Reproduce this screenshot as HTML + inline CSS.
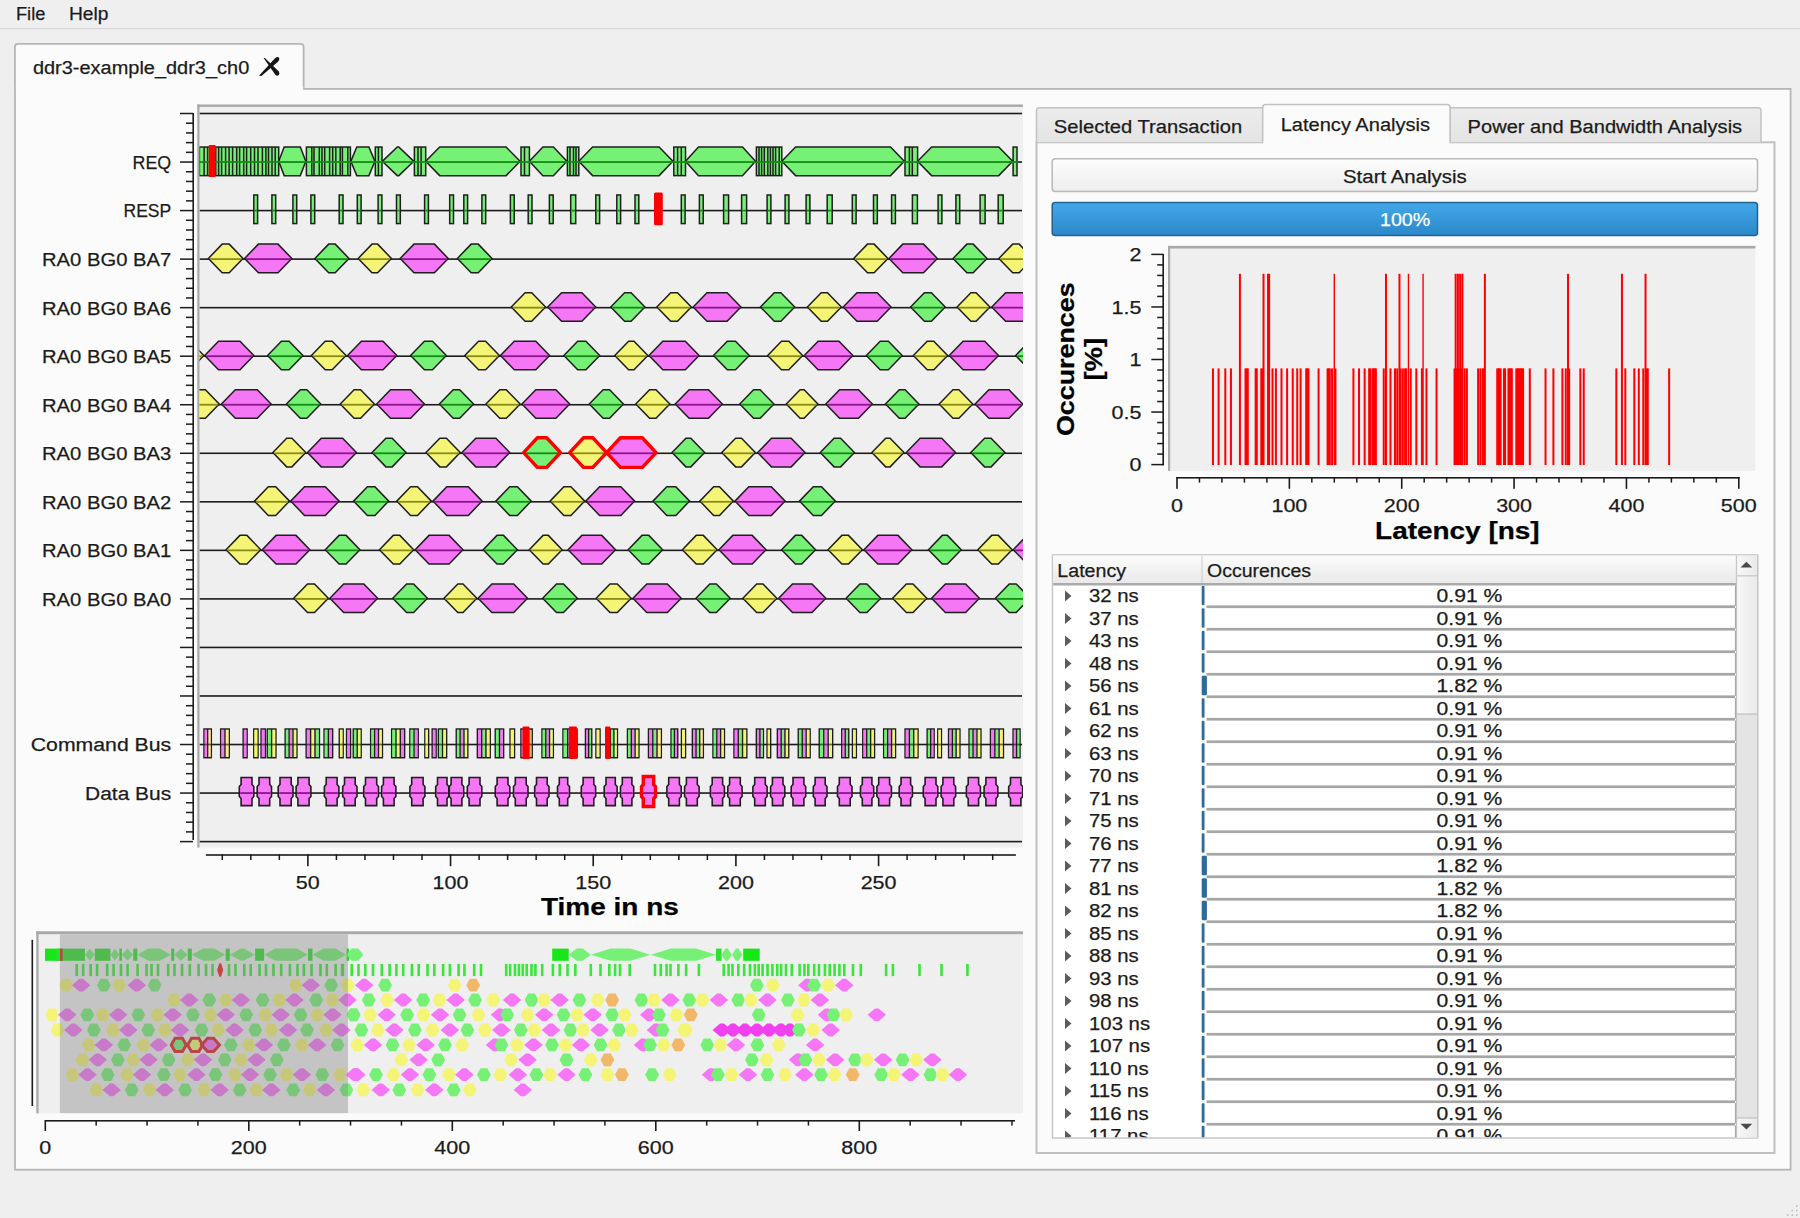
<!DOCTYPE html><html><head><meta charset="utf-8"><title>ddr3</title><style>html,body{margin:0;padding:0;width:1800px;height:1218px;overflow:hidden;background:#efefef;}svg{position:absolute;left:0;top:0;display:block;font-family:"Liberation Sans",sans-serif;}</style></head><body>
<svg width="1800" height="1218" viewBox="0 0 1800 1218">
<defs><linearGradient id="gBtn" x1="0" y1="0" x2="0" y2="1"><stop offset="0" stop-color="#fdfdfd"/><stop offset="1" stop-color="#ededed"/></linearGradient><linearGradient id="gProg" x1="0" y1="0" x2="0" y2="1"><stop offset="0" stop-color="#42a8ea"/><stop offset="1" stop-color="#2b88c8"/></linearGradient><linearGradient id="gHdr" x1="0" y1="0" x2="0" y2="1"><stop offset="0" stop-color="#fcfcfc"/><stop offset="1" stop-color="#e9e9e9"/></linearGradient><linearGradient id="gTabIn" x1="0" y1="0" x2="0" y2="1"><stop offset="0" stop-color="#ececec"/><stop offset="1" stop-color="#e4e4e4"/></linearGradient><linearGradient id="gThumb" x1="0" y1="0" x2="1" y2="0"><stop offset="0" stop-color="#f7f7f7"/><stop offset="1" stop-color="#eaeaea"/></linearGradient><clipPath id="cMain"><rect x="199.5" y="107" width="823.5" height="740.5"/></clipPath><clipPath id="cOv"><rect x="38.6" y="934.2" width="984.4" height="179.1"/></clipPath><clipPath id="cTbl"><rect x="1053.3" y="585.5" width="683" height="551.8"/></clipPath></defs>
<rect x="0" y="0" width="1800" height="1218" fill="#efefef"/>
<text x="16" y="20" font-size="19.2"  fill="#1b1b1b" stroke="#1b1b1b" stroke-width="0.25" textLength="29.34" lengthAdjust="spacingAndGlyphs">File</text>
<text x="68.9" y="20" font-size="19.2"  fill="#1b1b1b" stroke="#1b1b1b" stroke-width="0.25" textLength="39.49" lengthAdjust="spacingAndGlyphs">Help</text>
<rect x="0" y="28" width="1800" height="1.2" fill="#d6d6d6"/>
<rect x="15" y="88.9" width="1775.6" height="1080.8" fill="#fbfbfb" stroke="#b6b6b6" stroke-width="1.8"/>
<path d="M14.9 88.9 V47 Q14.9 43.8 18 43.8 H300.5 Q303.6 43.8 303.6 47 V88.9" fill="#fbfbfb" stroke="#b6b6b6" stroke-width="1.8"/>
<rect x="15.9" y="86" width="287.2" height="4" fill="#fbfbfb"/>
<text x="32.9" y="73.8" font-size="19.2"  fill="#1b1b1b" stroke="#1b1b1b" stroke-width="0.25" textLength="216.34" lengthAdjust="spacingAndGlyphs">ddr3-example_ddr3_ch0</text>
<path d="M259 75.8 L275.2 58 Q277.8 56.2 279.2 57.9 Q279.8 59.7 278 61.8 L261.4 76 Z" fill="#151515"/>
<path d="M263.6 57.9 L264.9 58.1 L278.6 71.2 Q280.2 73.8 278.5 75.3 Q276.6 76.3 275.2 74.4 Z" fill="#151515"/>
<rect x="197.3" y="104.5" width="825.7" height="743" fill="#efefef"/>
<rect x="197.3" y="104.5" width="825.7" height="2.4" fill="#a9a9a9"/>
<rect x="197.3" y="104.5" width="2.2" height="743" fill="#a9a9a9"/>
<rect x="192.4" y="113" width="1.6" height="727" fill="#1b1b1b"/>
<rect x="180" y="112.75" width="13" height="1.5" fill="#1b1b1b"/>
<rect x="186" y="122.46" width="7" height="1.5" fill="#1b1b1b"/>
<rect x="186" y="132.17" width="7" height="1.5" fill="#1b1b1b"/>
<rect x="186" y="141.87" width="7" height="1.5" fill="#1b1b1b"/>
<rect x="186" y="151.58" width="7" height="1.5" fill="#1b1b1b"/>
<rect x="180" y="161.29" width="13" height="1.5" fill="#1b1b1b"/>
<rect x="186" y="171" width="7" height="1.5" fill="#1b1b1b"/>
<rect x="186" y="180.71" width="7" height="1.5" fill="#1b1b1b"/>
<rect x="186" y="190.41" width="7" height="1.5" fill="#1b1b1b"/>
<rect x="186" y="200.12" width="7" height="1.5" fill="#1b1b1b"/>
<rect x="180" y="209.83" width="13" height="1.5" fill="#1b1b1b"/>
<rect x="186" y="219.54" width="7" height="1.5" fill="#1b1b1b"/>
<rect x="186" y="229.25" width="7" height="1.5" fill="#1b1b1b"/>
<rect x="186" y="238.95" width="7" height="1.5" fill="#1b1b1b"/>
<rect x="186" y="248.66" width="7" height="1.5" fill="#1b1b1b"/>
<rect x="180" y="258.37" width="13" height="1.5" fill="#1b1b1b"/>
<rect x="186" y="268.08" width="7" height="1.5" fill="#1b1b1b"/>
<rect x="186" y="277.79" width="7" height="1.5" fill="#1b1b1b"/>
<rect x="186" y="287.49" width="7" height="1.5" fill="#1b1b1b"/>
<rect x="186" y="297.2" width="7" height="1.5" fill="#1b1b1b"/>
<rect x="180" y="306.91" width="13" height="1.5" fill="#1b1b1b"/>
<rect x="186" y="316.62" width="7" height="1.5" fill="#1b1b1b"/>
<rect x="186" y="326.33" width="7" height="1.5" fill="#1b1b1b"/>
<rect x="186" y="336.03" width="7" height="1.5" fill="#1b1b1b"/>
<rect x="186" y="345.74" width="7" height="1.5" fill="#1b1b1b"/>
<rect x="180" y="355.45" width="13" height="1.5" fill="#1b1b1b"/>
<rect x="186" y="365.16" width="7" height="1.5" fill="#1b1b1b"/>
<rect x="186" y="374.87" width="7" height="1.5" fill="#1b1b1b"/>
<rect x="186" y="384.57" width="7" height="1.5" fill="#1b1b1b"/>
<rect x="186" y="394.28" width="7" height="1.5" fill="#1b1b1b"/>
<rect x="180" y="403.99" width="13" height="1.5" fill="#1b1b1b"/>
<rect x="186" y="413.7" width="7" height="1.5" fill="#1b1b1b"/>
<rect x="186" y="423.41" width="7" height="1.5" fill="#1b1b1b"/>
<rect x="186" y="433.11" width="7" height="1.5" fill="#1b1b1b"/>
<rect x="186" y="442.82" width="7" height="1.5" fill="#1b1b1b"/>
<rect x="180" y="452.53" width="13" height="1.5" fill="#1b1b1b"/>
<rect x="186" y="462.24" width="7" height="1.5" fill="#1b1b1b"/>
<rect x="186" y="471.95" width="7" height="1.5" fill="#1b1b1b"/>
<rect x="186" y="481.65" width="7" height="1.5" fill="#1b1b1b"/>
<rect x="186" y="491.36" width="7" height="1.5" fill="#1b1b1b"/>
<rect x="180" y="501.07" width="13" height="1.5" fill="#1b1b1b"/>
<rect x="186" y="510.78" width="7" height="1.5" fill="#1b1b1b"/>
<rect x="186" y="520.49" width="7" height="1.5" fill="#1b1b1b"/>
<rect x="186" y="530.19" width="7" height="1.5" fill="#1b1b1b"/>
<rect x="186" y="539.9" width="7" height="1.5" fill="#1b1b1b"/>
<rect x="180" y="549.61" width="13" height="1.5" fill="#1b1b1b"/>
<rect x="186" y="559.32" width="7" height="1.5" fill="#1b1b1b"/>
<rect x="186" y="569.03" width="7" height="1.5" fill="#1b1b1b"/>
<rect x="186" y="578.73" width="7" height="1.5" fill="#1b1b1b"/>
<rect x="186" y="588.44" width="7" height="1.5" fill="#1b1b1b"/>
<rect x="180" y="598.15" width="13" height="1.5" fill="#1b1b1b"/>
<rect x="186" y="607.86" width="7" height="1.5" fill="#1b1b1b"/>
<rect x="186" y="617.57" width="7" height="1.5" fill="#1b1b1b"/>
<rect x="186" y="627.27" width="7" height="1.5" fill="#1b1b1b"/>
<rect x="186" y="636.98" width="7" height="1.5" fill="#1b1b1b"/>
<rect x="180" y="646.69" width="13" height="1.5" fill="#1b1b1b"/>
<rect x="186" y="656.4" width="7" height="1.5" fill="#1b1b1b"/>
<rect x="186" y="666.11" width="7" height="1.5" fill="#1b1b1b"/>
<rect x="186" y="675.81" width="7" height="1.5" fill="#1b1b1b"/>
<rect x="186" y="685.52" width="7" height="1.5" fill="#1b1b1b"/>
<rect x="180" y="695.23" width="13" height="1.5" fill="#1b1b1b"/>
<rect x="186" y="704.94" width="7" height="1.5" fill="#1b1b1b"/>
<rect x="186" y="714.65" width="7" height="1.5" fill="#1b1b1b"/>
<rect x="186" y="724.35" width="7" height="1.5" fill="#1b1b1b"/>
<rect x="186" y="734.06" width="7" height="1.5" fill="#1b1b1b"/>
<rect x="180" y="743.77" width="13" height="1.5" fill="#1b1b1b"/>
<rect x="186" y="753.48" width="7" height="1.5" fill="#1b1b1b"/>
<rect x="186" y="763.19" width="7" height="1.5" fill="#1b1b1b"/>
<rect x="186" y="772.89" width="7" height="1.5" fill="#1b1b1b"/>
<rect x="186" y="782.6" width="7" height="1.5" fill="#1b1b1b"/>
<rect x="180" y="792.31" width="13" height="1.5" fill="#1b1b1b"/>
<rect x="186" y="802.02" width="7" height="1.5" fill="#1b1b1b"/>
<rect x="186" y="811.73" width="7" height="1.5" fill="#1b1b1b"/>
<rect x="186" y="821.43" width="7" height="1.5" fill="#1b1b1b"/>
<rect x="186" y="831.14" width="7" height="1.5" fill="#1b1b1b"/>
<rect x="180" y="840.85" width="13" height="1.5" fill="#1b1b1b"/>
<text x="132.6" y="168.94" font-size="19.2"  fill="#1b1b1b" stroke="#1b1b1b" stroke-width="0.25" textLength="38.61" lengthAdjust="spacingAndGlyphs">REQ</text>
<text x="123.5" y="217.48" font-size="19.2"  fill="#1b1b1b" stroke="#1b1b1b" stroke-width="0.25" textLength="47.69" lengthAdjust="spacingAndGlyphs">RESP</text>
<text x="42" y="266.02" font-size="19.2"  fill="#1b1b1b" stroke="#1b1b1b" stroke-width="0.25" textLength="129.23" lengthAdjust="spacingAndGlyphs">RA0 BG0 BA7</text>
<text x="42" y="314.56" font-size="19.2"  fill="#1b1b1b" stroke="#1b1b1b" stroke-width="0.25" textLength="129.23" lengthAdjust="spacingAndGlyphs">RA0 BG0 BA6</text>
<text x="42" y="363.1" font-size="19.2"  fill="#1b1b1b" stroke="#1b1b1b" stroke-width="0.25" textLength="129.23" lengthAdjust="spacingAndGlyphs">RA0 BG0 BA5</text>
<text x="42" y="411.64" font-size="19.2"  fill="#1b1b1b" stroke="#1b1b1b" stroke-width="0.25" textLength="129.23" lengthAdjust="spacingAndGlyphs">RA0 BG0 BA4</text>
<text x="42" y="460.18" font-size="19.2"  fill="#1b1b1b" stroke="#1b1b1b" stroke-width="0.25" textLength="129.23" lengthAdjust="spacingAndGlyphs">RA0 BG0 BA3</text>
<text x="42" y="508.72" font-size="19.2"  fill="#1b1b1b" stroke="#1b1b1b" stroke-width="0.25" textLength="129.23" lengthAdjust="spacingAndGlyphs">RA0 BG0 BA2</text>
<text x="42" y="557.26" font-size="19.2"  fill="#1b1b1b" stroke="#1b1b1b" stroke-width="0.25" textLength="129.23" lengthAdjust="spacingAndGlyphs">RA0 BG0 BA1</text>
<text x="42" y="605.8" font-size="19.2"  fill="#1b1b1b" stroke="#1b1b1b" stroke-width="0.25" textLength="129.23" lengthAdjust="spacingAndGlyphs">RA0 BG0 BA0</text>
<text x="30.8" y="751.42" font-size="19.2"  fill="#1b1b1b" stroke="#1b1b1b" stroke-width="0.25" textLength="140.38" lengthAdjust="spacingAndGlyphs">Command Bus</text>
<text x="85.1" y="799.96" font-size="19.2"  fill="#1b1b1b" stroke="#1b1b1b" stroke-width="0.25" textLength="86.07" lengthAdjust="spacingAndGlyphs">Data Bus</text>
<g clip-path="url(#cMain)">
<rect x="199.5" y="112.7" width="822.5" height="1.6" fill="#1b1b1b"/>
<rect x="199.5" y="161.24" width="822.5" height="1.6" fill="#1b1b1b"/>
<rect x="199.5" y="209.78" width="822.5" height="1.6" fill="#1b1b1b"/>
<rect x="199.5" y="258.32" width="822.5" height="1.6" fill="#1b1b1b"/>
<rect x="199.5" y="306.86" width="822.5" height="1.6" fill="#1b1b1b"/>
<rect x="199.5" y="355.4" width="822.5" height="1.6" fill="#1b1b1b"/>
<rect x="199.5" y="403.94" width="822.5" height="1.6" fill="#1b1b1b"/>
<rect x="199.5" y="452.48" width="822.5" height="1.6" fill="#1b1b1b"/>
<rect x="199.5" y="501.02" width="822.5" height="1.6" fill="#1b1b1b"/>
<rect x="199.5" y="549.56" width="822.5" height="1.6" fill="#1b1b1b"/>
<rect x="199.5" y="598.1" width="822.5" height="1.6" fill="#1b1b1b"/>
<rect x="199.5" y="646.64" width="822.5" height="1.6" fill="#1b1b1b"/>
<rect x="199.5" y="695.18" width="822.5" height="1.6" fill="#1b1b1b"/>
<rect x="199.5" y="743.72" width="822.5" height="1.6" fill="#1b1b1b"/>
<rect x="199.5" y="792.26" width="822.5" height="1.6" fill="#1b1b1b"/>
<rect x="199.5" y="840.8" width="822.5" height="1.6" fill="#1b1b1b"/>
<polygon points="278.7,161.34 284.2,147.04 300.3,147.04 305.8,161.34 300.3,175.64 284.2,175.64" fill="#76f176" stroke="#1e1e1e" stroke-width="1.5" stroke-linejoin="miter"/>
<polygon points="350.8,161.34 356.8,147.04 368.9,147.04 374.9,161.34 368.9,175.64 356.8,175.64" fill="#76f176" stroke="#1e1e1e" stroke-width="1.5" stroke-linejoin="miter"/>
<polygon points="382.3,161.34 397.3,147.04 398.8,147.04 413.8,161.34 398.8,175.64 397.3,175.64" fill="#76f176" stroke="#1e1e1e" stroke-width="1.5" stroke-linejoin="miter"/>
<polygon points="425.7,161.34 439.7,147.04 506.1,147.04 520.1,161.34 506.1,175.64 439.7,175.64" fill="#76f176" stroke="#1e1e1e" stroke-width="1.5" stroke-linejoin="miter"/>
<polygon points="529.4,161.34 542.9,147.04 553.4,147.04 566.9,161.34 553.4,175.64 542.9,175.64" fill="#76f176" stroke="#1e1e1e" stroke-width="1.5" stroke-linejoin="miter"/>
<polygon points="578.8,161.34 592.6,147.04 659.1,147.04 672.9,161.34 659.1,175.64 592.6,175.64" fill="#76f176" stroke="#1e1e1e" stroke-width="1.5" stroke-linejoin="miter"/>
<polygon points="685.5,161.34 698.5,147.04 742.5,147.04 755.5,161.34 742.5,175.64 698.5,175.64" fill="#76f176" stroke="#1e1e1e" stroke-width="1.5" stroke-linejoin="miter"/>
<polygon points="781.8,161.34 795.6,147.04 890.5,147.04 904.3,161.34 890.5,175.64 795.6,175.64" fill="#76f176" stroke="#1e1e1e" stroke-width="1.5" stroke-linejoin="miter"/>
<polygon points="917.6,161.34 931.6,147.04 998.7,147.04 1012.7,161.34 998.7,175.64 931.6,175.64" fill="#76f176" stroke="#1e1e1e" stroke-width="1.5" stroke-linejoin="miter"/>
<rect x="199.4" y="147.04" width="79.3" height="28.6" fill="#76f176" stroke="#1e1e1e" stroke-width="1.5"/>
<rect x="203.35" y="147.04" width="1.5" height="28.6" fill="#1e1e1e"/>
<rect x="206.85" y="147.04" width="1.5" height="28.6" fill="#1e1e1e"/>
<rect x="214.95" y="147.04" width="1.5" height="28.6" fill="#1e1e1e"/>
<rect x="217.85" y="147.04" width="1.5" height="28.6" fill="#1e1e1e"/>
<rect x="220.85" y="147.04" width="1.5" height="28.6" fill="#1e1e1e"/>
<rect x="224.85" y="147.04" width="1.5" height="28.6" fill="#1e1e1e"/>
<rect x="228.35" y="147.04" width="1.5" height="28.6" fill="#1e1e1e"/>
<rect x="231.85" y="147.04" width="1.5" height="28.6" fill="#1e1e1e"/>
<rect x="235.95" y="147.04" width="1.5" height="28.6" fill="#1e1e1e"/>
<rect x="238.85" y="147.04" width="1.5" height="28.6" fill="#1e1e1e"/>
<rect x="242.95" y="147.04" width="1.5" height="28.6" fill="#1e1e1e"/>
<rect x="245.85" y="147.04" width="1.5" height="28.6" fill="#1e1e1e"/>
<rect x="249.95" y="147.04" width="1.5" height="28.6" fill="#1e1e1e"/>
<rect x="253.75" y="147.04" width="1.5" height="28.6" fill="#1e1e1e"/>
<rect x="257.25" y="147.04" width="1.5" height="28.6" fill="#1e1e1e"/>
<rect x="261.65" y="147.04" width="1.5" height="28.6" fill="#1e1e1e"/>
<rect x="265.15" y="147.04" width="1.5" height="28.6" fill="#1e1e1e"/>
<rect x="267.75" y="147.04" width="1.5" height="28.6" fill="#1e1e1e"/>
<rect x="271.25" y="147.04" width="1.5" height="28.6" fill="#1e1e1e"/>
<rect x="274.45" y="147.04" width="1.5" height="28.6" fill="#1e1e1e"/>
<rect x="306.4" y="147.04" width="44" height="28.6" fill="#76f176" stroke="#1e1e1e" stroke-width="1.5"/>
<rect x="311.05" y="147.04" width="1.5" height="28.6" fill="#1e1e1e"/>
<rect x="313.25" y="147.04" width="1.5" height="28.6" fill="#1e1e1e"/>
<rect x="318.55" y="147.04" width="1.5" height="28.6" fill="#1e1e1e"/>
<rect x="321.25" y="147.04" width="1.5" height="28.6" fill="#1e1e1e"/>
<rect x="323.95" y="147.04" width="1.5" height="28.6" fill="#1e1e1e"/>
<rect x="328.85" y="147.04" width="1.5" height="28.6" fill="#1e1e1e"/>
<rect x="331.95" y="147.04" width="1.5" height="28.6" fill="#1e1e1e"/>
<rect x="335.05" y="147.04" width="1.5" height="28.6" fill="#1e1e1e"/>
<rect x="339.45" y="147.04" width="1.5" height="28.6" fill="#1e1e1e"/>
<rect x="341.65" y="147.04" width="1.5" height="28.6" fill="#1e1e1e"/>
<rect x="347.05" y="147.04" width="1.5" height="28.6" fill="#1e1e1e"/>
<rect x="375.3" y="147.04" width="6.7" height="28.6" fill="#76f176" stroke="#1e1e1e" stroke-width="1.5"/>
<rect x="377.65" y="147.04" width="1.5" height="28.6" fill="#1e1e1e"/>
<rect x="414.4" y="147.04" width="11.3" height="28.6" fill="#76f176" stroke="#1e1e1e" stroke-width="1.5"/>
<rect x="417.25" y="147.04" width="1.5" height="28.6" fill="#1e1e1e"/>
<rect x="420.35" y="147.04" width="1.5" height="28.6" fill="#1e1e1e"/>
<rect x="521" y="147.04" width="8.4" height="28.6" fill="#76f176" stroke="#1e1e1e" stroke-width="1.5"/>
<rect x="523.75" y="147.04" width="1.5" height="28.6" fill="#1e1e1e"/>
<rect x="567.4" y="147.04" width="11.4" height="28.6" fill="#76f176" stroke="#1e1e1e" stroke-width="1.5"/>
<rect x="569.25" y="147.04" width="1.5" height="28.6" fill="#1e1e1e"/>
<rect x="572.75" y="147.04" width="1.5" height="28.6" fill="#1e1e1e"/>
<rect x="575.25" y="147.04" width="1.5" height="28.6" fill="#1e1e1e"/>
<rect x="673.8" y="147.04" width="11.7" height="28.6" fill="#76f176" stroke="#1e1e1e" stroke-width="1.5"/>
<rect x="676.85" y="147.04" width="1.5" height="28.6" fill="#1e1e1e"/>
<rect x="680.55" y="147.04" width="1.5" height="28.6" fill="#1e1e1e"/>
<rect x="756.4" y="147.04" width="25.4" height="28.6" fill="#76f176" stroke="#1e1e1e" stroke-width="1.5"/>
<rect x="758.25" y="147.04" width="1.5" height="28.6" fill="#1e1e1e"/>
<rect x="760.85" y="147.04" width="1.5" height="28.6" fill="#1e1e1e"/>
<rect x="763.55" y="147.04" width="1.5" height="28.6" fill="#1e1e1e"/>
<rect x="767.05" y="147.04" width="1.5" height="28.6" fill="#1e1e1e"/>
<rect x="769.65" y="147.04" width="1.5" height="28.6" fill="#1e1e1e"/>
<rect x="772.25" y="147.04" width="1.5" height="28.6" fill="#1e1e1e"/>
<rect x="774.85" y="147.04" width="1.5" height="28.6" fill="#1e1e1e"/>
<rect x="778.45" y="147.04" width="1.5" height="28.6" fill="#1e1e1e"/>
<rect x="905" y="147.04" width="12.6" height="28.6" fill="#76f176" stroke="#1e1e1e" stroke-width="1.5"/>
<rect x="908.65" y="147.04" width="1.5" height="28.6" fill="#1e1e1e"/>
<rect x="911.55" y="147.04" width="1.5" height="28.6" fill="#1e1e1e"/>
<rect x="1013.1" y="147.04" width="3.9" height="28.6" fill="#76f176" stroke="#1e1e1e" stroke-width="1.5"/>
<rect x="199.5" y="161.14" width="818.5" height="1.8" fill="#148c14"/>
<rect x="208.7" y="144.9" width="7" height="32.2" rx="1" fill="#ff0000"/>
<rect x="253.8" y="194.98" width="3.8" height="28.6" fill="#76f176" stroke="#1e1e1e" stroke-width="1.5"/>
<rect x="254.5" y="209.68" width="2.4" height="1.8" fill="#148c14"/>
<rect x="271.9" y="194.98" width="3.8" height="28.6" fill="#76f176" stroke="#1e1e1e" stroke-width="1.5"/>
<rect x="272.6" y="209.68" width="2.4" height="1.8" fill="#148c14"/>
<rect x="292.9" y="194.98" width="3.8" height="28.6" fill="#76f176" stroke="#1e1e1e" stroke-width="1.5"/>
<rect x="293.6" y="209.68" width="2.4" height="1.8" fill="#148c14"/>
<rect x="310.9" y="194.98" width="3.8" height="28.6" fill="#76f176" stroke="#1e1e1e" stroke-width="1.5"/>
<rect x="311.6" y="209.68" width="2.4" height="1.8" fill="#148c14"/>
<rect x="339.2" y="194.98" width="3.8" height="28.6" fill="#76f176" stroke="#1e1e1e" stroke-width="1.5"/>
<rect x="339.9" y="209.68" width="2.4" height="1.8" fill="#148c14"/>
<rect x="357.3" y="194.98" width="3.8" height="28.6" fill="#76f176" stroke="#1e1e1e" stroke-width="1.5"/>
<rect x="358" y="209.68" width="2.4" height="1.8" fill="#148c14"/>
<rect x="378.1" y="194.98" width="3.8" height="28.6" fill="#76f176" stroke="#1e1e1e" stroke-width="1.5"/>
<rect x="378.8" y="209.68" width="2.4" height="1.8" fill="#148c14"/>
<rect x="396.5" y="194.98" width="3.8" height="28.6" fill="#76f176" stroke="#1e1e1e" stroke-width="1.5"/>
<rect x="397.2" y="209.68" width="2.4" height="1.8" fill="#148c14"/>
<rect x="424.6" y="194.98" width="3.8" height="28.6" fill="#76f176" stroke="#1e1e1e" stroke-width="1.5"/>
<rect x="425.3" y="209.68" width="2.4" height="1.8" fill="#148c14"/>
<rect x="449.7" y="194.98" width="3.8" height="28.6" fill="#76f176" stroke="#1e1e1e" stroke-width="1.5"/>
<rect x="450.4" y="209.68" width="2.4" height="1.8" fill="#148c14"/>
<rect x="463.8" y="194.98" width="3.8" height="28.6" fill="#76f176" stroke="#1e1e1e" stroke-width="1.5"/>
<rect x="464.5" y="209.68" width="2.4" height="1.8" fill="#148c14"/>
<rect x="481.9" y="194.98" width="3.8" height="28.6" fill="#76f176" stroke="#1e1e1e" stroke-width="1.5"/>
<rect x="482.6" y="209.68" width="2.4" height="1.8" fill="#148c14"/>
<rect x="510.4" y="194.98" width="3.8" height="28.6" fill="#76f176" stroke="#1e1e1e" stroke-width="1.5"/>
<rect x="511.1" y="209.68" width="2.4" height="1.8" fill="#148c14"/>
<rect x="528.2" y="194.98" width="3.8" height="28.6" fill="#76f176" stroke="#1e1e1e" stroke-width="1.5"/>
<rect x="528.9" y="209.68" width="2.4" height="1.8" fill="#148c14"/>
<rect x="549.4" y="194.98" width="3.8" height="28.6" fill="#76f176" stroke="#1e1e1e" stroke-width="1.5"/>
<rect x="550.1" y="209.68" width="2.4" height="1.8" fill="#148c14"/>
<rect x="570.7" y="194.98" width="5" height="28.6" fill="#76f176" stroke="#1e1e1e" stroke-width="1.5"/>
<rect x="571.4" y="209.68" width="3.6" height="1.8" fill="#148c14"/>
<rect x="595.8" y="194.98" width="3.8" height="28.6" fill="#76f176" stroke="#1e1e1e" stroke-width="1.5"/>
<rect x="596.5" y="209.68" width="2.4" height="1.8" fill="#148c14"/>
<rect x="616.8" y="194.98" width="3.8" height="28.6" fill="#76f176" stroke="#1e1e1e" stroke-width="1.5"/>
<rect x="617.5" y="209.68" width="2.4" height="1.8" fill="#148c14"/>
<rect x="635" y="194.98" width="3.8" height="28.6" fill="#76f176" stroke="#1e1e1e" stroke-width="1.5"/>
<rect x="635.7" y="209.68" width="2.4" height="1.8" fill="#148c14"/>
<rect x="681.3" y="194.98" width="3.8" height="28.6" fill="#76f176" stroke="#1e1e1e" stroke-width="1.5"/>
<rect x="682" y="209.68" width="2.4" height="1.8" fill="#148c14"/>
<rect x="699.4" y="194.98" width="3.8" height="28.6" fill="#76f176" stroke="#1e1e1e" stroke-width="1.5"/>
<rect x="700.1" y="209.68" width="2.4" height="1.8" fill="#148c14"/>
<rect x="723.6" y="194.98" width="5" height="28.6" fill="#76f176" stroke="#1e1e1e" stroke-width="1.5"/>
<rect x="724.3" y="209.68" width="3.6" height="1.8" fill="#148c14"/>
<rect x="741.6" y="194.98" width="5" height="28.6" fill="#76f176" stroke="#1e1e1e" stroke-width="1.5"/>
<rect x="742.3" y="209.68" width="3.6" height="1.8" fill="#148c14"/>
<rect x="767.1" y="194.98" width="3.8" height="28.6" fill="#76f176" stroke="#1e1e1e" stroke-width="1.5"/>
<rect x="767.8" y="209.68" width="2.4" height="1.8" fill="#148c14"/>
<rect x="785.1" y="194.98" width="3.8" height="28.6" fill="#76f176" stroke="#1e1e1e" stroke-width="1.5"/>
<rect x="785.8" y="209.68" width="2.4" height="1.8" fill="#148c14"/>
<rect x="806.1" y="194.98" width="3.8" height="28.6" fill="#76f176" stroke="#1e1e1e" stroke-width="1.5"/>
<rect x="806.8" y="209.68" width="2.4" height="1.8" fill="#148c14"/>
<rect x="827.2" y="194.98" width="5" height="28.6" fill="#76f176" stroke="#1e1e1e" stroke-width="1.5"/>
<rect x="827.9" y="209.68" width="3.6" height="1.8" fill="#148c14"/>
<rect x="852.3" y="194.98" width="3.8" height="28.6" fill="#76f176" stroke="#1e1e1e" stroke-width="1.5"/>
<rect x="853" y="209.68" width="2.4" height="1.8" fill="#148c14"/>
<rect x="873.5" y="194.98" width="3.8" height="28.6" fill="#76f176" stroke="#1e1e1e" stroke-width="1.5"/>
<rect x="874.2" y="209.68" width="2.4" height="1.8" fill="#148c14"/>
<rect x="891.6" y="194.98" width="3.8" height="28.6" fill="#76f176" stroke="#1e1e1e" stroke-width="1.5"/>
<rect x="892.3" y="209.68" width="2.4" height="1.8" fill="#148c14"/>
<rect x="912.4" y="194.98" width="5" height="28.6" fill="#76f176" stroke="#1e1e1e" stroke-width="1.5"/>
<rect x="913.1" y="209.68" width="3.6" height="1.8" fill="#148c14"/>
<rect x="938.1" y="194.98" width="3.8" height="28.6" fill="#76f176" stroke="#1e1e1e" stroke-width="1.5"/>
<rect x="938.8" y="209.68" width="2.4" height="1.8" fill="#148c14"/>
<rect x="955.9" y="194.98" width="3.8" height="28.6" fill="#76f176" stroke="#1e1e1e" stroke-width="1.5"/>
<rect x="956.6" y="209.68" width="2.4" height="1.8" fill="#148c14"/>
<rect x="980.1" y="194.98" width="5" height="28.6" fill="#76f176" stroke="#1e1e1e" stroke-width="1.5"/>
<rect x="980.8" y="209.68" width="3.6" height="1.8" fill="#148c14"/>
<rect x="998.2" y="194.98" width="5" height="28.6" fill="#76f176" stroke="#1e1e1e" stroke-width="1.5"/>
<rect x="998.9" y="209.68" width="3.6" height="1.8" fill="#148c14"/>
<rect x="654" y="192.5" width="8.8" height="32.7" rx="1.5" fill="#ff0000"/>
<polygon points="208.4,258.42 222.2,244.12 229.2,244.12 243,258.42 229.2,272.72 222.2,272.72" fill="#f4f476" stroke="#1e1e1e" stroke-width="1.5" stroke-linejoin="miter"/>
<rect x="209.9" y="258.22" width="31.6" height="1.8" fill="#8c8c14"/>
<polygon points="244.6,258.42 258.4,244.12 278,244.12 291.8,258.42 278,272.72 258.4,272.72" fill="#f677f6" stroke="#1e1e1e" stroke-width="1.5" stroke-linejoin="miter"/>
<rect x="246.1" y="258.22" width="44.2" height="1.8" fill="#8c148c"/>
<polygon points="314.9,258.42 328.7,244.12 335.2,244.12 349,258.42 335.2,272.72 328.7,272.72" fill="#76f176" stroke="#1e1e1e" stroke-width="1.5" stroke-linejoin="miter"/>
<rect x="316.4" y="258.22" width="31.1" height="1.8" fill="#148c14"/>
<polygon points="358.2,258.42 372,244.12 377.6,244.12 391.4,258.42 377.6,272.72 372,272.72" fill="#f4f476" stroke="#1e1e1e" stroke-width="1.5" stroke-linejoin="miter"/>
<rect x="359.7" y="258.22" width="30.2" height="1.8" fill="#8c8c14"/>
<polygon points="400.2,258.42 414,244.12 434.4,244.12 448.2,258.42 434.4,272.72 414,272.72" fill="#f677f6" stroke="#1e1e1e" stroke-width="1.5" stroke-linejoin="miter"/>
<rect x="401.7" y="258.22" width="45" height="1.8" fill="#8c148c"/>
<polygon points="457.4,258.42 471.2,244.12 478.2,244.12 492,258.42 478.2,272.72 471.2,272.72" fill="#76f176" stroke="#1e1e1e" stroke-width="1.5" stroke-linejoin="miter"/>
<rect x="458.9" y="258.22" width="31.6" height="1.8" fill="#148c14"/>
<polygon points="853.7,258.42 867.5,244.12 874.1,244.12 887.9,258.42 874.1,272.72 867.5,272.72" fill="#f4f476" stroke="#1e1e1e" stroke-width="1.5" stroke-linejoin="miter"/>
<rect x="855.2" y="258.22" width="31.2" height="1.8" fill="#8c8c14"/>
<polygon points="889,258.42 902.8,244.12 923.5,244.12 937.3,258.42 923.5,272.72 902.8,272.72" fill="#f677f6" stroke="#1e1e1e" stroke-width="1.5" stroke-linejoin="miter"/>
<rect x="890.5" y="258.22" width="45.3" height="1.8" fill="#8c148c"/>
<polygon points="953.1,258.42 966.9,244.12 973.2,244.12 987,258.42 973.2,272.72 966.9,272.72" fill="#76f176" stroke="#1e1e1e" stroke-width="1.5" stroke-linejoin="miter"/>
<rect x="954.6" y="258.22" width="30.9" height="1.8" fill="#148c14"/>
<polygon points="998.9,258.42 1012.7,244.12 1019.2,244.12 1033,258.42 1019.2,272.72 1012.7,272.72" fill="#f4f476" stroke="#1e1e1e" stroke-width="1.5" stroke-linejoin="miter"/>
<rect x="1000.4" y="258.22" width="31.1" height="1.8" fill="#8c8c14"/>
<polygon points="511.3,306.96 525.1,292.66 531.7,292.66 545.5,306.96 531.7,321.26 525.1,321.26" fill="#f4f476" stroke="#1e1e1e" stroke-width="1.5" stroke-linejoin="miter"/>
<rect x="512.8" y="306.76" width="31.2" height="1.8" fill="#8c8c14"/>
<polygon points="547.8,306.96 561.6,292.66 581.9,292.66 595.7,306.96 581.9,321.26 561.6,321.26" fill="#f677f6" stroke="#1e1e1e" stroke-width="1.5" stroke-linejoin="miter"/>
<rect x="549.3" y="306.76" width="44.9" height="1.8" fill="#8c148c"/>
<polygon points="610.8,306.96 624.6,292.66 631.1,292.66 644.9,306.96 631.1,321.26 624.6,321.26" fill="#76f176" stroke="#1e1e1e" stroke-width="1.5" stroke-linejoin="miter"/>
<rect x="612.3" y="306.76" width="31.1" height="1.8" fill="#148c14"/>
<polygon points="656.9,306.96 670.7,292.66 677.5,292.66 691.3,306.96 677.5,321.26 670.7,321.26" fill="#f4f476" stroke="#1e1e1e" stroke-width="1.5" stroke-linejoin="miter"/>
<rect x="658.4" y="306.76" width="31.4" height="1.8" fill="#8c8c14"/>
<polygon points="693.2,306.96 707,292.66 727.1,292.66 740.9,306.96 727.1,321.26 707,321.26" fill="#f677f6" stroke="#1e1e1e" stroke-width="1.5" stroke-linejoin="miter"/>
<rect x="694.7" y="306.76" width="44.7" height="1.8" fill="#8c148c"/>
<polygon points="760.5,306.96 774.3,292.66 780.9,292.66 794.7,306.96 780.9,321.26 774.3,321.26" fill="#76f176" stroke="#1e1e1e" stroke-width="1.5" stroke-linejoin="miter"/>
<rect x="762" y="306.76" width="31.2" height="1.8" fill="#148c14"/>
<polygon points="807.4,306.96 821.2,292.66 827.5,292.66 841.3,306.96 827.5,321.26 821.2,321.26" fill="#f4f476" stroke="#1e1e1e" stroke-width="1.5" stroke-linejoin="miter"/>
<rect x="808.9" y="306.76" width="30.9" height="1.8" fill="#8c8c14"/>
<polygon points="843.2,306.96 857,292.66 877.2,292.66 891,306.96 877.2,321.26 857,321.26" fill="#f677f6" stroke="#1e1e1e" stroke-width="1.5" stroke-linejoin="miter"/>
<rect x="844.7" y="306.76" width="44.8" height="1.8" fill="#8c148c"/>
<polygon points="910.6,306.96 924.4,292.66 931.4,292.66 945.2,306.96 931.4,321.26 924.4,321.26" fill="#76f176" stroke="#1e1e1e" stroke-width="1.5" stroke-linejoin="miter"/>
<rect x="912.1" y="306.76" width="31.6" height="1.8" fill="#148c14"/>
<polygon points="957.1,306.96 970.9,292.66 976.1,292.66 989.9,306.96 976.1,321.26 970.9,321.26" fill="#f4f476" stroke="#1e1e1e" stroke-width="1.5" stroke-linejoin="miter"/>
<rect x="958.6" y="306.76" width="29.8" height="1.8" fill="#8c8c14"/>
<polygon points="991.8,306.96 1005.6,292.66 1026.2,292.66 1040,306.96 1026.2,321.26 1005.6,321.26" fill="#f677f6" stroke="#1e1e1e" stroke-width="1.5" stroke-linejoin="miter"/>
<rect x="993.3" y="306.76" width="45.2" height="1.8" fill="#8c148c"/>
<polygon points="170,355.5 183.8,341.2 190,341.2 203.8,355.5 190,369.8 183.8,369.8" fill="#f4f476" stroke="#1e1e1e" stroke-width="1.5" stroke-linejoin="miter"/>
<rect x="171.5" y="355.3" width="30.8" height="1.8" fill="#8c8c14"/>
<polygon points="204.7,355.5 218.5,341.2 240,341.2 253.8,355.5 240,369.8 218.5,369.8" fill="#f677f6" stroke="#1e1e1e" stroke-width="1.5" stroke-linejoin="miter"/>
<rect x="206.2" y="355.3" width="46.1" height="1.8" fill="#8c148c"/>
<polygon points="267.6,355.5 281.4,341.2 289.1,341.2 302.9,355.5 289.1,369.8 281.4,369.8" fill="#76f176" stroke="#1e1e1e" stroke-width="1.5" stroke-linejoin="miter"/>
<rect x="269.1" y="355.3" width="32.3" height="1.8" fill="#148c14"/>
<polygon points="311.4,355.5 325.2,341.2 332.2,341.2 346,355.5 332.2,369.8 325.2,369.8" fill="#f4f476" stroke="#1e1e1e" stroke-width="1.5" stroke-linejoin="miter"/>
<rect x="312.9" y="355.3" width="31.6" height="1.8" fill="#8c8c14"/>
<polygon points="347.6,355.5 361.4,341.2 383,341.2 396.8,355.5 383,369.8 361.4,369.8" fill="#f677f6" stroke="#1e1e1e" stroke-width="1.5" stroke-linejoin="miter"/>
<rect x="349.1" y="355.3" width="46.2" height="1.8" fill="#8c148c"/>
<polygon points="410.6,355.5 424.4,341.2 432.5,341.2 446.3,355.5 432.5,369.8 424.4,369.8" fill="#76f176" stroke="#1e1e1e" stroke-width="1.5" stroke-linejoin="miter"/>
<rect x="412.1" y="355.3" width="32.7" height="1.8" fill="#148c14"/>
<polygon points="464.8,355.5 478.6,341.2 485.6,341.2 499.4,355.5 485.6,369.8 478.6,369.8" fill="#f4f476" stroke="#1e1e1e" stroke-width="1.5" stroke-linejoin="miter"/>
<rect x="466.3" y="355.3" width="31.6" height="1.8" fill="#8c8c14"/>
<polygon points="500.5,355.5 514.3,341.2 535.8,341.2 549.6,355.5 535.8,369.8 514.3,369.8" fill="#f677f6" stroke="#1e1e1e" stroke-width="1.5" stroke-linejoin="miter"/>
<rect x="502" y="355.3" width="46.1" height="1.8" fill="#8c148c"/>
<polygon points="563.9,355.5 577.7,341.2 585.9,341.2 599.7,355.5 585.9,369.8 577.7,369.8" fill="#76f176" stroke="#1e1e1e" stroke-width="1.5" stroke-linejoin="miter"/>
<rect x="565.4" y="355.3" width="32.8" height="1.8" fill="#148c14"/>
<polygon points="614.8,355.5 628.6,341.2 634,341.2 647.8,355.5 634,369.8 628.6,369.8" fill="#f4f476" stroke="#1e1e1e" stroke-width="1.5" stroke-linejoin="miter"/>
<rect x="616.3" y="355.3" width="30" height="1.8" fill="#8c8c14"/>
<polygon points="649,355.5 662.8,341.2 685.3,341.2 699.1,355.5 685.3,369.8 662.8,369.8" fill="#f677f6" stroke="#1e1e1e" stroke-width="1.5" stroke-linejoin="miter"/>
<rect x="650.5" y="355.3" width="47.1" height="1.8" fill="#8c148c"/>
<polygon points="713.5,355.5 727.3,341.2 735.5,341.2 749.3,355.5 735.5,369.8 727.3,369.8" fill="#76f176" stroke="#1e1e1e" stroke-width="1.5" stroke-linejoin="miter"/>
<rect x="715" y="355.3" width="32.8" height="1.8" fill="#148c14"/>
<polygon points="767.7,355.5 781.5,341.2 788.8,341.2 802.6,355.5 788.8,369.8 781.5,369.8" fill="#f4f476" stroke="#1e1e1e" stroke-width="1.5" stroke-linejoin="miter"/>
<rect x="769.2" y="355.3" width="31.9" height="1.8" fill="#8c8c14"/>
<polygon points="804.3,355.5 818.1,341.2 839,341.2 852.8,355.5 839,369.8 818.1,369.8" fill="#f677f6" stroke="#1e1e1e" stroke-width="1.5" stroke-linejoin="miter"/>
<rect x="805.8" y="355.3" width="45.5" height="1.8" fill="#8c148c"/>
<polygon points="866.4,355.5 880.2,341.2 888.4,341.2 902.2,355.5 888.4,369.8 880.2,369.8" fill="#76f176" stroke="#1e1e1e" stroke-width="1.5" stroke-linejoin="miter"/>
<rect x="867.9" y="355.3" width="32.8" height="1.8" fill="#148c14"/>
<polygon points="913.4,355.5 927.2,341.2 933.8,341.2 947.6,355.5 933.8,369.8 927.2,369.8" fill="#f4f476" stroke="#1e1e1e" stroke-width="1.5" stroke-linejoin="miter"/>
<rect x="914.9" y="355.3" width="31.2" height="1.8" fill="#8c8c14"/>
<polygon points="949.3,355.5 963.1,341.2 984.7,341.2 998.5,355.5 984.7,369.8 963.1,369.8" fill="#f677f6" stroke="#1e1e1e" stroke-width="1.5" stroke-linejoin="miter"/>
<rect x="950.8" y="355.3" width="46.2" height="1.8" fill="#8c148c"/>
<polygon points="1015.7,355.5 1029.5,341.2 1036.2,341.2 1050,355.5 1036.2,369.8 1029.5,369.8" fill="#76f176" stroke="#1e1e1e" stroke-width="1.5" stroke-linejoin="miter"/>
<rect x="1017.2" y="355.3" width="31.3" height="1.8" fill="#148c14"/>
<polygon points="185,404.04 198.8,389.74 205.4,389.74 219.2,404.04 205.4,418.34 198.8,418.34" fill="#f4f476" stroke="#1e1e1e" stroke-width="1.5" stroke-linejoin="miter"/>
<rect x="186.5" y="403.84" width="31.2" height="1.8" fill="#8c8c14"/>
<polygon points="221.5,404.04 235.3,389.74 257.3,389.74 271.1,404.04 257.3,418.34 235.3,418.34" fill="#f677f6" stroke="#1e1e1e" stroke-width="1.5" stroke-linejoin="miter"/>
<rect x="223" y="403.84" width="46.6" height="1.8" fill="#8c148c"/>
<polygon points="286.5,404.04 300.3,389.74 306.9,389.74 320.7,404.04 306.9,418.34 300.3,418.34" fill="#76f176" stroke="#1e1e1e" stroke-width="1.5" stroke-linejoin="miter"/>
<rect x="288" y="403.84" width="31.2" height="1.8" fill="#148c14"/>
<polygon points="340.3,404.04 354.1,389.74 360.6,389.74 374.4,404.04 360.6,418.34 354.1,418.34" fill="#f4f476" stroke="#1e1e1e" stroke-width="1.5" stroke-linejoin="miter"/>
<rect x="341.8" y="403.84" width="31.1" height="1.8" fill="#8c8c14"/>
<polygon points="376.7,404.04 390.5,389.74 410.6,389.74 424.4,404.04 410.6,418.34 390.5,418.34" fill="#f677f6" stroke="#1e1e1e" stroke-width="1.5" stroke-linejoin="miter"/>
<rect x="378.2" y="403.84" width="44.7" height="1.8" fill="#8c148c"/>
<polygon points="439.4,404.04 453.2,389.74 459.7,389.74 473.5,404.04 459.7,418.34 453.2,418.34" fill="#76f176" stroke="#1e1e1e" stroke-width="1.5" stroke-linejoin="miter"/>
<rect x="440.9" y="403.84" width="31.1" height="1.8" fill="#148c14"/>
<polygon points="486,404.04 499.8,389.74 506.3,389.74 520.1,404.04 506.3,418.34 499.8,418.34" fill="#f4f476" stroke="#1e1e1e" stroke-width="1.5" stroke-linejoin="miter"/>
<rect x="487.5" y="403.84" width="31.1" height="1.8" fill="#8c8c14"/>
<polygon points="522,404.04 535.8,389.74 555.9,389.74 569.7,404.04 555.9,418.34 535.8,418.34" fill="#f677f6" stroke="#1e1e1e" stroke-width="1.5" stroke-linejoin="miter"/>
<rect x="523.5" y="403.84" width="44.7" height="1.8" fill="#8c148c"/>
<polygon points="589.3,404.04 603.1,389.74 609.6,389.74 623.4,404.04 609.6,418.34 603.1,418.34" fill="#76f176" stroke="#1e1e1e" stroke-width="1.5" stroke-linejoin="miter"/>
<rect x="590.8" y="403.84" width="31.1" height="1.8" fill="#148c14"/>
<polygon points="635.8,404.04 649.6,389.74 656,389.74 669.8,404.04 656,418.34 649.6,418.34" fill="#f4f476" stroke="#1e1e1e" stroke-width="1.5" stroke-linejoin="miter"/>
<rect x="637.3" y="403.84" width="31" height="1.8" fill="#8c8c14"/>
<polygon points="675.3,404.04 689.1,389.74 708.5,389.74 722.3,404.04 708.5,418.34 689.1,418.34" fill="#f677f6" stroke="#1e1e1e" stroke-width="1.5" stroke-linejoin="miter"/>
<rect x="676.8" y="403.84" width="44" height="1.8" fill="#8c148c"/>
<polygon points="739.8,404.04 753.6,389.74 760.1,389.74 773.9,404.04 760.1,418.34 753.6,418.34" fill="#76f176" stroke="#1e1e1e" stroke-width="1.5" stroke-linejoin="miter"/>
<rect x="741.3" y="403.84" width="31.1" height="1.8" fill="#148c14"/>
<polygon points="786.3,404.04 800.1,389.74 804.1,389.74 817.9,404.04 804.1,418.34 800.1,418.34" fill="#f4f476" stroke="#1e1e1e" stroke-width="1.5" stroke-linejoin="miter"/>
<rect x="787.8" y="403.84" width="28.6" height="1.8" fill="#8c8c14"/>
<polygon points="825.8,404.04 839.6,389.74 858.5,389.74 872.3,404.04 858.5,418.34 839.6,418.34" fill="#f677f6" stroke="#1e1e1e" stroke-width="1.5" stroke-linejoin="miter"/>
<rect x="827.3" y="403.84" width="43.5" height="1.8" fill="#8c148c"/>
<polygon points="885.5,404.04 899.3,389.74 905.1,389.74 918.9,404.04 905.1,418.34 899.3,418.34" fill="#76f176" stroke="#1e1e1e" stroke-width="1.5" stroke-linejoin="miter"/>
<rect x="887" y="403.84" width="30.4" height="1.8" fill="#148c14"/>
<polygon points="939.2,404.04 953,389.74 958.9,389.74 972.7,404.04 958.9,418.34 953,418.34" fill="#f4f476" stroke="#1e1e1e" stroke-width="1.5" stroke-linejoin="miter"/>
<rect x="940.7" y="403.84" width="30.5" height="1.8" fill="#8c8c14"/>
<polygon points="975.1,404.04 988.9,389.74 1009,389.74 1022.8,404.04 1009,418.34 988.9,418.34" fill="#f677f6" stroke="#1e1e1e" stroke-width="1.5" stroke-linejoin="miter"/>
<rect x="976.6" y="403.84" width="44.7" height="1.8" fill="#8c148c"/>
<polygon points="272.9,452.58 286.7,438.28 291.9,438.28 305.7,452.58 291.9,466.88 286.7,466.88" fill="#f4f476" stroke="#1e1e1e" stroke-width="1.5" stroke-linejoin="miter"/>
<rect x="274.4" y="452.38" width="29.8" height="1.8" fill="#8c8c14"/>
<polygon points="307.5,452.58 321.3,438.28 342.6,438.28 356.4,452.58 342.6,466.88 321.3,466.88" fill="#f677f6" stroke="#1e1e1e" stroke-width="1.5" stroke-linejoin="miter"/>
<rect x="309" y="452.38" width="45.9" height="1.8" fill="#8c148c"/>
<polygon points="372.1,452.58 385.9,438.28 392.2,438.28 406,452.58 392.2,466.88 385.9,466.88" fill="#76f176" stroke="#1e1e1e" stroke-width="1.5" stroke-linejoin="miter"/>
<rect x="373.6" y="452.38" width="30.9" height="1.8" fill="#148c14"/>
<polygon points="426,452.58 439.8,438.28 446.4,438.28 460.2,452.58 446.4,466.88 439.8,466.88" fill="#f4f476" stroke="#1e1e1e" stroke-width="1.5" stroke-linejoin="miter"/>
<rect x="427.5" y="452.38" width="31.2" height="1.8" fill="#8c8c14"/>
<polygon points="462,452.58 475.8,438.28 495.9,438.28 509.7,452.58 495.9,466.88 475.8,466.88" fill="#f677f6" stroke="#1e1e1e" stroke-width="1.5" stroke-linejoin="miter"/>
<rect x="463.5" y="452.38" width="44.7" height="1.8" fill="#8c148c"/>
<polygon points="523.6,452.58 537.4,438.28 546.7,438.28 560.5,452.58 546.7,466.88 537.4,466.88" fill="#76f176" stroke="#1e1e1e" stroke-width="1.5" stroke-linejoin="miter"/>
<rect x="525.1" y="452.38" width="33.9" height="1.8" fill="#148c14"/>
<polygon points="569.7,452.58 583.5,438.28 592.8,438.28 606.6,452.58 592.8,466.88 583.5,466.88" fill="#f4f476" stroke="#1e1e1e" stroke-width="1.5" stroke-linejoin="miter"/>
<rect x="571.2" y="452.38" width="33.9" height="1.8" fill="#8c8c14"/>
<polygon points="606.6,452.58 620.4,438.28 642.3,438.28 656.1,452.58 642.3,466.88 620.4,466.88" fill="#f677f6" stroke="#1e1e1e" stroke-width="1.5" stroke-linejoin="miter"/>
<rect x="608.1" y="452.38" width="46.5" height="1.8" fill="#8c148c"/>
<polygon points="672.1,452.58 685.9,438.28 690.8,438.28 704.6,452.58 690.8,466.88 685.9,466.88" fill="#76f176" stroke="#1e1e1e" stroke-width="1.5" stroke-linejoin="miter"/>
<rect x="673.6" y="452.38" width="29.5" height="1.8" fill="#148c14"/>
<polygon points="721.8,452.58 735.6,438.28 741.5,438.28 755.3,452.58 741.5,466.88 735.6,466.88" fill="#f4f476" stroke="#1e1e1e" stroke-width="1.5" stroke-linejoin="miter"/>
<rect x="723.3" y="452.38" width="30.5" height="1.8" fill="#8c8c14"/>
<polygon points="757.7,452.58 771.5,438.28 791.2,438.28 805,452.58 791.2,466.88 771.5,466.88" fill="#f677f6" stroke="#1e1e1e" stroke-width="1.5" stroke-linejoin="miter"/>
<rect x="759.2" y="452.38" width="44.3" height="1.8" fill="#8c148c"/>
<polygon points="820.3,452.58 834.1,438.28 840.6,438.28 854.4,452.58 840.6,466.88 834.1,466.88" fill="#76f176" stroke="#1e1e1e" stroke-width="1.5" stroke-linejoin="miter"/>
<rect x="821.8" y="452.38" width="31.1" height="1.8" fill="#148c14"/>
<polygon points="871.9,452.58 885.7,438.28 890.1,438.28 903.9,452.58 890.1,466.88 885.7,466.88" fill="#f4f476" stroke="#1e1e1e" stroke-width="1.5" stroke-linejoin="miter"/>
<rect x="873.4" y="452.38" width="29" height="1.8" fill="#8c8c14"/>
<polygon points="906.3,452.58 920.1,438.28 941.7,438.28 955.5,452.58 941.7,466.88 920.1,466.88" fill="#f677f6" stroke="#1e1e1e" stroke-width="1.5" stroke-linejoin="miter"/>
<rect x="907.8" y="452.38" width="46.2" height="1.8" fill="#8c148c"/>
<polygon points="970.8,452.58 984.6,438.28 991.1,438.28 1004.9,452.58 991.1,466.88 984.6,466.88" fill="#76f176" stroke="#1e1e1e" stroke-width="1.5" stroke-linejoin="miter"/>
<rect x="972.3" y="452.38" width="31.1" height="1.8" fill="#148c14"/>
<polygon points="523.6,452.58 537.4,437.78 546.7,437.78 560.5,452.58 546.7,467.38 537.4,467.38" fill="none" stroke="#ff0000" stroke-width="3.4" stroke-linejoin="round"/>
<polygon points="569.7,452.58 583.5,437.78 592.8,437.78 606.6,452.58 592.8,467.38 583.5,467.38" fill="none" stroke="#ff0000" stroke-width="3.4" stroke-linejoin="round"/>
<polygon points="606.6,452.58 620.4,437.78 642.3,437.78 656.1,452.58 642.3,467.38 620.4,467.38" fill="none" stroke="#ff0000" stroke-width="3.4" stroke-linejoin="round"/>
<polygon points="254.5,501.12 268.3,486.82 275.7,486.82 289.5,501.12 275.7,515.42 268.3,515.42" fill="#f4f476" stroke="#1e1e1e" stroke-width="1.5" stroke-linejoin="miter"/>
<rect x="256" y="500.92" width="32" height="1.8" fill="#8c8c14"/>
<polygon points="290.7,501.12 304.5,486.82 325.3,486.82 339.1,501.12 325.3,515.42 304.5,515.42" fill="#f677f6" stroke="#1e1e1e" stroke-width="1.5" stroke-linejoin="miter"/>
<rect x="292.2" y="500.92" width="45.4" height="1.8" fill="#8c148c"/>
<polygon points="353.6,501.12 367.4,486.82 374.9,486.82 388.7,501.12 374.9,515.42 367.4,515.42" fill="#76f176" stroke="#1e1e1e" stroke-width="1.5" stroke-linejoin="miter"/>
<rect x="355.1" y="500.92" width="32.1" height="1.8" fill="#148c14"/>
<polygon points="396.8,501.12 410.6,486.82 417.5,486.82 431.3,501.12 417.5,515.42 410.6,515.42" fill="#f4f476" stroke="#1e1e1e" stroke-width="1.5" stroke-linejoin="miter"/>
<rect x="398.3" y="500.92" width="31.5" height="1.8" fill="#8c8c14"/>
<polygon points="433,501.12 446.8,486.82 468.3,486.82 482.1,501.12 468.3,515.42 446.8,515.42" fill="#f677f6" stroke="#1e1e1e" stroke-width="1.5" stroke-linejoin="miter"/>
<rect x="434.5" y="500.92" width="46.1" height="1.8" fill="#8c148c"/>
<polygon points="495.9,501.12 509.7,486.82 517.4,486.82 531.2,501.12 517.4,515.42 509.7,515.42" fill="#76f176" stroke="#1e1e1e" stroke-width="1.5" stroke-linejoin="miter"/>
<rect x="497.4" y="500.92" width="32.3" height="1.8" fill="#148c14"/>
<polygon points="550.1,501.12 563.9,486.82 570.9,486.82 584.7,501.12 570.9,515.42 563.9,515.42" fill="#f4f476" stroke="#1e1e1e" stroke-width="1.5" stroke-linejoin="miter"/>
<rect x="551.6" y="500.92" width="31.6" height="1.8" fill="#8c8c14"/>
<polygon points="585.8,501.12 599.6,486.82 620.8,486.82 634.6,501.12 620.8,515.42 599.6,515.42" fill="#f677f6" stroke="#1e1e1e" stroke-width="1.5" stroke-linejoin="miter"/>
<rect x="587.3" y="500.92" width="45.8" height="1.8" fill="#8c148c"/>
<polygon points="653,501.12 666.8,486.82 675.8,486.82 689.6,501.12 675.8,515.42 666.8,515.42" fill="#76f176" stroke="#1e1e1e" stroke-width="1.5" stroke-linejoin="miter"/>
<rect x="654.5" y="500.92" width="33.6" height="1.8" fill="#148c14"/>
<polygon points="699.9,501.12 713.7,486.82 719.5,486.82 733.3,501.12 719.5,515.42 713.7,515.42" fill="#f4f476" stroke="#1e1e1e" stroke-width="1.5" stroke-linejoin="miter"/>
<rect x="701.4" y="500.92" width="30.4" height="1.8" fill="#8c8c14"/>
<polygon points="735,501.12 748.8,486.82 771.3,486.82 785.1,501.12 771.3,515.42 748.8,515.42" fill="#f677f6" stroke="#1e1e1e" stroke-width="1.5" stroke-linejoin="miter"/>
<rect x="736.5" y="500.92" width="47.1" height="1.8" fill="#8c148c"/>
<polygon points="799.5,501.12 813.3,486.82 821.5,486.82 835.3,501.12 821.5,515.42 813.3,515.42" fill="#76f176" stroke="#1e1e1e" stroke-width="1.5" stroke-linejoin="miter"/>
<rect x="801" y="500.92" width="32.8" height="1.8" fill="#148c14"/>
<polygon points="226.1,549.66 239.9,535.36 246.9,535.36 260.7,549.66 246.9,563.96 239.9,563.96" fill="#f4f476" stroke="#1e1e1e" stroke-width="1.5" stroke-linejoin="miter"/>
<rect x="227.6" y="549.46" width="31.6" height="1.8" fill="#8c8c14"/>
<polygon points="262.3,549.66 276.1,535.36 296,535.36 309.8,549.66 296,563.96 276.1,563.96" fill="#f677f6" stroke="#1e1e1e" stroke-width="1.5" stroke-linejoin="miter"/>
<rect x="263.8" y="549.46" width="44.5" height="1.8" fill="#8c148c"/>
<polygon points="325.3,549.66 339.1,535.36 346.1,535.36 359.9,549.66 346.1,563.96 339.1,563.96" fill="#76f176" stroke="#1e1e1e" stroke-width="1.5" stroke-linejoin="miter"/>
<rect x="326.8" y="549.46" width="31.6" height="1.8" fill="#148c14"/>
<polygon points="379.5,549.66 393.3,535.36 399.8,535.36 413.6,549.66 399.8,563.96 393.3,563.96" fill="#f4f476" stroke="#1e1e1e" stroke-width="1.5" stroke-linejoin="miter"/>
<rect x="381" y="549.46" width="31.1" height="1.8" fill="#8c8c14"/>
<polygon points="415.2,549.66 429,535.36 449.1,535.36 462.9,549.66 449.1,563.96 429,563.96" fill="#f677f6" stroke="#1e1e1e" stroke-width="1.5" stroke-linejoin="miter"/>
<rect x="416.7" y="549.46" width="44.7" height="1.8" fill="#8c148c"/>
<polygon points="483.2,549.66 497,535.36 503.5,535.36 517.3,549.66 503.5,563.96 497,563.96" fill="#76f176" stroke="#1e1e1e" stroke-width="1.5" stroke-linejoin="miter"/>
<rect x="484.7" y="549.46" width="31.1" height="1.8" fill="#148c14"/>
<polygon points="529.3,549.66 543.1,535.36 548.3,535.36 562.1,549.66 548.3,563.96 543.1,563.96" fill="#f4f476" stroke="#1e1e1e" stroke-width="1.5" stroke-linejoin="miter"/>
<rect x="530.8" y="549.46" width="29.8" height="1.8" fill="#8c8c14"/>
<polygon points="568.1,549.66 581.9,535.36 601.7,535.36 615.5,549.66 601.7,563.96 581.9,563.96" fill="#f677f6" stroke="#1e1e1e" stroke-width="1.5" stroke-linejoin="miter"/>
<rect x="569.6" y="549.46" width="44.4" height="1.8" fill="#8c148c"/>
<polygon points="628.2,549.66 642,535.36 648.8,535.36 662.6,549.66 648.8,563.96 642,563.96" fill="#76f176" stroke="#1e1e1e" stroke-width="1.5" stroke-linejoin="miter"/>
<rect x="629.7" y="549.46" width="31.4" height="1.8" fill="#148c14"/>
<polygon points="682.4,549.66 696.2,535.36 703.3,535.36 717.1,549.66 703.3,563.96 696.2,563.96" fill="#f4f476" stroke="#1e1e1e" stroke-width="1.5" stroke-linejoin="miter"/>
<rect x="683.9" y="549.46" width="31.7" height="1.8" fill="#8c8c14"/>
<polygon points="719,549.66 732.8,535.36 752.2,535.36 766,549.66 752.2,563.96 732.8,563.96" fill="#f677f6" stroke="#1e1e1e" stroke-width="1.5" stroke-linejoin="miter"/>
<rect x="720.5" y="549.46" width="44" height="1.8" fill="#8c148c"/>
<polygon points="781.6,549.66 795.4,535.36 801.7,535.36 815.5,549.66 801.7,563.96 795.4,563.96" fill="#76f176" stroke="#1e1e1e" stroke-width="1.5" stroke-linejoin="miter"/>
<rect x="783.1" y="549.46" width="30.9" height="1.8" fill="#148c14"/>
<polygon points="828.1,549.66 841.9,535.36 848.5,535.36 862.3,549.66 848.5,563.96 841.9,563.96" fill="#f4f476" stroke="#1e1e1e" stroke-width="1.5" stroke-linejoin="miter"/>
<rect x="829.6" y="549.46" width="31.2" height="1.8" fill="#8c8c14"/>
<polygon points="864,549.66 877.8,535.36 898,535.36 911.8,549.66 898,563.96 877.8,563.96" fill="#f677f6" stroke="#1e1e1e" stroke-width="1.5" stroke-linejoin="miter"/>
<rect x="865.5" y="549.46" width="44.8" height="1.8" fill="#8c148c"/>
<polygon points="928.5,549.66 942.3,535.36 947.4,535.36 961.2,549.66 947.4,563.96 942.3,563.96" fill="#76f176" stroke="#1e1e1e" stroke-width="1.5" stroke-linejoin="miter"/>
<rect x="930" y="549.46" width="29.7" height="1.8" fill="#148c14"/>
<polygon points="977.9,549.66 991.7,535.36 998.3,535.36 1012.1,549.66 998.3,563.96 991.7,563.96" fill="#f4f476" stroke="#1e1e1e" stroke-width="1.5" stroke-linejoin="miter"/>
<rect x="979.4" y="549.46" width="31.2" height="1.8" fill="#8c8c14"/>
<polygon points="1013.3,549.66 1027.1,535.36 1046.2,535.36 1060,549.66 1046.2,563.96 1027.1,563.96" fill="#f677f6" stroke="#1e1e1e" stroke-width="1.5" stroke-linejoin="miter"/>
<rect x="1014.8" y="549.46" width="43.7" height="1.8" fill="#8c148c"/>
<polygon points="293.7,598.2 307.5,583.9 314.5,583.9 328.3,598.2 314.5,612.5 307.5,612.5" fill="#f4f476" stroke="#1e1e1e" stroke-width="1.5" stroke-linejoin="miter"/>
<rect x="295.2" y="598" width="31.6" height="1.8" fill="#8c8c14"/>
<polygon points="329.9,598.2 343.7,583.9 363.8,583.9 377.6,598.2 363.8,612.5 343.7,612.5" fill="#f677f6" stroke="#1e1e1e" stroke-width="1.5" stroke-linejoin="miter"/>
<rect x="331.4" y="598" width="44.7" height="1.8" fill="#8c148c"/>
<polygon points="392.8,598.2 406.6,583.9 413.6,583.9 427.4,598.2 413.6,612.5 406.6,612.5" fill="#76f176" stroke="#1e1e1e" stroke-width="1.5" stroke-linejoin="miter"/>
<rect x="394.3" y="598" width="31.6" height="1.8" fill="#148c14"/>
<polygon points="444,598.2 457.8,583.9 463,583.9 476.8,598.2 463,612.5 457.8,612.5" fill="#f4f476" stroke="#1e1e1e" stroke-width="1.5" stroke-linejoin="miter"/>
<rect x="445.5" y="598" width="29.8" height="1.8" fill="#8c8c14"/>
<polygon points="478.1,598.2 491.9,583.9 513.7,583.9 527.5,598.2 513.7,612.5 491.9,612.5" fill="#f677f6" stroke="#1e1e1e" stroke-width="1.5" stroke-linejoin="miter"/>
<rect x="479.6" y="598" width="46.4" height="1.8" fill="#8c148c"/>
<polygon points="542.7,598.2 556.5,583.9 563.5,583.9 577.3,598.2 563.5,612.5 556.5,612.5" fill="#76f176" stroke="#1e1e1e" stroke-width="1.5" stroke-linejoin="miter"/>
<rect x="544.2" y="598" width="31.6" height="1.8" fill="#148c14"/>
<polygon points="596.2,598.2 610,583.9 617.3,583.9 631.1,598.2 617.3,612.5 610,612.5" fill="#f4f476" stroke="#1e1e1e" stroke-width="1.5" stroke-linejoin="miter"/>
<rect x="597.7" y="598" width="31.9" height="1.8" fill="#8c8c14"/>
<polygon points="633,598.2 646.8,583.9 667.4,583.9 681.2,598.2 667.4,612.5 646.8,612.5" fill="#f677f6" stroke="#1e1e1e" stroke-width="1.5" stroke-linejoin="miter"/>
<rect x="634.5" y="598" width="45.2" height="1.8" fill="#8c148c"/>
<polygon points="696,598.2 709.8,583.9 716.4,583.9 730.2,598.2 716.4,612.5 709.8,612.5" fill="#76f176" stroke="#1e1e1e" stroke-width="1.5" stroke-linejoin="miter"/>
<rect x="697.5" y="598" width="31.2" height="1.8" fill="#148c14"/>
<polygon points="742.9,598.2 756.7,583.9 763,583.9 776.8,598.2 763,612.5 756.7,612.5" fill="#f4f476" stroke="#1e1e1e" stroke-width="1.5" stroke-linejoin="miter"/>
<rect x="744.4" y="598" width="30.9" height="1.8" fill="#8c8c14"/>
<polygon points="778.7,598.2 792.5,583.9 812,583.9 825.8,598.2 812,612.5 792.5,612.5" fill="#f677f6" stroke="#1e1e1e" stroke-width="1.5" stroke-linejoin="miter"/>
<rect x="780.2" y="598" width="44.1" height="1.8" fill="#8c148c"/>
<polygon points="846.1,598.2 859.9,583.9 866.9,583.9 880.7,598.2 866.9,612.5 859.9,612.5" fill="#76f176" stroke="#1e1e1e" stroke-width="1.5" stroke-linejoin="miter"/>
<rect x="847.6" y="598" width="31.6" height="1.8" fill="#148c14"/>
<polygon points="892.6,598.2 906.4,583.9 913,583.9 926.8,598.2 913,612.5 906.4,612.5" fill="#f4f476" stroke="#1e1e1e" stroke-width="1.5" stroke-linejoin="miter"/>
<rect x="894.1" y="598" width="31.2" height="1.8" fill="#8c8c14"/>
<polygon points="931.6,598.2 945.4,583.9 965.6,583.9 979.4,598.2 965.6,612.5 945.4,612.5" fill="#f677f6" stroke="#1e1e1e" stroke-width="1.5" stroke-linejoin="miter"/>
<rect x="933.1" y="598" width="44.8" height="1.8" fill="#8c148c"/>
<polygon points="995.4,598.2 1009.2,583.9 1016.2,583.9 1030,598.2 1016.2,612.5 1009.2,612.5" fill="#76f176" stroke="#1e1e1e" stroke-width="1.5" stroke-linejoin="miter"/>
<rect x="996.9" y="598" width="31.6" height="1.8" fill="#148c14"/>
<rect x="204" y="729.02" width="7.3" height="28.7" fill="#f677f6" stroke="#1e1e1e" stroke-width="1.5"/>
<rect x="204.6" y="729.77" width="2.45" height="27.2" fill="#f677f6"/>
<rect x="208.25" y="729.77" width="2.45" height="27.2" fill="#f4f476"/>
<rect x="207" y="729.02" width="1.3" height="28.7" fill="#1e1e1e"/>
<rect x="204" y="743.62" width="7.3" height="1.8" fill="#000" fill-opacity="0.55"/>
<rect x="220.7" y="729.02" width="8.5" height="28.7" fill="#f677f6" stroke="#1e1e1e" stroke-width="1.5"/>
<rect x="221.3" y="729.77" width="3.05" height="27.2" fill="#f677f6"/>
<rect x="225.55" y="729.77" width="3.05" height="27.2" fill="#f4f476"/>
<rect x="224.3" y="729.02" width="1.3" height="28.7" fill="#1e1e1e"/>
<rect x="220.7" y="743.62" width="8.5" height="1.8" fill="#000" fill-opacity="0.55"/>
<rect x="243.2" y="729.02" width="3.9" height="28.7" fill="#f677f6" stroke="#1e1e1e" stroke-width="1.5"/>
<rect x="243.8" y="729.77" width="2.7" height="27.2" fill="#f677f6"/>
<rect x="243.2" y="743.62" width="3.9" height="1.8" fill="#000" fill-opacity="0.55"/>
<rect x="253.8" y="729.02" width="4.2" height="28.7" fill="#f4f476" stroke="#1e1e1e" stroke-width="1.5"/>
<rect x="254.4" y="729.77" width="3" height="27.2" fill="#f4f476"/>
<rect x="253.8" y="743.62" width="4.2" height="1.8" fill="#000" fill-opacity="0.55"/>
<rect x="261.1" y="729.02" width="4.2" height="28.7" fill="#f677f6" stroke="#1e1e1e" stroke-width="1.5"/>
<rect x="261.7" y="729.77" width="3" height="27.2" fill="#f677f6"/>
<rect x="261.1" y="743.62" width="4.2" height="1.8" fill="#000" fill-opacity="0.55"/>
<rect x="267.3" y="729.02" width="8.6" height="28.7" fill="#76f176" stroke="#1e1e1e" stroke-width="1.5"/>
<rect x="267.9" y="729.77" width="3.1" height="27.2" fill="#76f176"/>
<rect x="272.2" y="729.77" width="3.1" height="27.2" fill="#f4f476"/>
<rect x="270.95" y="729.02" width="1.3" height="28.7" fill="#1e1e1e"/>
<rect x="267.3" y="743.62" width="8.6" height="1.8" fill="#000" fill-opacity="0.55"/>
<rect x="285.2" y="729.02" width="11.7" height="28.7" fill="#76f176" stroke="#1e1e1e" stroke-width="1.5"/>
<rect x="285.8" y="729.77" width="2.7" height="27.2" fill="#76f176"/>
<rect x="289.7" y="729.77" width="2.7" height="27.2" fill="#f677f6"/>
<rect x="288.45" y="729.02" width="1.3" height="28.7" fill="#1e1e1e"/>
<rect x="293.6" y="729.77" width="2.7" height="27.2" fill="#f4f476"/>
<rect x="292.35" y="729.02" width="1.3" height="28.7" fill="#1e1e1e"/>
<rect x="285.2" y="743.62" width="11.7" height="1.8" fill="#000" fill-opacity="0.55"/>
<rect x="306.2" y="729.02" width="13.2" height="28.7" fill="#f677f6" stroke="#1e1e1e" stroke-width="1.5"/>
<rect x="306.8" y="729.77" width="3.2" height="27.2" fill="#f677f6"/>
<rect x="311.2" y="729.77" width="3.2" height="27.2" fill="#f4f476"/>
<rect x="309.95" y="729.02" width="1.3" height="28.7" fill="#1e1e1e"/>
<rect x="315.6" y="729.77" width="3.2" height="27.2" fill="#76f176"/>
<rect x="314.35" y="729.02" width="1.3" height="28.7" fill="#1e1e1e"/>
<rect x="306.2" y="743.62" width="13.2" height="1.8" fill="#000" fill-opacity="0.55"/>
<rect x="324.1" y="729.02" width="8.5" height="28.7" fill="#76f176" stroke="#1e1e1e" stroke-width="1.5"/>
<rect x="324.7" y="729.77" width="3.05" height="27.2" fill="#76f176"/>
<rect x="328.95" y="729.77" width="3.05" height="27.2" fill="#f677f6"/>
<rect x="327.7" y="729.02" width="1.3" height="28.7" fill="#1e1e1e"/>
<rect x="324.1" y="743.62" width="8.5" height="1.8" fill="#000" fill-opacity="0.55"/>
<rect x="339.3" y="729.02" width="3.8" height="28.7" fill="#f4f476" stroke="#1e1e1e" stroke-width="1.5"/>
<rect x="339.9" y="729.77" width="2.6" height="27.2" fill="#f4f476"/>
<rect x="339.3" y="743.62" width="3.8" height="1.8" fill="#000" fill-opacity="0.55"/>
<rect x="346.6" y="729.02" width="3.9" height="28.7" fill="#f677f6" stroke="#1e1e1e" stroke-width="1.5"/>
<rect x="347.2" y="729.77" width="2.7" height="27.2" fill="#f677f6"/>
<rect x="346.6" y="743.62" width="3.9" height="1.8" fill="#000" fill-opacity="0.55"/>
<rect x="353.3" y="729.02" width="7.8" height="28.7" fill="#76f176" stroke="#1e1e1e" stroke-width="1.5"/>
<rect x="353.9" y="729.77" width="2.7" height="27.2" fill="#76f176"/>
<rect x="357.8" y="729.77" width="2.7" height="27.2" fill="#f4f476"/>
<rect x="356.55" y="729.02" width="1.3" height="28.7" fill="#1e1e1e"/>
<rect x="353.3" y="743.62" width="7.8" height="1.8" fill="#000" fill-opacity="0.55"/>
<rect x="370.7" y="729.02" width="11.7" height="28.7" fill="#76f176" stroke="#1e1e1e" stroke-width="1.5"/>
<rect x="371.3" y="729.77" width="2.7" height="27.2" fill="#76f176"/>
<rect x="375.2" y="729.77" width="2.7" height="27.2" fill="#f677f6"/>
<rect x="373.95" y="729.02" width="1.3" height="28.7" fill="#1e1e1e"/>
<rect x="379.1" y="729.77" width="2.7" height="27.2" fill="#f4f476"/>
<rect x="377.85" y="729.02" width="1.3" height="28.7" fill="#1e1e1e"/>
<rect x="370.7" y="743.62" width="11.7" height="1.8" fill="#000" fill-opacity="0.55"/>
<rect x="391.7" y="729.02" width="12.9" height="28.7" fill="#76f176" stroke="#1e1e1e" stroke-width="1.5"/>
<rect x="392.3" y="729.77" width="3.1" height="27.2" fill="#76f176"/>
<rect x="396.6" y="729.77" width="3.1" height="27.2" fill="#f4f476"/>
<rect x="395.35" y="729.02" width="1.3" height="28.7" fill="#1e1e1e"/>
<rect x="400.9" y="729.77" width="3.1" height="27.2" fill="#f677f6"/>
<rect x="399.65" y="729.02" width="1.3" height="28.7" fill="#1e1e1e"/>
<rect x="391.7" y="743.62" width="12.9" height="1.8" fill="#000" fill-opacity="0.55"/>
<rect x="409.9" y="729.02" width="8.3" height="28.7" fill="#76f176" stroke="#1e1e1e" stroke-width="1.5"/>
<rect x="410.5" y="729.77" width="2.95" height="27.2" fill="#76f176"/>
<rect x="414.65" y="729.77" width="2.95" height="27.2" fill="#f677f6"/>
<rect x="413.4" y="729.02" width="1.3" height="28.7" fill="#1e1e1e"/>
<rect x="409.9" y="743.62" width="8.3" height="1.8" fill="#000" fill-opacity="0.55"/>
<rect x="424.9" y="729.02" width="3.7" height="28.7" fill="#f4f476" stroke="#1e1e1e" stroke-width="1.5"/>
<rect x="425.5" y="729.77" width="2.5" height="27.2" fill="#f4f476"/>
<rect x="424.9" y="743.62" width="3.7" height="1.8" fill="#000" fill-opacity="0.55"/>
<rect x="432.2" y="729.02" width="3.9" height="28.7" fill="#f677f6" stroke="#1e1e1e" stroke-width="1.5"/>
<rect x="432.8" y="729.77" width="2.7" height="27.2" fill="#f677f6"/>
<rect x="432.2" y="743.62" width="3.9" height="1.8" fill="#000" fill-opacity="0.55"/>
<rect x="438.4" y="729.02" width="8.2" height="28.7" fill="#76f176" stroke="#1e1e1e" stroke-width="1.5"/>
<rect x="439" y="729.77" width="2.9" height="27.2" fill="#76f176"/>
<rect x="443.1" y="729.77" width="2.9" height="27.2" fill="#f4f476"/>
<rect x="441.85" y="729.02" width="1.3" height="28.7" fill="#1e1e1e"/>
<rect x="438.4" y="743.62" width="8.2" height="1.8" fill="#000" fill-opacity="0.55"/>
<rect x="456.3" y="729.02" width="11.5" height="28.7" fill="#76f176" stroke="#1e1e1e" stroke-width="1.5"/>
<rect x="456.9" y="729.77" width="2.63" height="27.2" fill="#76f176"/>
<rect x="460.73" y="729.77" width="2.63" height="27.2" fill="#f677f6"/>
<rect x="459.48" y="729.02" width="1.3" height="28.7" fill="#1e1e1e"/>
<rect x="464.57" y="729.77" width="2.63" height="27.2" fill="#f4f476"/>
<rect x="463.32" y="729.02" width="1.3" height="28.7" fill="#1e1e1e"/>
<rect x="456.3" y="743.62" width="11.5" height="1.8" fill="#000" fill-opacity="0.55"/>
<rect x="477.4" y="729.02" width="12.8" height="28.7" fill="#f677f6" stroke="#1e1e1e" stroke-width="1.5"/>
<rect x="478" y="729.77" width="3.07" height="27.2" fill="#f677f6"/>
<rect x="482.27" y="729.77" width="3.07" height="27.2" fill="#76f176"/>
<rect x="481.02" y="729.02" width="1.3" height="28.7" fill="#1e1e1e"/>
<rect x="486.53" y="729.77" width="3.07" height="27.2" fill="#f4f476"/>
<rect x="485.28" y="729.02" width="1.3" height="28.7" fill="#1e1e1e"/>
<rect x="477.4" y="743.62" width="12.8" height="1.8" fill="#000" fill-opacity="0.55"/>
<rect x="495.3" y="729.02" width="8.3" height="28.7" fill="#76f176" stroke="#1e1e1e" stroke-width="1.5"/>
<rect x="495.9" y="729.77" width="2.95" height="27.2" fill="#76f176"/>
<rect x="500.05" y="729.77" width="2.95" height="27.2" fill="#f677f6"/>
<rect x="498.8" y="729.02" width="1.3" height="28.7" fill="#1e1e1e"/>
<rect x="495.3" y="743.62" width="8.3" height="1.8" fill="#000" fill-opacity="0.55"/>
<rect x="510.1" y="729.02" width="4.4" height="28.7" fill="#f4f476" stroke="#1e1e1e" stroke-width="1.5"/>
<rect x="510.7" y="729.77" width="3.2" height="27.2" fill="#f4f476"/>
<rect x="510.1" y="743.62" width="4.4" height="1.8" fill="#000" fill-opacity="0.55"/>
<rect x="521" y="729.02" width="11.2" height="28.7" fill="#f677f6" stroke="#1e1e1e" stroke-width="1.5"/>
<rect x="521.6" y="729.77" width="2.53" height="27.2" fill="#f677f6"/>
<rect x="525.33" y="729.77" width="2.53" height="27.2" fill="#f0b868"/>
<rect x="524.08" y="729.02" width="1.3" height="28.7" fill="#1e1e1e"/>
<rect x="529.07" y="729.77" width="2.53" height="27.2" fill="#f0b868"/>
<rect x="527.82" y="729.02" width="1.3" height="28.7" fill="#1e1e1e"/>
<rect x="521" y="743.62" width="11.2" height="1.8" fill="#000" fill-opacity="0.55"/>
<rect x="542" y="729.02" width="11.3" height="28.7" fill="#76f176" stroke="#1e1e1e" stroke-width="1.5"/>
<rect x="542.6" y="729.77" width="2.57" height="27.2" fill="#76f176"/>
<rect x="546.37" y="729.77" width="2.57" height="27.2" fill="#f677f6"/>
<rect x="545.12" y="729.02" width="1.3" height="28.7" fill="#1e1e1e"/>
<rect x="550.13" y="729.77" width="2.57" height="27.2" fill="#f4f476"/>
<rect x="548.88" y="729.02" width="1.3" height="28.7" fill="#1e1e1e"/>
<rect x="542" y="743.62" width="11.3" height="1.8" fill="#000" fill-opacity="0.55"/>
<rect x="563" y="729.02" width="14" height="28.7" fill="#76f176" stroke="#1e1e1e" stroke-width="1.5"/>
<rect x="563.6" y="729.77" width="3.47" height="27.2" fill="#76f176"/>
<rect x="568.27" y="729.77" width="3.47" height="27.2" fill="#f677f6"/>
<rect x="567.02" y="729.02" width="1.3" height="28.7" fill="#1e1e1e"/>
<rect x="572.93" y="729.77" width="3.47" height="27.2" fill="#f677f6"/>
<rect x="571.68" y="729.02" width="1.3" height="28.7" fill="#1e1e1e"/>
<rect x="563" y="743.62" width="14" height="1.8" fill="#000" fill-opacity="0.55"/>
<rect x="585.5" y="729.02" width="6.2" height="28.7" fill="#f677f6" stroke="#1e1e1e" stroke-width="1.5"/>
<rect x="586.1" y="729.77" width="1.9" height="27.2" fill="#f677f6"/>
<rect x="589.2" y="729.77" width="1.9" height="27.2" fill="#76f176"/>
<rect x="587.95" y="729.02" width="1.3" height="28.7" fill="#1e1e1e"/>
<rect x="585.5" y="743.62" width="6.2" height="1.8" fill="#000" fill-opacity="0.55"/>
<rect x="596" y="729.02" width="4" height="28.7" fill="#f4f476" stroke="#1e1e1e" stroke-width="1.5"/>
<rect x="596.6" y="729.77" width="2.8" height="27.2" fill="#f4f476"/>
<rect x="596" y="743.62" width="4" height="1.8" fill="#000" fill-opacity="0.55"/>
<rect x="610.4" y="729.02" width="7" height="28.7" fill="#76f176" stroke="#1e1e1e" stroke-width="1.5"/>
<rect x="611" y="729.77" width="2.3" height="27.2" fill="#76f176"/>
<rect x="614.5" y="729.77" width="2.3" height="27.2" fill="#f4f476"/>
<rect x="613.25" y="729.02" width="1.3" height="28.7" fill="#1e1e1e"/>
<rect x="610.4" y="743.62" width="7" height="1.8" fill="#000" fill-opacity="0.55"/>
<rect x="627.5" y="729.02" width="11.4" height="28.7" fill="#76f176" stroke="#1e1e1e" stroke-width="1.5"/>
<rect x="628.1" y="729.77" width="2.6" height="27.2" fill="#76f176"/>
<rect x="631.9" y="729.77" width="2.6" height="27.2" fill="#f677f6"/>
<rect x="630.65" y="729.02" width="1.3" height="28.7" fill="#1e1e1e"/>
<rect x="635.7" y="729.77" width="2.6" height="27.2" fill="#f4f476"/>
<rect x="634.45" y="729.02" width="1.3" height="28.7" fill="#1e1e1e"/>
<rect x="627.5" y="743.62" width="11.4" height="1.8" fill="#000" fill-opacity="0.55"/>
<rect x="648.5" y="729.02" width="12.8" height="28.7" fill="#f677f6" stroke="#1e1e1e" stroke-width="1.5"/>
<rect x="649.1" y="729.77" width="3.07" height="27.2" fill="#f677f6"/>
<rect x="653.37" y="729.77" width="3.07" height="27.2" fill="#76f176"/>
<rect x="652.12" y="729.02" width="1.3" height="28.7" fill="#1e1e1e"/>
<rect x="657.63" y="729.77" width="3.07" height="27.2" fill="#f4f476"/>
<rect x="656.38" y="729.02" width="1.3" height="28.7" fill="#1e1e1e"/>
<rect x="648.5" y="743.62" width="12.8" height="1.8" fill="#000" fill-opacity="0.55"/>
<rect x="671.1" y="729.02" width="6.6" height="28.7" fill="#76f176" stroke="#1e1e1e" stroke-width="1.5"/>
<rect x="671.7" y="729.77" width="2.1" height="27.2" fill="#76f176"/>
<rect x="675" y="729.77" width="2.1" height="27.2" fill="#f677f6"/>
<rect x="673.75" y="729.02" width="1.3" height="28.7" fill="#1e1e1e"/>
<rect x="671.1" y="743.62" width="6.6" height="1.8" fill="#000" fill-opacity="0.55"/>
<rect x="681.5" y="729.02" width="4" height="28.7" fill="#f4f476" stroke="#1e1e1e" stroke-width="1.5"/>
<rect x="682.1" y="729.77" width="2.8" height="27.2" fill="#f4f476"/>
<rect x="681.5" y="743.62" width="4" height="1.8" fill="#000" fill-opacity="0.55"/>
<rect x="692.4" y="729.02" width="10.9" height="28.7" fill="#f677f6" stroke="#1e1e1e" stroke-width="1.5"/>
<rect x="693" y="729.77" width="2.43" height="27.2" fill="#f677f6"/>
<rect x="696.63" y="729.77" width="2.43" height="27.2" fill="#76f176"/>
<rect x="695.38" y="729.02" width="1.3" height="28.7" fill="#1e1e1e"/>
<rect x="700.27" y="729.77" width="2.43" height="27.2" fill="#f4f476"/>
<rect x="699.02" y="729.02" width="1.3" height="28.7" fill="#1e1e1e"/>
<rect x="692.4" y="743.62" width="10.9" height="1.8" fill="#000" fill-opacity="0.55"/>
<rect x="713" y="729.02" width="11.4" height="28.7" fill="#76f176" stroke="#1e1e1e" stroke-width="1.5"/>
<rect x="713.6" y="729.77" width="2.6" height="27.2" fill="#76f176"/>
<rect x="717.4" y="729.77" width="2.6" height="27.2" fill="#f677f6"/>
<rect x="716.15" y="729.02" width="1.3" height="28.7" fill="#1e1e1e"/>
<rect x="721.2" y="729.77" width="2.6" height="27.2" fill="#f4f476"/>
<rect x="719.95" y="729.02" width="1.3" height="28.7" fill="#1e1e1e"/>
<rect x="713" y="743.62" width="11.4" height="1.8" fill="#000" fill-opacity="0.55"/>
<rect x="734" y="729.02" width="12.8" height="28.7" fill="#f677f6" stroke="#1e1e1e" stroke-width="1.5"/>
<rect x="734.6" y="729.77" width="3.07" height="27.2" fill="#f677f6"/>
<rect x="738.87" y="729.77" width="3.07" height="27.2" fill="#76f176"/>
<rect x="737.62" y="729.02" width="1.3" height="28.7" fill="#1e1e1e"/>
<rect x="743.13" y="729.77" width="3.07" height="27.2" fill="#f4f476"/>
<rect x="741.88" y="729.02" width="1.3" height="28.7" fill="#1e1e1e"/>
<rect x="734" y="743.62" width="12.8" height="1.8" fill="#000" fill-opacity="0.55"/>
<rect x="756.4" y="729.02" width="7" height="28.7" fill="#f677f6" stroke="#1e1e1e" stroke-width="1.5"/>
<rect x="757" y="729.77" width="2.3" height="27.2" fill="#f677f6"/>
<rect x="760.5" y="729.77" width="2.3" height="27.2" fill="#76f176"/>
<rect x="759.25" y="729.02" width="1.3" height="28.7" fill="#1e1e1e"/>
<rect x="756.4" y="743.62" width="7" height="1.8" fill="#000" fill-opacity="0.55"/>
<rect x="767.1" y="729.02" width="3.5" height="28.7" fill="#f4f476" stroke="#1e1e1e" stroke-width="1.5"/>
<rect x="767.7" y="729.77" width="2.3" height="27.2" fill="#f4f476"/>
<rect x="767.1" y="743.62" width="3.5" height="1.8" fill="#000" fill-opacity="0.55"/>
<rect x="777.4" y="729.02" width="11.3" height="28.7" fill="#f677f6" stroke="#1e1e1e" stroke-width="1.5"/>
<rect x="778" y="729.77" width="2.57" height="27.2" fill="#f677f6"/>
<rect x="781.77" y="729.77" width="2.57" height="27.2" fill="#76f176"/>
<rect x="780.52" y="729.02" width="1.3" height="28.7" fill="#1e1e1e"/>
<rect x="785.53" y="729.77" width="2.57" height="27.2" fill="#f4f476"/>
<rect x="784.28" y="729.02" width="1.3" height="28.7" fill="#1e1e1e"/>
<rect x="777.4" y="743.62" width="11.3" height="1.8" fill="#000" fill-opacity="0.55"/>
<rect x="798.3" y="729.02" width="11.8" height="28.7" fill="#76f176" stroke="#1e1e1e" stroke-width="1.5"/>
<rect x="798.9" y="729.77" width="2.73" height="27.2" fill="#76f176"/>
<rect x="802.83" y="729.77" width="2.73" height="27.2" fill="#f677f6"/>
<rect x="801.58" y="729.02" width="1.3" height="28.7" fill="#1e1e1e"/>
<rect x="806.77" y="729.77" width="2.73" height="27.2" fill="#f4f476"/>
<rect x="805.52" y="729.02" width="1.3" height="28.7" fill="#1e1e1e"/>
<rect x="798.3" y="743.62" width="11.8" height="1.8" fill="#000" fill-opacity="0.55"/>
<rect x="819.3" y="729.02" width="13.3" height="28.7" fill="#76f176" stroke="#1e1e1e" stroke-width="1.5"/>
<rect x="819.9" y="729.77" width="3.23" height="27.2" fill="#76f176"/>
<rect x="824.33" y="729.77" width="3.23" height="27.2" fill="#f677f6"/>
<rect x="823.08" y="729.02" width="1.3" height="28.7" fill="#1e1e1e"/>
<rect x="828.77" y="729.77" width="3.23" height="27.2" fill="#f4f476"/>
<rect x="827.52" y="729.02" width="1.3" height="28.7" fill="#1e1e1e"/>
<rect x="819.3" y="743.62" width="13.3" height="1.8" fill="#000" fill-opacity="0.55"/>
<rect x="841.8" y="729.02" width="6.9" height="28.7" fill="#f677f6" stroke="#1e1e1e" stroke-width="1.5"/>
<rect x="842.4" y="729.77" width="2.25" height="27.2" fill="#f677f6"/>
<rect x="845.85" y="729.77" width="2.25" height="27.2" fill="#76f176"/>
<rect x="844.6" y="729.02" width="1.3" height="28.7" fill="#1e1e1e"/>
<rect x="841.8" y="743.62" width="6.9" height="1.8" fill="#000" fill-opacity="0.55"/>
<rect x="852.5" y="729.02" width="3.8" height="28.7" fill="#f4f476" stroke="#1e1e1e" stroke-width="1.5"/>
<rect x="853.1" y="729.77" width="2.6" height="27.2" fill="#f4f476"/>
<rect x="852.5" y="743.62" width="3.8" height="1.8" fill="#000" fill-opacity="0.55"/>
<rect x="862.8" y="729.02" width="11.7" height="28.7" fill="#f677f6" stroke="#1e1e1e" stroke-width="1.5"/>
<rect x="863.4" y="729.77" width="2.7" height="27.2" fill="#f677f6"/>
<rect x="867.3" y="729.77" width="2.7" height="27.2" fill="#76f176"/>
<rect x="866.05" y="729.02" width="1.3" height="28.7" fill="#1e1e1e"/>
<rect x="871.2" y="729.77" width="2.7" height="27.2" fill="#f4f476"/>
<rect x="869.95" y="729.02" width="1.3" height="28.7" fill="#1e1e1e"/>
<rect x="862.8" y="743.62" width="11.7" height="1.8" fill="#000" fill-opacity="0.55"/>
<rect x="883.7" y="729.02" width="11.8" height="28.7" fill="#76f176" stroke="#1e1e1e" stroke-width="1.5"/>
<rect x="884.3" y="729.77" width="2.73" height="27.2" fill="#76f176"/>
<rect x="888.23" y="729.77" width="2.73" height="27.2" fill="#f677f6"/>
<rect x="886.98" y="729.02" width="1.3" height="28.7" fill="#1e1e1e"/>
<rect x="892.17" y="729.77" width="2.73" height="27.2" fill="#f4f476"/>
<rect x="890.92" y="729.02" width="1.3" height="28.7" fill="#1e1e1e"/>
<rect x="883.7" y="743.62" width="11.8" height="1.8" fill="#000" fill-opacity="0.55"/>
<rect x="905.1" y="729.02" width="12.9" height="28.7" fill="#f677f6" stroke="#1e1e1e" stroke-width="1.5"/>
<rect x="905.7" y="729.77" width="3.1" height="27.2" fill="#f677f6"/>
<rect x="910" y="729.77" width="3.1" height="27.2" fill="#76f176"/>
<rect x="908.75" y="729.02" width="1.3" height="28.7" fill="#1e1e1e"/>
<rect x="914.3" y="729.77" width="3.1" height="27.2" fill="#f4f476"/>
<rect x="913.05" y="729.02" width="1.3" height="28.7" fill="#1e1e1e"/>
<rect x="905.1" y="743.62" width="12.9" height="1.8" fill="#000" fill-opacity="0.55"/>
<rect x="927.2" y="729.02" width="6.9" height="28.7" fill="#76f176" stroke="#1e1e1e" stroke-width="1.5"/>
<rect x="927.8" y="729.77" width="2.25" height="27.2" fill="#76f176"/>
<rect x="931.25" y="729.77" width="2.25" height="27.2" fill="#f677f6"/>
<rect x="930" y="729.02" width="1.3" height="28.7" fill="#1e1e1e"/>
<rect x="927.2" y="743.62" width="6.9" height="1.8" fill="#000" fill-opacity="0.55"/>
<rect x="937.8" y="729.02" width="3.6" height="28.7" fill="#f4f476" stroke="#1e1e1e" stroke-width="1.5"/>
<rect x="938.4" y="729.77" width="2.4" height="27.2" fill="#f4f476"/>
<rect x="937.8" y="743.62" width="3.6" height="1.8" fill="#000" fill-opacity="0.55"/>
<rect x="948.6" y="729.02" width="11.3" height="28.7" fill="#f677f6" stroke="#1e1e1e" stroke-width="1.5"/>
<rect x="949.2" y="729.77" width="2.57" height="27.2" fill="#f677f6"/>
<rect x="952.97" y="729.77" width="2.57" height="27.2" fill="#76f176"/>
<rect x="951.72" y="729.02" width="1.3" height="28.7" fill="#1e1e1e"/>
<rect x="956.73" y="729.77" width="2.57" height="27.2" fill="#f4f476"/>
<rect x="955.48" y="729.02" width="1.3" height="28.7" fill="#1e1e1e"/>
<rect x="948.6" y="743.62" width="11.3" height="1.8" fill="#000" fill-opacity="0.55"/>
<rect x="969.1" y="729.02" width="11.8" height="28.7" fill="#76f176" stroke="#1e1e1e" stroke-width="1.5"/>
<rect x="969.7" y="729.77" width="2.73" height="27.2" fill="#76f176"/>
<rect x="973.63" y="729.77" width="2.73" height="27.2" fill="#f677f6"/>
<rect x="972.38" y="729.02" width="1.3" height="28.7" fill="#1e1e1e"/>
<rect x="977.57" y="729.77" width="2.73" height="27.2" fill="#f4f476"/>
<rect x="976.32" y="729.02" width="1.3" height="28.7" fill="#1e1e1e"/>
<rect x="969.1" y="743.62" width="11.8" height="1.8" fill="#000" fill-opacity="0.55"/>
<rect x="990.5" y="729.02" width="12.9" height="28.7" fill="#f677f6" stroke="#1e1e1e" stroke-width="1.5"/>
<rect x="991.1" y="729.77" width="3.1" height="27.2" fill="#f677f6"/>
<rect x="995.4" y="729.77" width="3.1" height="27.2" fill="#76f176"/>
<rect x="994.15" y="729.02" width="1.3" height="28.7" fill="#1e1e1e"/>
<rect x="999.7" y="729.77" width="3.1" height="27.2" fill="#f4f476"/>
<rect x="998.45" y="729.02" width="1.3" height="28.7" fill="#1e1e1e"/>
<rect x="990.5" y="743.62" width="12.9" height="1.8" fill="#000" fill-opacity="0.55"/>
<rect x="1013.1" y="729.02" width="6.9" height="28.7" fill="#f677f6" stroke="#1e1e1e" stroke-width="1.5"/>
<rect x="1013.7" y="729.77" width="2.25" height="27.2" fill="#f677f6"/>
<rect x="1017.15" y="729.77" width="2.25" height="27.2" fill="#76f176"/>
<rect x="1015.9" y="729.02" width="1.3" height="28.7" fill="#1e1e1e"/>
<rect x="1013.1" y="743.62" width="6.9" height="1.8" fill="#000" fill-opacity="0.55"/>
<rect x="522.5" y="726.5" width="7" height="32.5" rx="1.2" fill="#ff0000"/>
<rect x="568.9" y="726.5" width="8.1" height="32.5" rx="1.2" fill="#ff0000"/>
<rect x="605" y="726.5" width="5.4" height="32.5" rx="1.2" fill="#ff0000"/>
<polygon points="241.1,777.46 252,777.46 252,784.56 253.8,786.56 253.8,796.56 252,798.56 252,805.66 241.1,805.66 241.1,798.56 239.3,796.56 239.3,786.56 241.1,784.56" fill="#f677f6" stroke="#1e1e1e" stroke-width="1.6"/>
<rect x="240.3" y="792.16" width="12.5" height="1.8" fill="#8c148c"/>
<polygon points="259,777.46 269.7,777.46 269.7,784.56 271.5,786.56 271.5,796.56 269.7,798.56 269.7,805.66 259,805.66 259,798.56 257.2,796.56 257.2,786.56 259,784.56" fill="#f677f6" stroke="#1e1e1e" stroke-width="1.6"/>
<rect x="258.2" y="792.16" width="12.3" height="1.8" fill="#8c148c"/>
<polygon points="280,777.46 291.2,777.46 291.2,784.56 293,786.56 293,796.56 291.2,798.56 291.2,805.66 280,805.66 280,798.56 278.2,796.56 278.2,786.56 280,784.56" fill="#f677f6" stroke="#1e1e1e" stroke-width="1.6"/>
<rect x="279.2" y="792.16" width="12.8" height="1.8" fill="#8c148c"/>
<polygon points="297.9,777.46 309.1,777.46 309.1,784.56 310.9,786.56 310.9,796.56 309.1,798.56 309.1,805.66 297.9,805.66 297.9,798.56 296.1,796.56 296.1,786.56 297.9,784.56" fill="#f677f6" stroke="#1e1e1e" stroke-width="1.6"/>
<rect x="297.1" y="792.16" width="12.8" height="1.8" fill="#8c148c"/>
<polygon points="326.2,777.46 337.1,777.46 337.1,784.56 338.9,786.56 338.9,796.56 337.1,798.56 337.1,805.66 326.2,805.66 326.2,798.56 324.4,796.56 324.4,786.56 326.2,784.56" fill="#f677f6" stroke="#1e1e1e" stroke-width="1.6"/>
<rect x="325.4" y="792.16" width="12.5" height="1.8" fill="#8c148c"/>
<polygon points="344.5,777.46 355.2,777.46 355.2,784.56 357,786.56 357,796.56 355.2,798.56 355.2,805.66 344.5,805.66 344.5,798.56 342.7,796.56 342.7,786.56 344.5,784.56" fill="#f677f6" stroke="#1e1e1e" stroke-width="1.6"/>
<rect x="343.7" y="792.16" width="12.3" height="1.8" fill="#8c148c"/>
<polygon points="365.5,777.46 376.7,777.46 376.7,784.56 378.5,786.56 378.5,796.56 376.7,798.56 376.7,805.66 365.5,805.66 365.5,798.56 363.7,796.56 363.7,786.56 365.5,784.56" fill="#f677f6" stroke="#1e1e1e" stroke-width="1.6"/>
<rect x="364.7" y="792.16" width="12.8" height="1.8" fill="#8c148c"/>
<polygon points="383.4,777.46 394.1,777.46 394.1,784.56 395.9,786.56 395.9,796.56 394.1,798.56 394.1,805.66 383.4,805.66 383.4,798.56 381.6,796.56 381.6,786.56 383.4,784.56" fill="#f677f6" stroke="#1e1e1e" stroke-width="1.6"/>
<rect x="382.6" y="792.16" width="12.3" height="1.8" fill="#8c148c"/>
<polygon points="411.7,777.46 423.1,777.46 423.1,784.56 424.9,786.56 424.9,796.56 423.1,798.56 423.1,805.66 411.7,805.66 411.7,798.56 409.9,796.56 409.9,786.56 411.7,784.56" fill="#f677f6" stroke="#1e1e1e" stroke-width="1.6"/>
<rect x="410.9" y="792.16" width="13" height="1.8" fill="#8c148c"/>
<polygon points="437.5,777.46 447,777.46 447,784.56 448.8,786.56 448.8,796.56 447,798.56 447,805.66 437.5,805.66 437.5,798.56 435.7,796.56 435.7,786.56 437.5,784.56" fill="#f677f6" stroke="#1e1e1e" stroke-width="1.6"/>
<rect x="436.7" y="792.16" width="11.1" height="1.8" fill="#8c148c"/>
<polygon points="451.1,777.46 461.9,777.46 461.9,784.56 463.7,786.56 463.7,796.56 461.9,798.56 461.9,805.66 451.1,805.66 451.1,798.56 449.3,796.56 449.3,786.56 451.1,784.56" fill="#f677f6" stroke="#1e1e1e" stroke-width="1.6"/>
<rect x="450.3" y="792.16" width="12.4" height="1.8" fill="#8c148c"/>
<polygon points="469.1,777.46 480,777.46 480,784.56 481.8,786.56 481.8,796.56 480,798.56 480,805.66 469.1,805.66 469.1,798.56 467.3,796.56 467.3,786.56 469.1,784.56" fill="#f677f6" stroke="#1e1e1e" stroke-width="1.6"/>
<rect x="468.3" y="792.16" width="12.5" height="1.8" fill="#8c148c"/>
<polygon points="497.1,777.46 508,777.46 508,784.56 509.8,786.56 509.8,796.56 508,798.56 508,805.66 497.1,805.66 497.1,798.56 495.3,796.56 495.3,786.56 497.1,784.56" fill="#f677f6" stroke="#1e1e1e" stroke-width="1.6"/>
<rect x="496.3" y="792.16" width="12.5" height="1.8" fill="#8c148c"/>
<polygon points="515.3,777.46 526.2,777.46 526.2,784.56 528,786.56 528,796.56 526.2,798.56 526.2,805.66 515.3,805.66 515.3,798.56 513.5,796.56 513.5,786.56 515.3,784.56" fill="#f677f6" stroke="#1e1e1e" stroke-width="1.6"/>
<rect x="514.5" y="792.16" width="12.5" height="1.8" fill="#8c148c"/>
<polygon points="536.5,777.46 547.2,777.46 547.2,784.56 549,786.56 549,796.56 547.2,798.56 547.2,805.66 536.5,805.66 536.5,798.56 534.7,796.56 534.7,786.56 536.5,784.56" fill="#f677f6" stroke="#1e1e1e" stroke-width="1.6"/>
<rect x="535.7" y="792.16" width="12.3" height="1.8" fill="#8c148c"/>
<polygon points="559.3,777.46 567.7,777.46 567.7,784.56 569.5,786.56 569.5,796.56 567.7,798.56 567.7,805.66 559.3,805.66 559.3,798.56 557.5,796.56 557.5,786.56 559.3,784.56" fill="#f677f6" stroke="#1e1e1e" stroke-width="1.6"/>
<rect x="558.5" y="792.16" width="10" height="1.8" fill="#8c148c"/>
<polygon points="583.1,777.46 593.8,777.46 593.8,784.56 595.6,786.56 595.6,796.56 593.8,798.56 593.8,805.66 583.1,805.66 583.1,798.56 581.3,796.56 581.3,786.56 583.1,784.56" fill="#f677f6" stroke="#1e1e1e" stroke-width="1.6"/>
<rect x="582.3" y="792.16" width="12.3" height="1.8" fill="#8c148c"/>
<polygon points="606,777.46 615.3,777.46 615.3,784.56 617.1,786.56 617.1,796.56 615.3,798.56 615.3,805.66 606,805.66 606,798.56 604.2,796.56 604.2,786.56 606,784.56" fill="#f677f6" stroke="#1e1e1e" stroke-width="1.6"/>
<rect x="605.2" y="792.16" width="10.9" height="1.8" fill="#8c148c"/>
<polygon points="622.3,777.46 631.9,777.46 631.9,784.56 633.7,786.56 633.7,796.56 631.9,798.56 631.9,805.66 622.3,805.66 622.3,798.56 620.5,796.56 620.5,786.56 622.3,784.56" fill="#f677f6" stroke="#1e1e1e" stroke-width="1.6"/>
<rect x="621.5" y="792.16" width="11.2" height="1.8" fill="#8c148c"/>
<polygon points="668.7,777.46 679.4,777.46 679.4,784.56 681.2,786.56 681.2,796.56 679.4,798.56 679.4,805.66 668.7,805.66 668.7,798.56 666.9,796.56 666.9,786.56 668.7,784.56" fill="#f677f6" stroke="#1e1e1e" stroke-width="1.6"/>
<rect x="667.9" y="792.16" width="12.3" height="1.8" fill="#8c148c"/>
<polygon points="686.4,777.46 697.3,777.46 697.3,784.56 699.1,786.56 699.1,796.56 697.3,798.56 697.3,805.66 686.4,805.66 686.4,798.56 684.6,796.56 684.6,786.56 686.4,784.56" fill="#f677f6" stroke="#1e1e1e" stroke-width="1.6"/>
<rect x="685.6" y="792.16" width="12.5" height="1.8" fill="#8c148c"/>
<polygon points="712.2,777.46 722.6,777.46 722.6,784.56 724.4,786.56 724.4,796.56 722.6,798.56 722.6,805.66 712.2,805.66 712.2,798.56 710.4,796.56 710.4,786.56 712.2,784.56" fill="#f677f6" stroke="#1e1e1e" stroke-width="1.6"/>
<rect x="711.4" y="792.16" width="12" height="1.8" fill="#8c148c"/>
<polygon points="729.6,777.46 740.3,777.46 740.3,784.56 742.1,786.56 742.1,796.56 740.3,798.56 740.3,805.66 729.6,805.66 729.6,798.56 727.8,796.56 727.8,786.56 729.6,784.56" fill="#f677f6" stroke="#1e1e1e" stroke-width="1.6"/>
<rect x="728.8" y="792.16" width="12.3" height="1.8" fill="#8c148c"/>
<polygon points="754.7,777.46 765.3,777.46 765.3,784.56 767.1,786.56 767.1,796.56 765.3,798.56 765.3,805.66 754.7,805.66 754.7,798.56 752.9,796.56 752.9,786.56 754.7,784.56" fill="#f677f6" stroke="#1e1e1e" stroke-width="1.6"/>
<rect x="753.9" y="792.16" width="12.2" height="1.8" fill="#8c148c"/>
<polygon points="772.4,777.46 783,777.46 783,784.56 784.8,786.56 784.8,796.56 783,798.56 783,805.66 772.4,805.66 772.4,798.56 770.6,796.56 770.6,786.56 772.4,784.56" fill="#f677f6" stroke="#1e1e1e" stroke-width="1.6"/>
<rect x="771.6" y="792.16" width="12.2" height="1.8" fill="#8c148c"/>
<polygon points="793,777.46 803.9,777.46 803.9,784.56 805.7,786.56 805.7,796.56 803.9,798.56 803.9,805.66 793,805.66 793,798.56 791.2,796.56 791.2,786.56 793,784.56" fill="#f677f6" stroke="#1e1e1e" stroke-width="1.6"/>
<rect x="792.2" y="792.16" width="12.5" height="1.8" fill="#8c148c"/>
<polygon points="815.1,777.46 825.2,777.46 825.2,784.56 827,786.56 827,796.56 825.2,798.56 825.2,805.66 815.1,805.66 815.1,798.56 813.3,796.56 813.3,786.56 815.1,784.56" fill="#f677f6" stroke="#1e1e1e" stroke-width="1.6"/>
<rect x="814.3" y="792.16" width="11.7" height="1.8" fill="#8c148c"/>
<polygon points="839.3,777.46 850.2,777.46 850.2,784.56 852,786.56 852,796.56 850.2,798.56 850.2,805.66 839.3,805.66 839.3,798.56 837.5,796.56 837.5,786.56 839.3,784.56" fill="#f677f6" stroke="#1e1e1e" stroke-width="1.6"/>
<rect x="838.5" y="792.16" width="12.5" height="1.8" fill="#8c148c"/>
<polygon points="862.3,777.46 871.9,777.46 871.9,784.56 873.7,786.56 873.7,796.56 871.9,798.56 871.9,805.66 862.3,805.66 862.3,798.56 860.5,796.56 860.5,786.56 862.3,784.56" fill="#f677f6" stroke="#1e1e1e" stroke-width="1.6"/>
<rect x="861.5" y="792.16" width="11.2" height="1.8" fill="#8c148c"/>
<polygon points="878.7,777.46 889.6,777.46 889.6,784.56 891.4,786.56 891.4,796.56 889.6,798.56 889.6,805.66 878.7,805.66 878.7,798.56 876.9,796.56 876.9,786.56 878.7,784.56" fill="#f677f6" stroke="#1e1e1e" stroke-width="1.6"/>
<rect x="877.9" y="792.16" width="12.5" height="1.8" fill="#8c148c"/>
<polygon points="901,777.46 910.6,777.46 910.6,784.56 912.4,786.56 912.4,796.56 910.6,798.56 910.6,805.66 901,805.66 901,798.56 899.2,796.56 899.2,786.56 901,784.56" fill="#f677f6" stroke="#1e1e1e" stroke-width="1.6"/>
<rect x="900.2" y="792.16" width="11.2" height="1.8" fill="#8c148c"/>
<polygon points="925.1,777.46 936,777.46 936,784.56 937.8,786.56 937.8,796.56 936,798.56 936,805.66 925.1,805.66 925.1,798.56 923.3,796.56 923.3,786.56 925.1,784.56" fill="#f677f6" stroke="#1e1e1e" stroke-width="1.6"/>
<rect x="924.3" y="792.16" width="12.5" height="1.8" fill="#8c148c"/>
<polygon points="942.9,777.46 953.8,777.46 953.8,784.56 955.6,786.56 955.6,796.56 953.8,798.56 953.8,805.66 942.9,805.66 942.9,798.56 941.1,796.56 941.1,786.56 942.9,784.56" fill="#f677f6" stroke="#1e1e1e" stroke-width="1.6"/>
<rect x="942.1" y="792.16" width="12.5" height="1.8" fill="#8c148c"/>
<polygon points="968.2,777.46 978.6,777.46 978.6,784.56 980.4,786.56 980.4,796.56 978.6,798.56 978.6,805.66 968.2,805.66 968.2,798.56 966.4,796.56 966.4,786.56 968.2,784.56" fill="#f677f6" stroke="#1e1e1e" stroke-width="1.6"/>
<rect x="967.4" y="792.16" width="12" height="1.8" fill="#8c148c"/>
<polygon points="985.9,777.46 996,777.46 996,784.56 997.8,786.56 997.8,796.56 996,798.56 996,805.66 985.9,805.66 985.9,798.56 984.1,796.56 984.1,786.56 985.9,784.56" fill="#f677f6" stroke="#1e1e1e" stroke-width="1.6"/>
<rect x="985.1" y="792.16" width="11.7" height="1.8" fill="#8c148c"/>
<polygon points="1010.5,777.46 1020.9,777.46 1020.9,784.56 1022.7,786.56 1022.7,796.56 1020.9,798.56 1020.9,805.66 1010.5,805.66 1010.5,798.56 1008.7,796.56 1008.7,786.56 1010.5,784.56" fill="#f677f6" stroke="#1e1e1e" stroke-width="1.6"/>
<rect x="1009.7" y="792.16" width="12" height="1.8" fill="#8c148c"/>
<polygon points="643.3,776.56 653.7,776.56 653.7,784.56 655.5,786.56 655.5,796.56 653.7,798.56 653.7,806.56 643.3,806.56 643.3,798.56 641.5,796.56 641.5,786.56 643.3,784.56" fill="#f677f6" stroke="#ff0000" stroke-width="3.4"/>
<rect x="643" y="792.16" width="11" height="1.8" fill="#8c148c"/>
</g>
<rect x="205.9" y="854.2" width="810" height="1.6" fill="#1b1b1b"/>
<rect x="221.52" y="854.2" width="1.5" height="5.8" fill="#1b1b1b"/>
<rect x="250.06" y="854.2" width="1.5" height="5.8" fill="#1b1b1b"/>
<rect x="278.59" y="854.2" width="1.5" height="5.8" fill="#1b1b1b"/>
<rect x="307.07" y="854.2" width="1.6" height="12" fill="#1b1b1b"/>
<text x="295.89" y="888.8" font-size="19.2"  fill="#1b1b1b" stroke="#1b1b1b" stroke-width="0.25" textLength="23.92" lengthAdjust="spacingAndGlyphs">50</text>
<rect x="335.66" y="854.2" width="1.5" height="5.8" fill="#1b1b1b"/>
<rect x="364.19" y="854.2" width="1.5" height="5.8" fill="#1b1b1b"/>
<rect x="392.73" y="854.2" width="1.5" height="5.8" fill="#1b1b1b"/>
<rect x="421.26" y="854.2" width="1.5" height="5.8" fill="#1b1b1b"/>
<rect x="449.75" y="854.2" width="1.6" height="12" fill="#1b1b1b"/>
<text x="432.63" y="888.8" font-size="19.2"  fill="#1b1b1b" stroke="#1b1b1b" stroke-width="0.25" textLength="35.88" lengthAdjust="spacingAndGlyphs">100</text>
<rect x="478.33" y="854.2" width="1.5" height="5.8" fill="#1b1b1b"/>
<rect x="506.87" y="854.2" width="1.5" height="5.8" fill="#1b1b1b"/>
<rect x="535.4" y="854.2" width="1.5" height="5.8" fill="#1b1b1b"/>
<rect x="563.94" y="854.2" width="1.5" height="5.8" fill="#1b1b1b"/>
<rect x="592.42" y="854.2" width="1.6" height="12" fill="#1b1b1b"/>
<text x="575.3" y="888.8" font-size="19.2"  fill="#1b1b1b" stroke="#1b1b1b" stroke-width="0.25" textLength="35.88" lengthAdjust="spacingAndGlyphs">150</text>
<rect x="621.01" y="854.2" width="1.5" height="5.8" fill="#1b1b1b"/>
<rect x="649.54" y="854.2" width="1.5" height="5.8" fill="#1b1b1b"/>
<rect x="678.08" y="854.2" width="1.5" height="5.8" fill="#1b1b1b"/>
<rect x="706.62" y="854.2" width="1.5" height="5.8" fill="#1b1b1b"/>
<rect x="735.1" y="854.2" width="1.6" height="12" fill="#1b1b1b"/>
<text x="717.98" y="888.8" font-size="19.2"  fill="#1b1b1b" stroke="#1b1b1b" stroke-width="0.25" textLength="35.88" lengthAdjust="spacingAndGlyphs">200</text>
<rect x="763.68" y="854.2" width="1.5" height="5.8" fill="#1b1b1b"/>
<rect x="792.22" y="854.2" width="1.5" height="5.8" fill="#1b1b1b"/>
<rect x="820.75" y="854.2" width="1.5" height="5.8" fill="#1b1b1b"/>
<rect x="849.29" y="854.2" width="1.5" height="5.8" fill="#1b1b1b"/>
<rect x="877.78" y="854.2" width="1.6" height="12" fill="#1b1b1b"/>
<text x="860.66" y="888.8" font-size="19.2"  fill="#1b1b1b" stroke="#1b1b1b" stroke-width="0.25" textLength="35.88" lengthAdjust="spacingAndGlyphs">250</text>
<rect x="906.36" y="854.2" width="1.5" height="5.8" fill="#1b1b1b"/>
<rect x="934.89" y="854.2" width="1.5" height="5.8" fill="#1b1b1b"/>
<rect x="963.43" y="854.2" width="1.5" height="5.8" fill="#1b1b1b"/>
<rect x="991.96" y="854.2" width="1.5" height="5.8" fill="#1b1b1b"/>
<text x="541" y="915.2" font-size="24.4" font-weight="bold" fill="#000" stroke="#000" stroke-width="0.25" textLength="137.83" lengthAdjust="spacingAndGlyphs">Time in ns</text>
<rect x="36.3" y="931.3" width="986.7" height="182" fill="#efefef"/>
<rect x="36.3" y="931.3" width="986.7" height="2.9" fill="#a9a9a9"/>
<rect x="36.3" y="931.3" width="2.3" height="182" fill="#a9a9a9"/>
<rect x="31.5" y="939.8" width="1.6" height="166.2" fill="#1b1b1b"/>
<g clip-path="url(#cOv)">
<rect x="45" y="948.6" width="15" height="12.2" fill="#19e619"/>
<rect x="56.68" y="948.6" width="28.25" height="12.2" fill="#30e030"/>
<rect x="94.8" y="948.6" width="15.67" height="12.2" fill="#30e030"/>
<rect x="119.34" y="948.6" width="2.6" height="12.2" fill="#30e030"/>
<rect x="133.27" y="948.6" width="4.03" height="12.2" fill="#30e030"/>
<rect x="171.24" y="948.6" width="2.99" height="12.2" fill="#30e030"/>
<rect x="187.76" y="948.6" width="4.06" height="12.2" fill="#30e030"/>
<rect x="225.66" y="948.6" width="4.17" height="12.2" fill="#30e030"/>
<rect x="255.09" y="948.6" width="9.05" height="12.2" fill="#30e030"/>
<rect x="308.02" y="948.6" width="4.49" height="12.2" fill="#30e030"/>
<rect x="346.52" y="948.6" width="2.6" height="12.2" fill="#30e030"/>
<polygon points="84.93,954.7 89.76,948.6 89.76,948.6 94.58,954.7 89.76,960.8 89.76,960.8" fill="#76f176"/>
<polygon points="110.61,954.7 114.9,948.6 114.9,948.6 119.2,954.7 114.9,960.8 114.9,960.8" fill="#76f176"/>
<polygon points="121.83,954.7 127.44,948.6 127.44,948.6 133.05,954.7 127.44,960.8 127.44,960.8" fill="#76f176"/>
<polygon points="137.29,954.7 148.29,948.6 159.92,948.6 170.92,954.7 159.92,960.8 148.29,960.8" fill="#76f176"/>
<polygon points="174.23,954.7 180.91,948.6 180.91,948.6 187.59,954.7 180.91,960.8 180.91,960.8" fill="#76f176"/>
<polygon points="191.82,954.7 202.82,948.6 214.34,948.6 225.34,954.7 214.34,960.8 202.82,960.8" fill="#76f176"/>
<polygon points="229.83,954.7 240.83,948.6 243.76,948.6 254.76,954.7 243.76,960.8 240.83,960.8" fill="#76f176"/>
<polygon points="264.13,954.7 275.13,948.6 296.77,948.6 307.77,954.7 296.77,960.8 275.13,960.8" fill="#76f176"/>
<polygon points="312.5,954.7 323.5,948.6 335.38,948.6 346.38,954.7 335.38,960.8 323.5,960.8" fill="#76f176"/>
<polygon points="346.5,954.7 351.5,948.6 358.3,948.6 363.3,954.7 358.3,960.8 351.5,960.8" fill="#76f176"/>
<rect x="552.2" y="948.6" width="16.5" height="12.2" fill="#19e619"/>
<polygon points="568.7,954.7 576.7,948.6 582.8,948.6 590.8,954.7 582.8,960.8 576.7,960.8" fill="#76f176"/>
<polygon points="590.8,954.7 610.8,948.6 630.5,948.6 650.5,954.7 630.5,960.8 610.8,960.8" fill="#76f176"/>
<polygon points="650.8,954.7 670.8,948.6 696,948.6 716,954.7 696,960.8 670.8,960.8" fill="#76f176"/>
<polygon points="721.5,954.7 725.5,948.6 727.8,948.6 731.8,954.7 727.8,960.8 725.5,960.8" fill="#76f176"/>
<polygon points="732,954.7 736,948.6 738.5,948.6 742.5,954.7 738.5,960.8 736,960.8" fill="#76f176"/>
<rect x="716" y="948.6" width="5.6" height="12.2" fill="#30e030"/>
<rect x="743.2" y="948.6" width="16.5" height="12.2" fill="#19e619"/>
<rect x="75.44" y="963.9" width="2.6" height="12.2" fill="#3ae63a"/>
<rect x="81.88" y="963.9" width="2.6" height="12.2" fill="#3ae63a"/>
<rect x="89.36" y="963.9" width="2.6" height="12.2" fill="#3ae63a"/>
<rect x="95.78" y="963.9" width="2.6" height="12.2" fill="#3ae63a"/>
<rect x="105.86" y="963.9" width="2.6" height="12.2" fill="#3ae63a"/>
<rect x="112.3" y="963.9" width="2.6" height="12.2" fill="#3ae63a"/>
<rect x="119.71" y="963.9" width="2.6" height="12.2" fill="#3ae63a"/>
<rect x="126.27" y="963.9" width="2.6" height="12.2" fill="#3ae63a"/>
<rect x="136.28" y="963.9" width="2.6" height="12.2" fill="#3ae63a"/>
<rect x="145.22" y="963.9" width="2.6" height="12.2" fill="#3ae63a"/>
<rect x="150.24" y="963.9" width="2.6" height="12.2" fill="#3ae63a"/>
<rect x="156.69" y="963.9" width="2.6" height="12.2" fill="#3ae63a"/>
<rect x="166.84" y="963.9" width="2.6" height="12.2" fill="#3ae63a"/>
<rect x="173.18" y="963.9" width="2.6" height="12.2" fill="#3ae63a"/>
<rect x="180.73" y="963.9" width="2.6" height="12.2" fill="#3ae63a"/>
<rect x="188.53" y="963.9" width="2.6" height="12.2" fill="#3ae63a"/>
<rect x="197.26" y="963.9" width="2.6" height="12.2" fill="#3ae63a"/>
<rect x="204.74" y="963.9" width="2.6" height="12.2" fill="#3ae63a"/>
<rect x="211.22" y="963.9" width="2.6" height="12.2" fill="#3ae63a"/>
<rect x="227.71" y="963.9" width="2.6" height="12.2" fill="#3ae63a"/>
<rect x="234.16" y="963.9" width="2.6" height="12.2" fill="#3ae63a"/>
<rect x="242.99" y="963.9" width="2.6" height="12.2" fill="#3ae63a"/>
<rect x="249.4" y="963.9" width="2.6" height="12.2" fill="#3ae63a"/>
<rect x="258.27" y="963.9" width="2.6" height="12.2" fill="#3ae63a"/>
<rect x="264.69" y="963.9" width="2.6" height="12.2" fill="#3ae63a"/>
<rect x="272.17" y="963.9" width="2.6" height="12.2" fill="#3ae63a"/>
<rect x="279.89" y="963.9" width="2.6" height="12.2" fill="#3ae63a"/>
<rect x="288.62" y="963.9" width="2.6" height="12.2" fill="#3ae63a"/>
<rect x="296.17" y="963.9" width="2.6" height="12.2" fill="#3ae63a"/>
<rect x="302.62" y="963.9" width="2.6" height="12.2" fill="#3ae63a"/>
<rect x="310.24" y="963.9" width="2.6" height="12.2" fill="#3ae63a"/>
<rect x="319.18" y="963.9" width="2.6" height="12.2" fill="#3ae63a"/>
<rect x="325.52" y="963.9" width="2.6" height="12.2" fill="#3ae63a"/>
<rect x="334.36" y="963.9" width="2.6" height="12.2" fill="#3ae63a"/>
<rect x="340.81" y="963.9" width="2.6" height="12.2" fill="#3ae63a"/>
<rect x="341.6" y="963.9" width="2.6" height="12.2" fill="#3ae63a"/>
<rect x="350.4" y="963.9" width="2.6" height="12.2" fill="#3ae63a"/>
<rect x="357.2" y="963.9" width="2.6" height="12.2" fill="#3ae63a"/>
<rect x="364" y="963.9" width="2.6" height="12.2" fill="#3ae63a"/>
<rect x="371.7" y="963.9" width="2.6" height="12.2" fill="#3ae63a"/>
<rect x="380.5" y="963.9" width="2.6" height="12.2" fill="#3ae63a"/>
<rect x="388.3" y="963.9" width="2.6" height="12.2" fill="#3ae63a"/>
<rect x="395.1" y="963.9" width="2.6" height="12.2" fill="#3ae63a"/>
<rect x="401.9" y="963.9" width="2.6" height="12.2" fill="#3ae63a"/>
<rect x="410.6" y="963.9" width="2.6" height="12.2" fill="#3ae63a"/>
<rect x="417.4" y="963.9" width="2.6" height="12.2" fill="#3ae63a"/>
<rect x="426.2" y="963.9" width="2.6" height="12.2" fill="#3ae63a"/>
<rect x="433" y="963.9" width="2.6" height="12.2" fill="#3ae63a"/>
<rect x="441.8" y="963.9" width="2.6" height="12.2" fill="#3ae63a"/>
<rect x="448.6" y="963.9" width="2.6" height="12.2" fill="#3ae63a"/>
<rect x="457.3" y="963.9" width="2.6" height="12.2" fill="#3ae63a"/>
<rect x="463.1" y="963.9" width="2.6" height="12.2" fill="#3ae63a"/>
<rect x="472.9" y="963.9" width="2.6" height="12.2" fill="#3ae63a"/>
<rect x="479.7" y="963.9" width="2.6" height="12.2" fill="#3ae63a"/>
<rect x="504.9" y="963.9" width="2.6" height="12.2" fill="#3ae63a"/>
<rect x="508.8" y="963.9" width="2.6" height="12.2" fill="#3ae63a"/>
<rect x="513.7" y="963.9" width="2.6" height="12.2" fill="#3ae63a"/>
<rect x="517.6" y="963.9" width="2.6" height="12.2" fill="#3ae63a"/>
<rect x="521.5" y="963.9" width="2.6" height="12.2" fill="#3ae63a"/>
<rect x="525.4" y="963.9" width="2.6" height="12.2" fill="#3ae63a"/>
<rect x="530.2" y="963.9" width="2.6" height="12.2" fill="#3ae63a"/>
<rect x="534.1" y="963.9" width="2.6" height="12.2" fill="#3ae63a"/>
<rect x="540.9" y="963.9" width="2.6" height="12.2" fill="#3ae63a"/>
<rect x="551.6" y="963.9" width="2.6" height="12.2" fill="#3ae63a"/>
<rect x="558.4" y="963.9" width="2.6" height="12.2" fill="#3ae63a"/>
<rect x="566.2" y="963.9" width="2.6" height="12.2" fill="#3ae63a"/>
<rect x="574" y="963.9" width="2.6" height="12.2" fill="#3ae63a"/>
<rect x="589.5" y="963.9" width="2.6" height="12.2" fill="#3ae63a"/>
<rect x="599.2" y="963.9" width="2.6" height="12.2" fill="#3ae63a"/>
<rect x="608" y="963.9" width="2.6" height="12.2" fill="#3ae63a"/>
<rect x="613.8" y="963.9" width="2.6" height="12.2" fill="#3ae63a"/>
<rect x="618.7" y="963.9" width="2.6" height="12.2" fill="#3ae63a"/>
<rect x="628.4" y="963.9" width="2.6" height="12.2" fill="#3ae63a"/>
<rect x="653.7" y="963.9" width="2.6" height="12.2" fill="#3ae63a"/>
<rect x="659.5" y="963.9" width="2.6" height="12.2" fill="#3ae63a"/>
<rect x="665.3" y="963.9" width="2.6" height="12.2" fill="#3ae63a"/>
<rect x="669.2" y="963.9" width="2.6" height="12.2" fill="#3ae63a"/>
<rect x="677.1" y="963.9" width="2.6" height="12.2" fill="#3ae63a"/>
<rect x="684.8" y="963.9" width="2.6" height="12.2" fill="#3ae63a"/>
<rect x="697.6" y="963.9" width="2.6" height="12.2" fill="#3ae63a"/>
<rect x="722.4" y="963.9" width="2.6" height="12.2" fill="#3ae63a"/>
<rect x="727.3" y="963.9" width="2.6" height="12.2" fill="#3ae63a"/>
<rect x="731.2" y="963.9" width="2.6" height="12.2" fill="#3ae63a"/>
<rect x="737" y="963.9" width="2.6" height="12.2" fill="#3ae63a"/>
<rect x="742.9" y="963.9" width="2.6" height="12.2" fill="#3ae63a"/>
<rect x="748.7" y="963.9" width="2.6" height="12.2" fill="#3ae63a"/>
<rect x="753.6" y="963.9" width="2.6" height="12.2" fill="#3ae63a"/>
<rect x="757.4" y="963.9" width="2.6" height="12.2" fill="#3ae63a"/>
<rect x="761.3" y="963.9" width="2.6" height="12.2" fill="#3ae63a"/>
<rect x="766.2" y="963.9" width="2.6" height="12.2" fill="#3ae63a"/>
<rect x="771.1" y="963.9" width="2.6" height="12.2" fill="#3ae63a"/>
<rect x="775.9" y="963.9" width="2.6" height="12.2" fill="#3ae63a"/>
<rect x="779.8" y="963.9" width="2.6" height="12.2" fill="#3ae63a"/>
<rect x="784.7" y="963.9" width="2.6" height="12.2" fill="#3ae63a"/>
<rect x="790.5" y="963.9" width="2.6" height="12.2" fill="#3ae63a"/>
<rect x="798.3" y="963.9" width="2.6" height="12.2" fill="#3ae63a"/>
<rect x="803.1" y="963.9" width="2.6" height="12.2" fill="#3ae63a"/>
<rect x="807" y="963.9" width="2.6" height="12.2" fill="#3ae63a"/>
<rect x="812.9" y="963.9" width="2.6" height="12.2" fill="#3ae63a"/>
<rect x="817.7" y="963.9" width="2.6" height="12.2" fill="#3ae63a"/>
<rect x="823.6" y="963.9" width="2.6" height="12.2" fill="#3ae63a"/>
<rect x="828.4" y="963.9" width="2.6" height="12.2" fill="#3ae63a"/>
<rect x="833.3" y="963.9" width="2.6" height="12.2" fill="#3ae63a"/>
<rect x="838.1" y="963.9" width="2.6" height="12.2" fill="#3ae63a"/>
<rect x="843" y="963.9" width="2.6" height="12.2" fill="#3ae63a"/>
<rect x="851.7" y="963.9" width="2.6" height="12.2" fill="#3ae63a"/>
<rect x="859.5" y="963.9" width="2.6" height="12.2" fill="#3ae63a"/>
<rect x="884.8" y="963.9" width="2.6" height="12.2" fill="#3ae63a"/>
<rect x="891.6" y="963.9" width="2.6" height="12.2" fill="#3ae63a"/>
<rect x="918.2" y="963.9" width="2.6" height="12.2" fill="#3ae63a"/>
<rect x="940.2" y="963.9" width="2.6" height="12.2" fill="#3ae63a"/>
<rect x="966.1" y="963.9" width="2.6" height="12.2" fill="#3ae63a"/>
<polygon points="217.11,970 219.31,963.2 221.05,963.2 223.25,970 221.05,976.8 219.31,976.8" fill="#ee2020"/>
<rect x="59.99" y="948.6" width="2.6" height="12.2" fill="#e02020"/>
<polygon points="59.15,985.2 62.65,978.8 69.45,978.8 72.95,985.2 69.45,991.6 62.65,991.6" fill="#f4f476"/>
<polygon points="71.94,985.2 79.34,978.8 83.04,978.8 90.44,985.2 83.04,991.6 79.34,991.6" fill="#f677f6"/>
<polygon points="97,985.2 100.5,978.8 107.3,978.8 110.8,985.2 107.3,991.6 100.5,991.6" fill="#76f176"/>
<polygon points="112.26,985.2 115.76,978.8 122.56,978.8 126.06,985.2 122.56,991.6 115.76,991.6" fill="#f4f476"/>
<polygon points="127.51,985.2 134.91,978.8 138.61,978.8 146.01,985.2 138.61,991.6 134.91,991.6" fill="#f677f6"/>
<polygon points="147.84,985.2 151.34,978.8 158.14,978.8 161.64,985.2 158.14,991.6 151.34,991.6" fill="#76f176"/>
<polygon points="288.93,985.2 292.43,978.8 299.23,978.8 302.73,985.2 299.23,991.6 292.43,991.6" fill="#f4f476"/>
<polygon points="301.67,985.2 309.07,978.8 312.77,978.8 320.17,985.2 312.77,991.6 309.07,991.6" fill="#f677f6"/>
<polygon points="324.29,985.2 327.79,978.8 334.59,978.8 338.09,985.2 334.59,991.6 327.79,991.6" fill="#76f176"/>
<polygon points="340.64,985.2 344.14,978.8 350.94,978.8 354.44,985.2 350.94,991.6 344.14,991.6" fill="#f4f476"/>
<polygon points="166.97,1000 170.47,993.6 177.27,993.6 180.77,1000 177.27,1006.4 170.47,1006.4" fill="#f4f476"/>
<polygon points="180.06,1000 187.46,993.6 191.16,993.6 198.56,1000 191.16,1006.4 187.46,1006.4" fill="#f677f6"/>
<polygon points="202.4,1000 205.9,993.6 212.7,993.6 216.2,1000 212.7,1006.4 205.9,1006.4" fill="#76f176"/>
<polygon points="218.87,1000 222.37,993.6 229.17,993.6 232.67,1000 229.17,1006.4 222.37,1006.4" fill="#f4f476"/>
<polygon points="231.82,1000 239.22,993.6 242.92,993.6 250.32,1000 242.92,1006.4 239.22,1006.4" fill="#f677f6"/>
<polygon points="255.74,1000 259.24,993.6 266.04,993.6 269.54,1000 266.04,1006.4 259.24,1006.4" fill="#76f176"/>
<polygon points="272.39,1000 275.89,993.6 282.69,993.6 286.19,1000 282.69,1006.4 275.89,1006.4" fill="#f4f476"/>
<polygon points="285.27,1000 292.67,993.6 296.37,993.6 303.77,1000 296.37,1006.4 292.67,1006.4" fill="#f677f6"/>
<polygon points="309.27,1000 312.77,993.6 319.57,993.6 323.07,1000 319.57,1006.4 312.77,1006.4" fill="#76f176"/>
<polygon points="325.52,1000 329.02,993.6 335.82,993.6 339.32,1000 335.82,1006.4 329.02,1006.4" fill="#f4f476"/>
<polygon points="338.27,1000 345.67,993.6 349.37,993.6 356.77,1000 349.37,1006.4 345.67,1006.4" fill="#f677f6"/>
<polygon points="45.33,1014.8 48.83,1008.4 55.63,1008.4 59.13,1014.8 55.63,1021.2 48.83,1021.2" fill="#f4f476"/>
<polygon points="58.06,1014.8 65.46,1008.4 69.16,1008.4 76.56,1014.8 69.16,1021.2 65.46,1021.2" fill="#f677f6"/>
<polygon points="80.36,1014.8 83.86,1008.4 90.66,1008.4 94.16,1014.8 90.66,1021.2 83.86,1021.2" fill="#76f176"/>
<polygon points="95.84,1014.8 99.34,1008.4 106.14,1008.4 109.64,1014.8 106.14,1021.2 99.34,1021.2" fill="#f4f476"/>
<polygon points="108.98,1014.8 116.38,1008.4 120.08,1008.4 127.48,1014.8 120.08,1021.2 116.38,1021.2" fill="#f677f6"/>
<polygon points="131.37,1014.8 134.87,1008.4 141.67,1008.4 145.17,1014.8 141.67,1021.2 134.87,1021.2" fill="#76f176"/>
<polygon points="150.48,1014.8 153.98,1008.4 160.78,1008.4 164.28,1014.8 160.78,1021.2 153.98,1021.2" fill="#f4f476"/>
<polygon points="163.43,1014.8 170.83,1008.4 174.53,1008.4 181.93,1014.8 174.53,1021.2 170.83,1021.2" fill="#f677f6"/>
<polygon points="185.99,1014.8 189.49,1008.4 196.29,1008.4 199.79,1014.8 196.29,1021.2 189.49,1021.2" fill="#76f176"/>
<polygon points="203.62,1014.8 207.12,1008.4 213.92,1008.4 217.42,1014.8 213.92,1021.2 207.12,1021.2" fill="#f4f476"/>
<polygon points="216.5,1014.8 223.9,1008.4 227.6,1008.4 235,1014.8 227.6,1021.2 223.9,1021.2" fill="#f677f6"/>
<polygon points="239.28,1014.8 242.78,1008.4 249.58,1008.4 253.08,1014.8 249.58,1021.2 242.78,1021.2" fill="#76f176"/>
<polygon points="258.43,1014.8 261.93,1008.4 268.73,1008.4 272.23,1014.8 268.73,1021.2 261.93,1021.2" fill="#f4f476"/>
<polygon points="271.54,1014.8 278.94,1008.4 282.64,1008.4 290.04,1014.8 282.64,1021.2 278.94,1021.2" fill="#f677f6"/>
<polygon points="293.74,1014.8 297.24,1008.4 304.04,1008.4 307.54,1014.8 304.04,1021.2 297.24,1021.2" fill="#76f176"/>
<polygon points="310.2,1014.8 313.7,1008.4 320.5,1008.4 324,1014.8 320.5,1021.2 313.7,1021.2" fill="#f4f476"/>
<polygon points="323.31,1014.8 330.71,1008.4 334.41,1008.4 341.81,1014.8 334.41,1021.2 330.71,1021.2" fill="#f677f6"/>
<polygon points="346.66,1014.8 350.16,1008.4 356.96,1008.4 360.46,1014.8 356.96,1021.2 350.16,1021.2" fill="#76f176"/>
<polygon points="50.74,1030 54.24,1023.6 61.04,1023.6 64.54,1030 61.04,1036.4 54.24,1036.4" fill="#f4f476"/>
<polygon points="64.14,1030 71.54,1023.6 75.24,1023.6 82.64,1030 75.24,1036.4 71.54,1036.4" fill="#f677f6"/>
<polygon points="86.9,1030 90.4,1023.6 97.2,1023.6 100.7,1030 97.2,1036.4 90.4,1036.4" fill="#76f176"/>
<polygon points="106.04,1030 109.54,1023.6 116.34,1023.6 119.84,1030 116.34,1036.4 109.54,1036.4" fill="#f4f476"/>
<polygon points="119.08,1030 126.48,1023.6 130.18,1023.6 137.58,1030 130.18,1036.4 126.48,1036.4" fill="#f677f6"/>
<polygon points="141.34,1030 144.84,1023.6 151.64,1023.6 155.14,1030 151.64,1036.4 144.84,1036.4" fill="#76f176"/>
<polygon points="157.94,1030 161.44,1023.6 168.24,1023.6 171.74,1030 168.24,1036.4 161.44,1036.4" fill="#f4f476"/>
<polygon points="170.84,1030 178.24,1023.6 181.94,1023.6 189.34,1030 181.94,1036.4 178.24,1036.4" fill="#f677f6"/>
<polygon points="194.74,1030 198.24,1023.6 205.04,1023.6 208.54,1030 205.04,1036.4 198.24,1036.4" fill="#76f176"/>
<polygon points="211.28,1030 214.78,1023.6 221.58,1023.6 225.08,1030 221.58,1036.4 214.78,1036.4" fill="#f4f476"/>
<polygon points="225.32,1030 232.72,1023.6 236.42,1023.6 243.82,1030 236.42,1036.4 232.72,1036.4" fill="#f677f6"/>
<polygon points="248.35,1030 251.85,1023.6 258.65,1023.6 262.15,1030 258.65,1036.4 251.85,1036.4" fill="#76f176"/>
<polygon points="264.46,1030 267.96,1023.6 274.76,1023.6 278.26,1030 274.76,1036.4 267.96,1036.4" fill="#f4f476"/>
<polygon points="278.84,1030 286.24,1023.6 289.94,1023.6 297.34,1030 289.94,1036.4 286.24,1036.4" fill="#f677f6"/>
<polygon points="300.12,1030 303.62,1023.6 310.42,1023.6 313.92,1030 310.42,1036.4 303.62,1036.4" fill="#76f176"/>
<polygon points="319.27,1030 322.77,1023.6 329.57,1023.6 333.07,1030 329.57,1036.4 322.77,1036.4" fill="#f4f476"/>
<polygon points="332.23,1030 339.63,1023.6 343.33,1023.6 350.73,1030 343.33,1036.4 339.63,1036.4" fill="#f677f6"/>
<polygon points="81.8,1044.9 85.3,1038.5 92.1,1038.5 95.6,1044.9 92.1,1051.3 85.3,1051.3" fill="#f4f476"/>
<polygon points="94.65,1044.9 102.05,1038.5 105.75,1038.5 113.15,1044.9 105.75,1051.3 102.05,1051.3" fill="#f677f6"/>
<polygon points="117.34,1044.9 120.84,1038.5 127.64,1038.5 131.14,1044.9 127.64,1051.3 120.84,1051.3" fill="#76f176"/>
<polygon points="136.59,1044.9 140.09,1038.5 146.89,1038.5 150.39,1044.9 146.89,1051.3 140.09,1051.3" fill="#f4f476"/>
<polygon points="149.47,1044.9 156.87,1038.5 160.57,1038.5 167.97,1044.9 160.57,1051.3 156.87,1051.3" fill="#f677f6"/>
<polygon points="171.83,1044.9 175.33,1038.5 182.13,1038.5 185.63,1044.9 182.13,1051.3 175.33,1051.3" fill="#76f176"/>
<polygon points="188.25,1044.9 191.75,1038.5 198.55,1038.5 202.05,1044.9 198.55,1051.3 191.75,1051.3" fill="#f4f476"/>
<polygon points="201.29,1044.9 208.69,1038.5 212.39,1038.5 219.79,1044.9 212.39,1051.3 208.69,1051.3" fill="#f677f6"/>
<polygon points="223.95,1044.9 227.45,1038.5 234.25,1038.5 237.75,1044.9 234.25,1051.3 227.45,1051.3" fill="#76f176"/>
<polygon points="241.83,1044.9 245.33,1038.5 252.13,1038.5 255.63,1044.9 252.13,1051.3 245.33,1051.3" fill="#f4f476"/>
<polygon points="254.72,1044.9 262.12,1038.5 265.82,1038.5 273.22,1044.9 265.82,1051.3 262.12,1051.3" fill="#f677f6"/>
<polygon points="277.02,1044.9 280.52,1038.5 287.32,1038.5 290.82,1044.9 287.32,1051.3 280.52,1051.3" fill="#76f176"/>
<polygon points="295.03,1044.9 298.53,1038.5 305.33,1038.5 308.83,1044.9 305.33,1051.3 298.53,1051.3" fill="#f4f476"/>
<polygon points="307.99,1044.9 315.39,1038.5 319.09,1038.5 326.49,1044.9 319.09,1051.3 315.39,1051.3" fill="#f677f6"/>
<polygon points="330.63,1044.9 334.13,1038.5 340.93,1038.5 344.43,1044.9 340.93,1051.3 334.13,1051.3" fill="#76f176"/>
<polygon points="75.64,1059.8 79.14,1053.4 85.94,1053.4 89.44,1059.8 85.94,1066.2 79.14,1066.2" fill="#f4f476"/>
<polygon points="88.57,1059.8 95.97,1053.4 99.67,1053.4 107.07,1059.8 99.67,1066.2 95.97,1066.2" fill="#f677f6"/>
<polygon points="110.96,1059.8 114.46,1053.4 121.26,1053.4 124.76,1059.8 121.26,1066.2 114.46,1066.2" fill="#76f176"/>
<polygon points="126.24,1059.8 129.74,1053.4 136.54,1053.4 140.04,1059.8 136.54,1066.2 129.74,1066.2" fill="#f4f476"/>
<polygon points="139.39,1059.8 146.79,1053.4 150.49,1053.4 157.89,1059.8 150.49,1066.2 146.79,1066.2" fill="#f677f6"/>
<polygon points="161.68,1059.8 165.18,1053.4 171.98,1053.4 175.48,1059.8 171.98,1066.2 165.18,1066.2" fill="#76f176"/>
<polygon points="180.86,1059.8 184.36,1053.4 191.16,1053.4 194.66,1059.8 191.16,1066.2 184.36,1066.2" fill="#f4f476"/>
<polygon points="193.76,1059.8 201.16,1053.4 204.86,1053.4 212.26,1059.8 204.86,1066.2 201.16,1066.2" fill="#f677f6"/>
<polygon points="217.87,1059.8 221.37,1053.4 228.17,1053.4 231.67,1059.8 228.17,1066.2 221.37,1066.2" fill="#76f176"/>
<polygon points="234.01,1059.8 237.51,1053.4 244.31,1053.4 247.81,1059.8 244.31,1066.2 237.51,1066.2" fill="#f4f476"/>
<polygon points="247.14,1059.8 254.54,1053.4 258.24,1053.4 265.64,1059.8 258.24,1066.2 254.54,1066.2" fill="#f677f6"/>
<polygon points="269.91,1059.8 273.41,1053.4 280.21,1053.4 283.71,1059.8 280.21,1066.2 273.41,1066.2" fill="#76f176"/>
<polygon points="65.45,1074.7 68.95,1068.3 75.75,1068.3 79.25,1074.7 75.75,1081.1 68.95,1081.1" fill="#f4f476"/>
<polygon points="78.3,1074.7 85.7,1068.3 89.4,1068.3 96.8,1074.7 89.4,1081.1 85.7,1081.1" fill="#f677f6"/>
<polygon points="100.79,1074.7 104.29,1068.3 111.09,1068.3 114.59,1074.7 111.09,1081.1 104.29,1081.1" fill="#76f176"/>
<polygon points="120.01,1074.7 123.51,1068.3 130.31,1068.3 133.81,1074.7 130.31,1081.1 123.51,1081.1" fill="#f4f476"/>
<polygon points="132.8,1074.7 140.2,1068.3 143.9,1068.3 151.3,1074.7 143.9,1081.1 140.2,1081.1" fill="#f677f6"/>
<polygon points="156.94,1074.7 160.44,1068.3 167.24,1068.3 170.74,1074.7 167.24,1081.1 160.44,1081.1" fill="#76f176"/>
<polygon points="173.13,1074.7 176.63,1068.3 183.43,1068.3 186.93,1074.7 183.43,1081.1 176.63,1081.1" fill="#f4f476"/>
<polygon points="187.2,1074.7 194.6,1068.3 198.3,1068.3 205.7,1074.7 198.3,1081.1 194.6,1081.1" fill="#f677f6"/>
<polygon points="208.65,1074.7 212.15,1068.3 218.95,1068.3 222.45,1074.7 218.95,1081.1 212.15,1081.1" fill="#76f176"/>
<polygon points="228.01,1074.7 231.51,1068.3 238.31,1068.3 241.81,1074.7 238.31,1081.1 231.51,1081.1" fill="#f4f476"/>
<polygon points="240.88,1074.7 248.28,1068.3 251.98,1068.3 259.38,1074.7 251.98,1081.1 248.28,1081.1" fill="#f677f6"/>
<polygon points="263.2,1074.7 266.7,1068.3 273.5,1068.3 277,1074.7 273.5,1081.1 266.7,1081.1" fill="#76f176"/>
<polygon points="279.82,1074.7 283.32,1068.3 290.12,1068.3 293.62,1074.7 290.12,1081.1 283.32,1081.1" fill="#f4f476"/>
<polygon points="292.68,1074.7 300.08,1068.3 303.78,1068.3 311.18,1074.7 303.78,1081.1 300.08,1081.1" fill="#f677f6"/>
<polygon points="315.31,1074.7 318.81,1068.3 325.61,1068.3 329.11,1074.7 325.61,1081.1 318.81,1081.1" fill="#76f176"/>
<polygon points="333.17,1074.7 336.67,1068.3 343.47,1068.3 346.97,1074.7 343.47,1081.1 336.67,1081.1" fill="#f4f476"/>
<polygon points="345.66,1074.7 353.06,1068.3 356.76,1068.3 364.16,1074.7 356.76,1081.1 353.06,1081.1" fill="#f677f6"/>
<polygon points="89.53,1089.9 93.03,1083.5 99.83,1083.5 103.33,1089.9 99.83,1096.3 93.03,1096.3" fill="#f4f476"/>
<polygon points="102.41,1089.9 109.81,1083.5 113.51,1083.5 120.91,1089.9 113.51,1096.3 109.81,1096.3" fill="#f677f6"/>
<polygon points="124.83,1089.9 128.33,1083.5 135.13,1083.5 138.63,1089.9 135.13,1096.3 128.33,1096.3" fill="#76f176"/>
<polygon points="142.75,1089.9 146.25,1083.5 153.05,1083.5 156.55,1089.9 153.05,1096.3 146.25,1096.3" fill="#f4f476"/>
<polygon points="155.5,1089.9 162.9,1083.5 166.6,1083.5 174,1089.9 166.6,1096.3 162.9,1096.3" fill="#f677f6"/>
<polygon points="178.23,1089.9 181.73,1083.5 188.53,1083.5 192.03,1089.9 188.53,1096.3 181.73,1096.3" fill="#76f176"/>
<polygon points="197.34,1089.9 200.84,1083.5 207.64,1083.5 211.14,1089.9 207.64,1096.3 200.84,1096.3" fill="#f4f476"/>
<polygon points="210.46,1089.9 217.86,1083.5 221.56,1083.5 228.96,1089.9 221.56,1096.3 217.86,1096.3" fill="#f677f6"/>
<polygon points="232.76,1089.9 236.26,1083.5 243.06,1083.5 246.56,1089.9 243.06,1096.3 236.26,1096.3" fill="#76f176"/>
<polygon points="249.41,1089.9 252.91,1083.5 259.71,1083.5 263.21,1089.9 259.71,1096.3 252.91,1096.3" fill="#f4f476"/>
<polygon points="262.17,1089.9 269.57,1083.5 273.27,1083.5 280.67,1089.9 273.27,1096.3 269.57,1096.3" fill="#f677f6"/>
<polygon points="286.3,1089.9 289.8,1083.5 296.6,1083.5 300.1,1089.9 296.6,1096.3 289.8,1096.3" fill="#76f176"/>
<polygon points="302.79,1089.9 306.29,1083.5 313.09,1083.5 316.59,1089.9 313.09,1096.3 306.29,1096.3" fill="#f4f476"/>
<polygon points="316.75,1089.9 324.15,1083.5 327.85,1083.5 335.25,1089.9 327.85,1096.3 324.15,1096.3" fill="#f677f6"/>
<polygon points="339.48,1089.9 342.98,1083.5 349.78,1083.5 353.28,1089.9 349.78,1096.3 342.98,1096.3" fill="#76f176"/>
<polygon points="340.9,985.2 344.4,978.8 351.2,978.8 354.7,985.2 351.2,991.6 344.4,991.6" fill="#f4f476"/>
<polygon points="355.05,985.2 362.45,978.8 366.15,978.8 373.55,985.2 366.15,991.6 362.45,991.6" fill="#f677f6"/>
<polygon points="378.2,985.2 381.7,978.8 388.5,978.8 392,985.2 388.5,991.6 381.7,991.6" fill="#76f176"/>
<polygon points="447.8,985.2 451.3,978.8 458.1,978.8 461.6,985.2 458.1,991.6 451.3,991.6" fill="#f4f476"/>
<polygon points="466.3,985.2 469.8,978.8 476.6,978.8 480.1,985.2 476.6,991.6 469.8,991.6" fill="#f0b868"/>
<polygon points="749.9,985.2 753.4,978.8 760.2,978.8 763.7,985.2 760.2,991.6 753.4,991.6" fill="#76f176"/>
<polygon points="766,985.2 769.5,978.8 776.3,978.8 779.8,985.2 776.3,991.6 769.5,991.6" fill="#f4f476"/>
<polygon points="798.15,985.2 805.55,978.8 809.25,978.8 816.65,985.2 809.25,991.6 805.55,991.6" fill="#f677f6"/>
<polygon points="807.3,985.2 810.8,978.8 817.6,978.8 821.1,985.2 817.6,991.6 810.8,991.6" fill="#76f176"/>
<polygon points="821.3,985.2 824.8,978.8 831.6,978.8 835.1,985.2 831.6,991.6 824.8,991.6" fill="#f4f476"/>
<polygon points="835.05,985.2 842.45,978.8 846.15,978.8 853.55,985.2 846.15,991.6 842.45,991.6" fill="#f677f6"/>
<polygon points="361.9,1000 365.4,993.6 372.2,993.6 375.7,1000 372.2,1006.4 365.4,1006.4" fill="#76f176"/>
<polygon points="380.3,1000 383.8,993.6 390.6,993.6 394.1,1000 390.6,1006.4 383.8,1006.4" fill="#f4f476"/>
<polygon points="393.95,1000 401.35,993.6 405.05,993.6 412.45,1000 405.05,1006.4 401.35,1006.4" fill="#f677f6"/>
<polygon points="416.3,1000 419.8,993.6 426.6,993.6 430.1,1000 426.6,1006.4 419.8,1006.4" fill="#76f176"/>
<polygon points="432.7,1000 436.2,993.6 443,993.6 446.5,1000 443,1006.4 436.2,1006.4" fill="#f4f476"/>
<polygon points="446.45,1000 453.85,993.6 457.55,993.6 464.95,1000 457.55,1006.4 453.85,1006.4" fill="#f677f6"/>
<polygon points="468.2,1000 471.7,993.6 478.5,993.6 482,1000 478.5,1006.4 471.7,1006.4" fill="#76f176"/>
<polygon points="486.3,1000 489.8,993.6 496.6,993.6 500.1,1000 496.6,1006.4 489.8,1006.4" fill="#f4f476"/>
<polygon points="502.85,1000 510.25,993.6 513.95,993.6 521.35,1000 513.95,1006.4 510.25,1006.4" fill="#f677f6"/>
<polygon points="524.6,1000 528.1,993.6 534.9,993.6 538.4,1000 534.9,1006.4 528.1,1006.4" fill="#76f176"/>
<polygon points="537.3,1000 540.8,993.6 547.6,993.6 551.1,1000 547.6,1006.4 540.8,1006.4" fill="#f4f476"/>
<polygon points="550.45,1000 557.85,993.6 561.55,993.6 568.95,1000 561.55,1006.4 557.85,1006.4" fill="#f677f6"/>
<polygon points="572.6,1000 576.1,993.6 582.9,993.6 586.4,1000 582.9,1006.4 576.1,1006.4" fill="#76f176"/>
<polygon points="590.7,1000 594.2,993.6 601,993.6 604.5,1000 601,1006.4 594.2,1006.4" fill="#f4f476"/>
<polygon points="605.3,1000 608.8,993.6 615.6,993.6 619.1,1000 615.6,1006.4 608.8,1006.4" fill="#f0b868"/>
<polygon points="634.5,1000 638,993.6 644.8,993.6 648.3,1000 644.8,1006.4 638,1006.4" fill="#76f176"/>
<polygon points="647.1,1000 650.6,993.6 657.4,993.6 660.9,1000 657.4,1006.4 650.6,1006.4" fill="#f4f476"/>
<polygon points="661.25,1000 668.65,993.6 672.35,993.6 679.75,1000 672.35,1006.4 668.65,1006.4" fill="#f677f6"/>
<polygon points="682.4,1000 685.9,993.6 692.7,993.6 696.2,1000 692.7,1006.4 685.9,1006.4" fill="#76f176"/>
<polygon points="695.5,1000 699,993.6 705.8,993.6 709.3,1000 705.8,1006.4 699,1006.4" fill="#f4f476"/>
<polygon points="709.65,1000 717.05,993.6 720.75,993.6 728.15,1000 720.75,1006.4 717.05,1006.4" fill="#f677f6"/>
<polygon points="731.4,1000 734.9,993.6 741.7,993.6 745.2,1000 741.7,1006.4 734.9,1006.4" fill="#76f176"/>
<polygon points="744.1,1000 747.6,993.6 754.4,993.6 757.9,1000 754.4,1006.4 747.6,1006.4" fill="#f4f476"/>
<polygon points="758.25,1000 765.65,993.6 769.35,993.6 776.75,1000 769.35,1006.4 765.65,1006.4" fill="#f677f6"/>
<polygon points="781,1000 784.5,993.6 791.3,993.6 794.8,1000 791.3,1006.4 784.5,1006.4" fill="#76f176"/>
<polygon points="797.1,1000 800.6,993.6 807.4,993.6 810.9,1000 807.4,1006.4 800.6,1006.4" fill="#f4f476"/>
<polygon points="810.75,1000 818.15,993.6 821.85,993.6 829.25,1000 821.85,1006.4 818.15,1006.4" fill="#f677f6"/>
<polygon points="346.7,1014.8 350.2,1008.4 357,1008.4 360.5,1014.8 357,1021.2 350.2,1021.2" fill="#76f176"/>
<polygon points="363.2,1014.8 366.7,1008.4 373.5,1008.4 377,1014.8 373.5,1021.2 366.7,1021.2" fill="#f4f476"/>
<polygon points="377.45,1014.8 384.85,1008.4 388.55,1008.4 395.95,1014.8 388.55,1021.2 384.85,1021.2" fill="#f677f6"/>
<polygon points="400.2,1014.8 403.7,1008.4 410.5,1008.4 414,1014.8 410.5,1021.2 403.7,1021.2" fill="#76f176"/>
<polygon points="416.7,1014.8 420.2,1008.4 427,1008.4 430.5,1014.8 427,1021.2 420.2,1021.2" fill="#f4f476"/>
<polygon points="430.85,1014.8 438.25,1008.4 441.95,1008.4 449.35,1014.8 441.95,1021.2 438.25,1021.2" fill="#f677f6"/>
<polygon points="452.7,1014.8 456.2,1008.4 463,1008.4 466.5,1014.8 463,1021.2 456.2,1021.2" fill="#76f176"/>
<polygon points="471.5,1014.8 475,1008.4 481.8,1008.4 485.3,1014.8 481.8,1021.2 475,1021.2" fill="#f4f476"/>
<polygon points="490.75,1014.8 498.15,1008.4 501.85,1008.4 509.25,1014.8 501.85,1021.2 498.15,1021.2" fill="#f677f6"/>
<polygon points="500.3,1014.8 503.8,1008.4 510.6,1008.4 514.1,1014.8 510.6,1021.2 503.8,1021.2" fill="#76f176"/>
<polygon points="520.7,1014.8 524.2,1008.4 531,1008.4 534.5,1014.8 531,1021.2 524.2,1021.2" fill="#f4f476"/>
<polygon points="534.95,1014.8 542.35,1008.4 546.05,1008.4 553.45,1014.8 546.05,1021.2 542.35,1021.2" fill="#f677f6"/>
<polygon points="556.7,1014.8 560.2,1008.4 567,1008.4 570.5,1014.8 567,1021.2 560.2,1021.2" fill="#76f176"/>
<polygon points="570.3,1014.8 573.8,1008.4 580.6,1008.4 584.1,1014.8 580.6,1021.2 573.8,1021.2" fill="#f4f476"/>
<polygon points="583.55,1014.8 590.95,1008.4 594.65,1008.4 602.05,1014.8 594.65,1021.2 590.95,1021.2" fill="#f677f6"/>
<polygon points="605.3,1014.8 608.8,1008.4 615.6,1008.4 619.1,1014.8 615.6,1021.2 608.8,1021.2" fill="#76f176"/>
<polygon points="618,1014.8 621.5,1008.4 628.3,1008.4 631.8,1014.8 628.3,1021.2 621.5,1021.2" fill="#f4f476"/>
<polygon points="639.95,1014.8 647.35,1008.4 651.05,1008.4 658.45,1014.8 651.05,1021.2 647.35,1021.2" fill="#f677f6"/>
<polygon points="652,1014.8 655.5,1008.4 662.3,1008.4 665.8,1014.8 662.3,1021.2 655.5,1021.2" fill="#76f176"/>
<polygon points="669.5,1014.8 673,1008.4 679.8,1008.4 683.3,1014.8 679.8,1021.2 673,1021.2" fill="#f4f476"/>
<polygon points="683.8,1014.8 687.3,1008.4 694.1,1008.4 697.6,1014.8 694.1,1021.2 687.3,1021.2" fill="#f0b868"/>
<polygon points="751.8,1014.8 755.3,1008.4 762.1,1008.4 765.6,1014.8 762.1,1021.2 755.3,1021.2" fill="#76f176"/>
<polygon points="790.7,1014.8 794.2,1008.4 801,1008.4 804.5,1014.8 801,1021.2 794.2,1021.2" fill="#f4f476"/>
<polygon points="817.75,1014.8 825.15,1008.4 828.85,1008.4 836.25,1014.8 828.85,1021.2 825.15,1021.2" fill="#f677f6"/>
<polygon points="826.7,1014.8 830.2,1008.4 837,1008.4 840.5,1014.8 837,1021.2 830.2,1021.2" fill="#76f176"/>
<polygon points="839.3,1014.8 842.8,1008.4 849.6,1008.4 853.1,1014.8 849.6,1021.2 842.8,1021.2" fill="#f4f476"/>
<polygon points="867.55,1014.8 874.95,1008.4 878.65,1008.4 886.05,1014.8 878.65,1021.2 874.95,1021.2" fill="#f677f6"/>
<polygon points="354.5,1030 358,1023.6 364.8,1023.6 368.3,1030 364.8,1036.4 358,1036.4" fill="#76f176"/>
<polygon points="371,1030 374.5,1023.6 381.3,1023.6 384.8,1030 381.3,1036.4 374.5,1036.4" fill="#f4f476"/>
<polygon points="385.15,1030 392.55,1023.6 396.25,1023.6 403.65,1030 396.25,1036.4 392.55,1036.4" fill="#f677f6"/>
<polygon points="408,1030 411.5,1023.6 418.3,1023.6 421.8,1030 418.3,1036.4 411.5,1036.4" fill="#76f176"/>
<polygon points="425.5,1030 429,1023.6 435.8,1023.6 439.3,1030 435.8,1036.4 429,1036.4" fill="#f4f476"/>
<polygon points="440.65,1030 448.05,1023.6 451.75,1023.6 459.15,1030 451.75,1036.4 448.05,1036.4" fill="#f677f6"/>
<polygon points="460.5,1030 464,1023.6 470.8,1023.6 474.3,1030 470.8,1036.4 464,1036.4" fill="#76f176"/>
<polygon points="478,1030 481.5,1023.6 488.3,1023.6 491.8,1030 488.3,1036.4 481.5,1036.4" fill="#f4f476"/>
<polygon points="492.15,1030 499.55,1023.6 503.25,1023.6 510.65,1030 503.25,1036.4 499.55,1036.4" fill="#f677f6"/>
<polygon points="513.9,1030 517.4,1023.6 524.2,1023.6 527.7,1030 524.2,1036.4 517.4,1036.4" fill="#76f176"/>
<polygon points="527.5,1030 531,1023.6 537.8,1023.6 541.3,1030 537.8,1036.4 531,1036.4" fill="#f4f476"/>
<polygon points="541.75,1030 549.15,1023.6 552.85,1023.6 560.25,1030 552.85,1036.4 549.15,1036.4" fill="#f677f6"/>
<polygon points="563.5,1030 567,1023.6 573.8,1023.6 577.3,1030 573.8,1036.4 567,1036.4" fill="#76f176"/>
<polygon points="576.1,1030 579.6,1023.6 586.4,1023.6 589.9,1030 586.4,1036.4 579.6,1036.4" fill="#f4f476"/>
<polygon points="590.35,1030 597.75,1023.6 601.45,1023.6 608.85,1030 601.45,1036.4 597.75,1036.4" fill="#f677f6"/>
<polygon points="612.1,1030 615.6,1023.6 622.4,1023.6 625.9,1030 622.4,1036.4 615.6,1036.4" fill="#76f176"/>
<polygon points="624.8,1030 628.3,1023.6 635.1,1023.6 638.6,1030 635.1,1036.4 628.3,1036.4" fill="#f4f476"/>
<polygon points="646.75,1030 654.15,1023.6 657.85,1023.6 665.25,1030 657.85,1036.4 654.15,1036.4" fill="#f677f6"/>
<polygon points="655.7,1030 659.2,1023.6 666,1023.6 669.5,1030 666,1036.4 659.2,1036.4" fill="#76f176"/>
<polygon points="677.3,1030 680.8,1023.6 687.6,1023.6 691.1,1030 687.6,1036.4 680.8,1036.4" fill="#f4f476"/>
<polygon points="678.9,1030 682.4,1023.6 689.2,1023.6 692.7,1030 689.2,1036.4 682.4,1036.4" fill="#f4f476"/>
<polygon points="712.5,1030 720.1,1023.6 723.9,1023.6 731.5,1030 723.9,1036.4 720.1,1036.4" fill="#f040f0"/>
<polygon points="723.5,1030 731.1,1023.6 734.9,1023.6 742.5,1030 734.9,1036.4 731.1,1036.4" fill="#f040f0"/>
<polygon points="735.5,1030 743.1,1023.6 746.9,1023.6 754.5,1030 746.9,1036.4 743.1,1036.4" fill="#f040f0"/>
<polygon points="747.5,1030 755.1,1023.6 758.9,1023.6 766.5,1030 758.9,1036.4 755.1,1036.4" fill="#f040f0"/>
<polygon points="759.5,1030 767.1,1023.6 770.9,1023.6 778.5,1030 770.9,1036.4 767.1,1036.4" fill="#f040f0"/>
<polygon points="771.5,1030 779.1,1023.6 782.9,1023.6 790.5,1030 782.9,1036.4 779.1,1036.4" fill="#f040f0"/>
<polygon points="780.5,1030 788.1,1023.6 791.9,1023.6 799.5,1030 791.9,1036.4 788.1,1036.4" fill="#f040f0"/>
<polygon points="792.1,1030 795.6,1023.6 802.4,1023.6 805.9,1030 802.4,1036.4 795.6,1036.4" fill="#76f176"/>
<polygon points="806.3,1030 809.8,1023.6 816.6,1023.6 820.1,1030 816.6,1036.4 809.8,1036.4" fill="#f4f476"/>
<polygon points="821.45,1030 828.85,1023.6 832.55,1023.6 839.95,1030 832.55,1036.4 828.85,1036.4" fill="#f677f6"/>
<polygon points="350.6,1044.9 354.1,1038.5 360.9,1038.5 364.4,1044.9 360.9,1051.3 354.1,1051.3" fill="#f4f476"/>
<polygon points="363.85,1044.9 371.25,1038.5 374.95,1038.5 382.35,1044.9 374.95,1051.3 371.25,1051.3" fill="#f677f6"/>
<polygon points="385.6,1044.9 389.1,1038.5 395.9,1038.5 399.4,1044.9 395.9,1051.3 389.1,1051.3" fill="#76f176"/>
<polygon points="402.1,1044.9 405.6,1038.5 412.4,1038.5 415.9,1044.9 412.4,1051.3 405.6,1051.3" fill="#f4f476"/>
<polygon points="416.35,1044.9 423.75,1038.5 427.45,1038.5 434.85,1044.9 427.45,1051.3 423.75,1051.3" fill="#f677f6"/>
<polygon points="438.1,1044.9 441.6,1038.5 448.4,1038.5 451.9,1044.9 448.4,1051.3 441.6,1051.3" fill="#76f176"/>
<polygon points="455.2,1044.9 458.7,1038.5 465.5,1038.5 469,1044.9 465.5,1051.3 458.7,1051.3" fill="#f4f476"/>
<polygon points="485.75,1044.9 493.15,1038.5 496.85,1038.5 504.25,1044.9 496.85,1051.3 493.15,1051.3" fill="#f677f6"/>
<polygon points="494.5,1044.9 498,1038.5 504.8,1038.5 508.3,1044.9 504.8,1051.3 498,1051.3" fill="#76f176"/>
<polygon points="510.1,1044.9 513.6,1038.5 520.4,1038.5 523.9,1044.9 520.4,1051.3 513.6,1051.3" fill="#f4f476"/>
<polygon points="524.25,1044.9 531.65,1038.5 535.35,1038.5 542.75,1044.9 535.35,1051.3 531.65,1051.3" fill="#f677f6"/>
<polygon points="545.1,1044.9 548.6,1038.5 555.4,1038.5 558.9,1044.9 555.4,1051.3 548.6,1051.3" fill="#76f176"/>
<polygon points="558.7,1044.9 562.2,1038.5 569,1038.5 572.5,1044.9 569,1051.3 562.2,1051.3" fill="#f4f476"/>
<polygon points="571.85,1044.9 579.25,1038.5 582.95,1038.5 590.35,1044.9 582.95,1051.3 579.25,1051.3" fill="#f677f6"/>
<polygon points="593.6,1044.9 597.1,1038.5 603.9,1038.5 607.4,1044.9 603.9,1051.3 597.1,1051.3" fill="#76f176"/>
<polygon points="607.3,1044.9 610.8,1038.5 617.6,1038.5 621.1,1044.9 617.6,1051.3 610.8,1051.3" fill="#f4f476"/>
<polygon points="633.75,1044.9 641.15,1038.5 644.85,1038.5 652.25,1044.9 644.85,1051.3 641.15,1051.3" fill="#f677f6"/>
<polygon points="643.2,1044.9 646.7,1038.5 653.5,1038.5 657,1044.9 653.5,1051.3 646.7,1051.3" fill="#76f176"/>
<polygon points="656.8,1044.9 660.3,1038.5 667.1,1038.5 670.6,1044.9 667.1,1051.3 660.3,1051.3" fill="#f4f476"/>
<polygon points="671.4,1044.9 674.9,1038.5 681.7,1038.5 685.2,1044.9 681.7,1051.3 674.9,1051.3" fill="#f0b868"/>
<polygon points="700.3,1044.9 703.8,1038.5 710.6,1038.5 714.1,1044.9 710.6,1051.3 703.8,1051.3" fill="#76f176"/>
<polygon points="713.5,1044.9 717,1038.5 723.8,1038.5 727.3,1044.9 723.8,1051.3 717,1051.3" fill="#f4f476"/>
<polygon points="726.75,1044.9 734.15,1038.5 737.85,1038.5 745.25,1044.9 737.85,1051.3 734.15,1051.3" fill="#f677f6"/>
<polygon points="750.5,1044.9 754,1038.5 760.8,1038.5 764.3,1044.9 760.8,1051.3 754,1051.3" fill="#76f176"/>
<polygon points="771.9,1044.9 775.4,1038.5 782.2,1038.5 785.7,1044.9 782.2,1051.3 775.4,1051.3" fill="#f4f476"/>
<polygon points="805.85,1044.9 813.25,1038.5 816.95,1038.5 824.35,1044.9 816.95,1051.3 813.25,1051.3" fill="#f677f6"/>
<polygon points="394.3,1059.8 397.8,1053.4 404.6,1053.4 408.1,1059.8 404.6,1066.2 397.8,1066.2" fill="#f4f476"/>
<polygon points="409.45,1059.8 416.85,1053.4 420.55,1053.4 427.95,1059.8 420.55,1066.2 416.85,1066.2" fill="#f677f6"/>
<polygon points="431.3,1059.8 434.8,1053.4 441.6,1053.4 445.1,1059.8 441.6,1066.2 434.8,1066.2" fill="#76f176"/>
<polygon points="504.2,1059.8 507.7,1053.4 514.5,1053.4 518,1059.8 514.5,1066.2 507.7,1066.2" fill="#f4f476"/>
<polygon points="518.35,1059.8 525.75,1053.4 529.45,1053.4 536.85,1059.8 529.45,1066.2 525.75,1066.2" fill="#f677f6"/>
<polygon points="559.6,1059.8 563.1,1053.4 569.9,1053.4 573.4,1059.8 569.9,1066.2 563.1,1066.2" fill="#76f176"/>
<polygon points="583.9,1059.8 587.4,1053.4 594.2,1053.4 597.7,1059.8 594.2,1066.2 587.4,1066.2" fill="#f4f476"/>
<polygon points="600.5,1059.8 604,1053.4 610.8,1053.4 614.3,1059.8 610.8,1066.2 604,1066.2" fill="#f0b868"/>
<polygon points="745,1059.8 748.5,1053.4 755.3,1053.4 758.8,1059.8 755.3,1066.2 748.5,1066.2" fill="#76f176"/>
<polygon points="759.6,1059.8 763.1,1053.4 769.9,1053.4 773.4,1059.8 769.9,1066.2 763.1,1066.2" fill="#f4f476"/>
<polygon points="788.75,1059.8 796.15,1053.4 799.85,1053.4 807.25,1059.8 799.85,1066.2 796.15,1066.2" fill="#f677f6"/>
<polygon points="798.5,1059.8 802,1053.4 808.8,1053.4 812.3,1059.8 808.8,1066.2 802,1066.2" fill="#76f176"/>
<polygon points="812.1,1059.8 815.6,1053.4 822.4,1053.4 825.9,1059.8 822.4,1066.2 815.6,1066.2" fill="#f4f476"/>
<polygon points="825.95,1059.8 833.35,1053.4 837.05,1053.4 844.45,1059.8 837.05,1066.2 833.35,1066.2" fill="#f677f6"/>
<polygon points="848.1,1059.8 851.6,1053.4 858.4,1053.4 861.9,1059.8 858.4,1066.2 851.6,1066.2" fill="#76f176"/>
<polygon points="860.1,1059.8 863.6,1053.4 870.4,1053.4 873.9,1059.8 870.4,1066.2 863.6,1066.2" fill="#f4f476"/>
<polygon points="873.95,1059.8 881.35,1053.4 885.05,1053.4 892.45,1059.8 885.05,1066.2 881.35,1066.2" fill="#f677f6"/>
<polygon points="895.7,1059.8 899.2,1053.4 906,1053.4 909.5,1059.8 906,1066.2 899.2,1066.2" fill="#76f176"/>
<polygon points="909.3,1059.8 912.8,1053.4 919.6,1053.4 923.1,1059.8 919.6,1066.2 912.8,1066.2" fill="#f4f476"/>
<polygon points="923.15,1059.8 930.55,1053.4 934.25,1053.4 941.65,1059.8 934.25,1066.2 930.55,1066.2" fill="#f677f6"/>
<polygon points="347.25,1074.7 354.65,1068.3 358.35,1068.3 365.75,1074.7 358.35,1081.1 354.65,1081.1" fill="#f677f6"/>
<polygon points="369.1,1074.7 372.6,1068.3 379.4,1068.3 382.9,1074.7 379.4,1081.1 372.6,1081.1" fill="#76f176"/>
<polygon points="386.6,1074.7 390.1,1068.3 396.9,1068.3 400.4,1074.7 396.9,1081.1 390.1,1081.1" fill="#f4f476"/>
<polygon points="400.75,1074.7 408.15,1068.3 411.85,1068.3 419.25,1074.7 411.85,1081.1 408.15,1081.1" fill="#f677f6"/>
<polygon points="422.5,1074.7 426,1068.3 432.8,1068.3 436.3,1074.7 432.8,1081.1 426,1081.1" fill="#76f176"/>
<polygon points="442,1074.7 445.5,1068.3 452.3,1068.3 455.8,1074.7 452.3,1081.1 445.5,1081.1" fill="#f4f476"/>
<polygon points="455.15,1074.7 462.55,1068.3 466.25,1068.3 473.65,1074.7 466.25,1081.1 462.55,1081.1" fill="#f677f6"/>
<polygon points="477,1074.7 480.5,1068.3 487.3,1068.3 490.8,1074.7 487.3,1081.1 480.5,1081.1" fill="#76f176"/>
<polygon points="493.5,1074.7 497,1068.3 503.8,1068.3 507.3,1074.7 503.8,1081.1 497,1081.1" fill="#f4f476"/>
<polygon points="508.65,1074.7 516.05,1068.3 519.75,1068.3 527.15,1074.7 519.75,1081.1 516.05,1081.1" fill="#f677f6"/>
<polygon points="529.5,1074.7 533,1068.3 539.8,1068.3 543.3,1074.7 539.8,1081.1 533,1081.1" fill="#76f176"/>
<polygon points="543.1,1074.7 546.6,1068.3 553.4,1068.3 556.9,1074.7 553.4,1081.1 546.6,1081.1" fill="#f4f476"/>
<polygon points="557.25,1074.7 564.65,1068.3 568.35,1068.3 575.75,1074.7 568.35,1081.1 564.65,1081.1" fill="#f677f6"/>
<polygon points="578.5,1074.7 582,1068.3 588.8,1068.3 592.3,1074.7 588.8,1081.1 582,1081.1" fill="#76f176"/>
<polygon points="600.5,1074.7 604,1068.3 610.8,1068.3 614.3,1074.7 610.8,1081.1 604,1081.1" fill="#f4f476"/>
<polygon points="615,1074.7 618.5,1068.3 625.3,1068.3 628.8,1074.7 625.3,1081.1 618.5,1081.1" fill="#f0b868"/>
<polygon points="645.2,1074.7 648.7,1068.3 655.5,1068.3 659,1074.7 655.5,1081.1 648.7,1081.1" fill="#76f176"/>
<polygon points="662.7,1074.7 666.2,1068.3 673,1068.3 676.5,1074.7 673,1081.1 666.2,1081.1" fill="#f4f476"/>
<polygon points="701.75,1074.7 709.15,1068.3 712.85,1068.3 720.25,1074.7 712.85,1081.1 709.15,1081.1" fill="#f677f6"/>
<polygon points="711,1074.7 714.5,1068.3 721.3,1068.3 724.8,1074.7 721.3,1081.1 714.5,1081.1" fill="#76f176"/>
<polygon points="724.6,1074.7 728.1,1068.3 734.9,1068.3 738.4,1074.7 734.9,1081.1 728.1,1081.1" fill="#f4f476"/>
<polygon points="738.75,1074.7 746.15,1068.3 749.85,1068.3 757.25,1074.7 749.85,1081.1 746.15,1081.1" fill="#f677f6"/>
<polygon points="760.6,1074.7 764.1,1068.3 770.9,1068.3 774.4,1074.7 770.9,1081.1 764.1,1081.1" fill="#76f176"/>
<polygon points="778.1,1074.7 781.6,1068.3 788.4,1068.3 791.9,1074.7 788.4,1081.1 781.6,1081.1" fill="#f4f476"/>
<polygon points="795.15,1074.7 802.55,1068.3 806.25,1068.3 813.65,1074.7 806.25,1081.1 802.55,1081.1" fill="#f677f6"/>
<polygon points="814.1,1074.7 817.6,1068.3 824.4,1068.3 827.9,1074.7 824.4,1081.1 817.6,1081.1" fill="#76f176"/>
<polygon points="827.7,1074.7 831.2,1068.3 838,1068.3 841.5,1074.7 838,1081.1 831.2,1081.1" fill="#f4f476"/>
<polygon points="845.8,1074.7 849.3,1068.3 856.1,1068.3 859.6,1074.7 856.1,1081.1 849.3,1081.1" fill="#f0b868"/>
<polygon points="874.3,1074.7 877.8,1068.3 884.6,1068.3 888.1,1074.7 884.6,1081.1 877.8,1081.1" fill="#76f176"/>
<polygon points="887,1074.7 890.5,1068.3 897.3,1068.3 900.8,1074.7 897.3,1081.1 890.5,1081.1" fill="#f4f476"/>
<polygon points="901.15,1074.7 908.55,1068.3 912.25,1068.3 919.65,1074.7 912.25,1081.1 908.55,1081.1" fill="#f677f6"/>
<polygon points="923.5,1074.7 927,1068.3 933.8,1068.3 937.3,1074.7 933.8,1081.1 927,1081.1" fill="#76f176"/>
<polygon points="935.6,1074.7 939.1,1068.3 945.9,1068.3 949.4,1074.7 945.9,1081.1 939.1,1081.1" fill="#f4f476"/>
<polygon points="948.75,1074.7 956.15,1068.3 959.85,1068.3 967.25,1074.7 959.85,1081.1 956.15,1081.1" fill="#f677f6"/>
<polygon points="356.4,1089.9 359.9,1083.5 366.7,1083.5 370.2,1089.9 366.7,1096.3 359.9,1096.3" fill="#f4f476"/>
<polygon points="371.55,1089.9 378.95,1083.5 382.65,1083.5 390.05,1089.9 382.65,1096.3 378.95,1096.3" fill="#f677f6"/>
<polygon points="392.4,1089.9 395.9,1083.5 402.7,1083.5 406.2,1089.9 402.7,1096.3 395.9,1096.3" fill="#76f176"/>
<polygon points="410.9,1089.9 414.4,1083.5 421.2,1083.5 424.7,1089.9 421.2,1096.3 414.4,1096.3" fill="#f4f476"/>
<polygon points="425.05,1089.9 432.45,1083.5 436.15,1083.5 443.55,1089.9 436.15,1096.3 432.45,1096.3" fill="#f677f6"/>
<polygon points="446.8,1089.9 450.3,1083.5 457.1,1083.5 460.6,1089.9 457.1,1096.3 450.3,1096.3" fill="#76f176"/>
<polygon points="463,1089.9 466.5,1083.5 473.3,1083.5 476.8,1089.9 473.3,1096.3 466.5,1096.3" fill="#f4f476"/>
<polygon points="513.55,1089.9 520.95,1083.5 524.65,1083.5 532.05,1089.9 524.65,1096.3 520.95,1096.3" fill="#f677f6"/>
<polygon points="171.23,1044.9 175.03,1038.3 182.43,1038.3 186.23,1044.9 182.43,1051.5 175.03,1051.5" fill="none" stroke="#dd2020" stroke-width="3"/>
<polygon points="187.65,1044.9 191.45,1038.3 198.85,1038.3 202.65,1044.9 198.85,1051.5 191.45,1051.5" fill="none" stroke="#dd2020" stroke-width="3"/>
<polygon points="201.54,1044.9 207.54,1038.3 213.54,1038.3 219.54,1044.9 213.54,1051.5 207.54,1051.5" fill="none" stroke="#dd2020" stroke-width="3"/>
<rect x="59.9" y="934.2" width="288.1" height="179.4" fill="#808080" fill-opacity="0.39"/>
</g>
<rect x="45" y="1120" width="970" height="1.6" fill="#1b1b1b"/>
<rect x="44.5" y="1120" width="1.6" height="11" fill="#1b1b1b"/>
<text x="39.31" y="1154.2" font-size="19.2"  fill="#1b1b1b" stroke="#1b1b1b" stroke-width="0.25" textLength="11.96" lengthAdjust="spacingAndGlyphs">0</text>
<rect x="95.42" y="1120" width="1.5" height="5.6" fill="#1b1b1b"/>
<rect x="146.3" y="1120" width="1.5" height="5.6" fill="#1b1b1b"/>
<rect x="197.18" y="1120" width="1.5" height="5.6" fill="#1b1b1b"/>
<rect x="248" y="1120" width="1.6" height="11" fill="#1b1b1b"/>
<text x="230.88" y="1154.2" font-size="19.2"  fill="#1b1b1b" stroke="#1b1b1b" stroke-width="0.25" textLength="35.88" lengthAdjust="spacingAndGlyphs">200</text>
<rect x="298.93" y="1120" width="1.5" height="5.6" fill="#1b1b1b"/>
<rect x="349.8" y="1120" width="1.5" height="5.6" fill="#1b1b1b"/>
<rect x="400.68" y="1120" width="1.5" height="5.6" fill="#1b1b1b"/>
<rect x="451.5" y="1120" width="1.6" height="11" fill="#1b1b1b"/>
<text x="434.38" y="1154.2" font-size="19.2"  fill="#1b1b1b" stroke="#1b1b1b" stroke-width="0.25" textLength="35.88" lengthAdjust="spacingAndGlyphs">400</text>
<rect x="502.43" y="1120" width="1.5" height="5.6" fill="#1b1b1b"/>
<rect x="553.3" y="1120" width="1.5" height="5.6" fill="#1b1b1b"/>
<rect x="604.17" y="1120" width="1.5" height="5.6" fill="#1b1b1b"/>
<rect x="655" y="1120" width="1.6" height="11" fill="#1b1b1b"/>
<text x="637.88" y="1154.2" font-size="19.2"  fill="#1b1b1b" stroke="#1b1b1b" stroke-width="0.25" textLength="35.88" lengthAdjust="spacingAndGlyphs">600</text>
<rect x="705.92" y="1120" width="1.5" height="5.6" fill="#1b1b1b"/>
<rect x="756.8" y="1120" width="1.5" height="5.6" fill="#1b1b1b"/>
<rect x="807.67" y="1120" width="1.5" height="5.6" fill="#1b1b1b"/>
<rect x="858.5" y="1120" width="1.6" height="11" fill="#1b1b1b"/>
<text x="841.38" y="1154.2" font-size="19.2"  fill="#1b1b1b" stroke="#1b1b1b" stroke-width="0.25" textLength="35.88" lengthAdjust="spacingAndGlyphs">800</text>
<rect x="909.43" y="1120" width="1.5" height="5.6" fill="#1b1b1b"/>
<rect x="960.3" y="1120" width="1.5" height="5.6" fill="#1b1b1b"/>
<rect x="1011.18" y="1120" width="1.5" height="5.6" fill="#1b1b1b"/>
<rect x="1036.5" y="142.3" width="738" height="1010.7" fill="#fbfbfb" stroke="#c0c0c0" stroke-width="2"/>
<path d="M1036.5 142.3 V110.5 Q1036.5 107.7 1039.3 107.7 H1262.7 V142.3" fill="url(#gTabIn)" stroke="#c2c2c2" stroke-width="1.5"/>
<path d="M1450 142.3 V107.7 H1758.2 Q1761 107.7 1761 110.5 V142.3" fill="url(#gTabIn)" stroke="#c2c2c2" stroke-width="1.5"/>
<path d="M1262.7 143 V107.6 Q1262.7 104.6 1265.7 104.6 H1447 Q1450 104.6 1450 107.6 V143" fill="#fbfbfb" stroke="#c2c2c2" stroke-width="1.5"/>
<rect x="1263.5" y="140.5" width="185.7" height="3.5" fill="#fbfbfb"/>
<text x="1053.8" y="133.3" font-size="19.2"  fill="#1b1b1b" stroke="#1b1b1b" stroke-width="0.25" textLength="188.41" lengthAdjust="spacingAndGlyphs">Selected Transaction</text>
<text x="1280.7" y="131" font-size="19.2"  fill="#1b1b1b" stroke="#1b1b1b" stroke-width="0.25" textLength="149.32" lengthAdjust="spacingAndGlyphs">Latency Analysis</text>
<text x="1467.6" y="133.3" font-size="19.2"  fill="#1b1b1b" stroke="#1b1b1b" stroke-width="0.25" textLength="274.55" lengthAdjust="spacingAndGlyphs">Power and Bandwidth Analysis</text>
<rect x="1052.2" y="158.8" width="705.3" height="32.6" rx="3" fill="url(#gBtn)" stroke="#b9b9b9" stroke-width="1.5"/>
<text x="1343" y="183.1" font-size="19.2"  fill="#1b1b1b" stroke="#1b1b1b" stroke-width="0.25" textLength="123.72" lengthAdjust="spacingAndGlyphs">Start Analysis</text>
<rect x="1052.2" y="202.6" width="705.3" height="33" rx="3" fill="url(#gProg)" stroke="#23628f" stroke-width="1.5"/>
<text x="1380" y="225.8" font-size="19.2"  fill="#ffffff" stroke="#ffffff" stroke-width="0.25" textLength="50.21" lengthAdjust="spacingAndGlyphs">100%</text>
<rect x="1168" y="245.9" width="587.4" height="225" fill="#efefef"/>
<rect x="1168" y="245.9" width="587.4" height="2.6" fill="#a9a9a9"/>
<rect x="1168" y="245.9" width="2.2" height="225" fill="#a9a9a9"/>
<rect x="1162.4" y="254" width="1.6" height="211.4" fill="#1b1b1b"/>
<rect x="1151.3" y="463.85" width="12" height="1.5" fill="#1b1b1b"/>
<text x="1129.52" y="471.2" font-size="19.2"  fill="#1b1b1b" stroke="#1b1b1b" stroke-width="0.25" textLength="11.96" lengthAdjust="spacingAndGlyphs">0</text>
<rect x="1157.2" y="453.34" width="6" height="1.5" fill="#1b1b1b"/>
<rect x="1157.2" y="442.83" width="6" height="1.5" fill="#1b1b1b"/>
<rect x="1157.2" y="432.32" width="6" height="1.5" fill="#1b1b1b"/>
<rect x="1157.2" y="421.81" width="6" height="1.5" fill="#1b1b1b"/>
<rect x="1151.3" y="411.3" width="12" height="1.5" fill="#1b1b1b"/>
<text x="1111.6" y="418.65" font-size="19.2"  fill="#1b1b1b" stroke="#1b1b1b" stroke-width="0.25" textLength="29.89" lengthAdjust="spacingAndGlyphs">0.5</text>
<rect x="1157.2" y="400.79" width="6" height="1.5" fill="#1b1b1b"/>
<rect x="1157.2" y="390.28" width="6" height="1.5" fill="#1b1b1b"/>
<rect x="1157.2" y="379.77" width="6" height="1.5" fill="#1b1b1b"/>
<rect x="1157.2" y="369.26" width="6" height="1.5" fill="#1b1b1b"/>
<rect x="1151.3" y="358.75" width="12" height="1.5" fill="#1b1b1b"/>
<text x="1129.52" y="366.1" font-size="19.2"  fill="#1b1b1b" stroke="#1b1b1b" stroke-width="0.25" textLength="11.96" lengthAdjust="spacingAndGlyphs">1</text>
<rect x="1157.2" y="348.24" width="6" height="1.5" fill="#1b1b1b"/>
<rect x="1157.2" y="337.73" width="6" height="1.5" fill="#1b1b1b"/>
<rect x="1157.2" y="327.22" width="6" height="1.5" fill="#1b1b1b"/>
<rect x="1157.2" y="316.71" width="6" height="1.5" fill="#1b1b1b"/>
<rect x="1151.3" y="306.2" width="12" height="1.5" fill="#1b1b1b"/>
<text x="1111.6" y="313.55" font-size="19.2"  fill="#1b1b1b" stroke="#1b1b1b" stroke-width="0.25" textLength="29.89" lengthAdjust="spacingAndGlyphs">1.5</text>
<rect x="1157.2" y="295.69" width="6" height="1.5" fill="#1b1b1b"/>
<rect x="1157.2" y="285.18" width="6" height="1.5" fill="#1b1b1b"/>
<rect x="1157.2" y="274.67" width="6" height="1.5" fill="#1b1b1b"/>
<rect x="1157.2" y="264.16" width="6" height="1.5" fill="#1b1b1b"/>
<rect x="1151.3" y="253.65" width="12" height="1.5" fill="#1b1b1b"/>
<text x="1129.52" y="261" font-size="19.2"  fill="#1b1b1b" stroke="#1b1b1b" stroke-width="0.25" textLength="11.96" lengthAdjust="spacingAndGlyphs">2</text>
<rect x="1176.2" y="477" width="563.5" height="1.6" fill="#1b1b1b"/>
<rect x="1176.2" y="477" width="1.6" height="11.8" fill="#1b1b1b"/>
<text x="1171.01" y="512.2" font-size="19.2"  fill="#1b1b1b" stroke="#1b1b1b" stroke-width="0.25" textLength="11.96" lengthAdjust="spacingAndGlyphs">0</text>
<rect x="1198.72" y="477" width="1.5" height="5.6" fill="#1b1b1b"/>
<rect x="1221.19" y="477" width="1.5" height="5.6" fill="#1b1b1b"/>
<rect x="1243.67" y="477" width="1.5" height="5.6" fill="#1b1b1b"/>
<rect x="1266.14" y="477" width="1.5" height="5.6" fill="#1b1b1b"/>
<rect x="1288.56" y="477" width="1.6" height="11.8" fill="#1b1b1b"/>
<text x="1271.44" y="512.2" font-size="19.2"  fill="#1b1b1b" stroke="#1b1b1b" stroke-width="0.25" textLength="35.88" lengthAdjust="spacingAndGlyphs">100</text>
<rect x="1311.08" y="477" width="1.5" height="5.6" fill="#1b1b1b"/>
<rect x="1333.55" y="477" width="1.5" height="5.6" fill="#1b1b1b"/>
<rect x="1356.03" y="477" width="1.5" height="5.6" fill="#1b1b1b"/>
<rect x="1378.5" y="477" width="1.5" height="5.6" fill="#1b1b1b"/>
<rect x="1400.92" y="477" width="1.6" height="11.8" fill="#1b1b1b"/>
<text x="1383.8" y="512.2" font-size="19.2"  fill="#1b1b1b" stroke="#1b1b1b" stroke-width="0.25" textLength="35.88" lengthAdjust="spacingAndGlyphs">200</text>
<rect x="1423.44" y="477" width="1.5" height="5.6" fill="#1b1b1b"/>
<rect x="1445.91" y="477" width="1.5" height="5.6" fill="#1b1b1b"/>
<rect x="1468.39" y="477" width="1.5" height="5.6" fill="#1b1b1b"/>
<rect x="1490.86" y="477" width="1.5" height="5.6" fill="#1b1b1b"/>
<rect x="1513.28" y="477" width="1.6" height="11.8" fill="#1b1b1b"/>
<text x="1496.16" y="512.2" font-size="19.2"  fill="#1b1b1b" stroke="#1b1b1b" stroke-width="0.25" textLength="35.88" lengthAdjust="spacingAndGlyphs">300</text>
<rect x="1535.8" y="477" width="1.5" height="5.6" fill="#1b1b1b"/>
<rect x="1558.27" y="477" width="1.5" height="5.6" fill="#1b1b1b"/>
<rect x="1580.75" y="477" width="1.5" height="5.6" fill="#1b1b1b"/>
<rect x="1603.22" y="477" width="1.5" height="5.6" fill="#1b1b1b"/>
<rect x="1625.64" y="477" width="1.6" height="11.8" fill="#1b1b1b"/>
<text x="1608.52" y="512.2" font-size="19.2"  fill="#1b1b1b" stroke="#1b1b1b" stroke-width="0.25" textLength="35.88" lengthAdjust="spacingAndGlyphs">400</text>
<rect x="1648.16" y="477" width="1.5" height="5.6" fill="#1b1b1b"/>
<rect x="1670.63" y="477" width="1.5" height="5.6" fill="#1b1b1b"/>
<rect x="1693.11" y="477" width="1.5" height="5.6" fill="#1b1b1b"/>
<rect x="1715.58" y="477" width="1.5" height="5.6" fill="#1b1b1b"/>
<rect x="1738" y="477" width="1.6" height="11.8" fill="#1b1b1b"/>
<text x="1720.88" y="512.2" font-size="19.2"  fill="#1b1b1b" stroke="#1b1b1b" stroke-width="0.25" textLength="35.88" lengthAdjust="spacingAndGlyphs">500</text>
<text x="1375.1" y="538.9" font-size="24.4" font-weight="bold" fill="#000" stroke="#000" stroke-width="0.25" textLength="164.52" lengthAdjust="spacingAndGlyphs">Latency [ns]</text>
<g transform="translate(1074 359.2) rotate(-90)">
<text x="-76.8" y="0" font-size="24.4" font-weight="bold" fill="#000" stroke="#000" stroke-width="0.25" textLength="153.61" lengthAdjust="spacingAndGlyphs">Occurences</text>
</g>
<g transform="translate(1102.3 359.2) rotate(-90)">
<text x="-21.4" y="0" font-size="24.4" font-weight="bold" fill="#000" stroke="#000" stroke-width="0.25" textLength="42.85" lengthAdjust="spacingAndGlyphs">[%]</text>
</g>
<rect x="1211.96" y="368.4" width="2" height="96.6" fill="#ff0000"/>
<rect x="1217.57" y="368.4" width="2" height="96.6" fill="#ff0000"/>
<rect x="1224.31" y="368.4" width="2" height="96.6" fill="#ff0000"/>
<rect x="1229.93" y="368.4" width="2" height="96.6" fill="#ff0000"/>
<rect x="1244.54" y="368.4" width="2" height="96.6" fill="#ff0000"/>
<rect x="1245.66" y="368.4" width="2" height="96.6" fill="#ff0000"/>
<rect x="1246.79" y="368.4" width="2" height="96.6" fill="#ff0000"/>
<rect x="1254.65" y="368.4" width="2" height="96.6" fill="#ff0000"/>
<rect x="1255.78" y="368.4" width="2" height="96.6" fill="#ff0000"/>
<rect x="1260.27" y="368.4" width="2" height="96.6" fill="#ff0000"/>
<rect x="1261.39" y="368.4" width="2" height="96.6" fill="#ff0000"/>
<rect x="1271.51" y="368.4" width="2" height="96.6" fill="#ff0000"/>
<rect x="1274.88" y="368.4" width="2" height="96.6" fill="#ff0000"/>
<rect x="1280.49" y="368.4" width="2" height="96.6" fill="#ff0000"/>
<rect x="1286.11" y="368.4" width="2" height="96.6" fill="#ff0000"/>
<rect x="1291.73" y="368.4" width="2" height="96.6" fill="#ff0000"/>
<rect x="1296.23" y="368.4" width="2" height="96.6" fill="#ff0000"/>
<rect x="1299.6" y="368.4" width="2" height="96.6" fill="#ff0000"/>
<rect x="1305.21" y="368.4" width="2" height="96.6" fill="#ff0000"/>
<rect x="1306.34" y="368.4" width="2" height="96.6" fill="#ff0000"/>
<rect x="1307.46" y="368.4" width="2" height="96.6" fill="#ff0000"/>
<rect x="1317.57" y="368.4" width="2" height="96.6" fill="#ff0000"/>
<rect x="1326.56" y="368.4" width="2" height="96.6" fill="#ff0000"/>
<rect x="1327.69" y="368.4" width="2" height="96.6" fill="#ff0000"/>
<rect x="1328.81" y="368.4" width="2" height="96.6" fill="#ff0000"/>
<rect x="1331.06" y="368.4" width="2" height="96.6" fill="#ff0000"/>
<rect x="1334.43" y="368.4" width="2" height="96.6" fill="#ff0000"/>
<rect x="1352.41" y="368.4" width="2" height="96.6" fill="#ff0000"/>
<rect x="1358.02" y="368.4" width="2" height="96.6" fill="#ff0000"/>
<rect x="1363.64" y="368.4" width="2" height="96.6" fill="#ff0000"/>
<rect x="1368.14" y="368.4" width="2" height="96.6" fill="#ff0000"/>
<rect x="1369.26" y="368.4" width="2" height="96.6" fill="#ff0000"/>
<rect x="1371.51" y="368.4" width="2" height="96.6" fill="#ff0000"/>
<rect x="1372.63" y="368.4" width="2" height="96.6" fill="#ff0000"/>
<rect x="1373.75" y="368.4" width="2" height="96.6" fill="#ff0000"/>
<rect x="1374.88" y="368.4" width="2" height="96.6" fill="#ff0000"/>
<rect x="1382.74" y="368.4" width="2" height="96.6" fill="#ff0000"/>
<rect x="1389.48" y="368.4" width="2" height="96.6" fill="#ff0000"/>
<rect x="1393.98" y="368.4" width="2" height="96.6" fill="#ff0000"/>
<rect x="1396.23" y="368.4" width="2" height="96.6" fill="#ff0000"/>
<rect x="1399.6" y="368.4" width="2" height="96.6" fill="#ff0000"/>
<rect x="1401.84" y="368.4" width="2" height="96.6" fill="#ff0000"/>
<rect x="1404.09" y="368.4" width="2" height="96.6" fill="#ff0000"/>
<rect x="1405.21" y="368.4" width="2" height="96.6" fill="#ff0000"/>
<rect x="1409.71" y="368.4" width="2" height="96.6" fill="#ff0000"/>
<rect x="1415.33" y="368.4" width="2" height="96.6" fill="#ff0000"/>
<rect x="1420.94" y="368.4" width="2" height="96.6" fill="#ff0000"/>
<rect x="1425.44" y="368.4" width="2" height="96.6" fill="#ff0000"/>
<rect x="1435.55" y="368.4" width="2" height="96.6" fill="#ff0000"/>
<rect x="1453.53" y="368.4" width="2" height="96.6" fill="#ff0000"/>
<rect x="1455.78" y="368.4" width="2" height="96.6" fill="#ff0000"/>
<rect x="1458.02" y="368.4" width="2" height="96.6" fill="#ff0000"/>
<rect x="1460.27" y="368.4" width="2" height="96.6" fill="#ff0000"/>
<rect x="1463.64" y="368.4" width="2" height="96.6" fill="#ff0000"/>
<rect x="1465.89" y="368.4" width="2" height="96.6" fill="#ff0000"/>
<rect x="1477.12" y="368.4" width="2" height="96.6" fill="#ff0000"/>
<rect x="1479.37" y="368.4" width="2" height="96.6" fill="#ff0000"/>
<rect x="1481.62" y="368.4" width="2" height="96.6" fill="#ff0000"/>
<rect x="1482.74" y="368.4" width="2" height="96.6" fill="#ff0000"/>
<rect x="1496.23" y="368.4" width="2" height="96.6" fill="#ff0000"/>
<rect x="1497.35" y="368.4" width="2" height="96.6" fill="#ff0000"/>
<rect x="1498.47" y="368.4" width="2" height="96.6" fill="#ff0000"/>
<rect x="1499.6" y="368.4" width="2" height="96.6" fill="#ff0000"/>
<rect x="1502.97" y="368.4" width="2" height="96.6" fill="#ff0000"/>
<rect x="1504.09" y="368.4" width="2" height="96.6" fill="#ff0000"/>
<rect x="1507.46" y="368.4" width="2" height="96.6" fill="#ff0000"/>
<rect x="1508.59" y="368.4" width="2" height="96.6" fill="#ff0000"/>
<rect x="1509.71" y="368.4" width="2" height="96.6" fill="#ff0000"/>
<rect x="1510.83" y="368.4" width="2" height="96.6" fill="#ff0000"/>
<rect x="1515.33" y="368.4" width="2" height="96.6" fill="#ff0000"/>
<rect x="1516.45" y="368.4" width="2" height="96.6" fill="#ff0000"/>
<rect x="1517.57" y="368.4" width="2" height="96.6" fill="#ff0000"/>
<rect x="1518.7" y="368.4" width="2" height="96.6" fill="#ff0000"/>
<rect x="1519.82" y="368.4" width="2" height="96.6" fill="#ff0000"/>
<rect x="1520.95" y="368.4" width="2" height="96.6" fill="#ff0000"/>
<rect x="1522.07" y="368.4" width="2" height="96.6" fill="#ff0000"/>
<rect x="1528.81" y="368.4" width="2" height="96.6" fill="#ff0000"/>
<rect x="1544.54" y="368.4" width="2" height="96.6" fill="#ff0000"/>
<rect x="1552.41" y="368.4" width="2" height="96.6" fill="#ff0000"/>
<rect x="1561.39" y="368.4" width="2" height="96.6" fill="#ff0000"/>
<rect x="1564.77" y="368.4" width="2" height="96.6" fill="#ff0000"/>
<rect x="1568.14" y="368.4" width="2" height="96.6" fill="#ff0000"/>
<rect x="1579.37" y="368.4" width="2" height="96.6" fill="#ff0000"/>
<rect x="1582.74" y="368.4" width="2" height="96.6" fill="#ff0000"/>
<rect x="1615.33" y="368.4" width="2" height="96.6" fill="#ff0000"/>
<rect x="1624.32" y="368.4" width="2" height="96.6" fill="#ff0000"/>
<rect x="1633.31" y="368.4" width="2" height="96.6" fill="#ff0000"/>
<rect x="1637.8" y="368.4" width="2" height="96.6" fill="#ff0000"/>
<rect x="1642.29" y="368.4" width="2" height="96.6" fill="#ff0000"/>
<rect x="1645.66" y="368.4" width="2" height="96.6" fill="#ff0000"/>
<rect x="1646.79" y="368.4" width="2" height="96.6" fill="#ff0000"/>
<rect x="1668.14" y="368.4" width="2" height="96.6" fill="#ff0000"/>
<rect x="1238.92" y="273.8" width="2" height="191.2" fill="#ff0000"/>
<rect x="1262.52" y="273.8" width="2" height="191.2" fill="#ff0000"/>
<rect x="1267.01" y="273.8" width="2" height="191.2" fill="#ff0000"/>
<rect x="1268.14" y="273.8" width="2" height="191.2" fill="#ff0000"/>
<rect x="1333.6" y="273.8" width="1.4" height="191.2" fill="#ff0000"/>
<rect x="1384.99" y="273.8" width="2" height="191.2" fill="#ff0000"/>
<rect x="1398.47" y="273.8" width="2" height="191.2" fill="#ff0000"/>
<rect x="1407.76" y="273.8" width="1.4" height="191.2" fill="#ff0000"/>
<rect x="1422.37" y="273.8" width="1.4" height="191.2" fill="#ff0000"/>
<rect x="1454.65" y="273.8" width="2" height="191.2" fill="#ff0000"/>
<rect x="1456.9" y="273.8" width="2" height="191.2" fill="#ff0000"/>
<rect x="1459.15" y="273.8" width="2" height="191.2" fill="#ff0000"/>
<rect x="1461.39" y="273.8" width="2" height="191.2" fill="#ff0000"/>
<rect x="1483.87" y="273.8" width="2" height="191.2" fill="#ff0000"/>
<rect x="1567.01" y="273.8" width="2" height="191.2" fill="#ff0000"/>
<rect x="1620.95" y="273.8" width="2" height="191.2" fill="#ff0000"/>
<rect x="1644.54" y="273.8" width="2" height="191.2" fill="#ff0000"/>
<rect x="1052.5" y="554.9" width="705.2" height="583.1" fill="#ffffff" stroke="#c4c4c4" stroke-width="1.4"/>
<rect x="1053.2" y="555.6" width="683.3" height="27.6" fill="url(#gHdr)"/>
<rect x="1053.2" y="583" width="683.3" height="2.5" fill="#aaaaaa"/>
<rect x="1201.4" y="556" width="1.2" height="27" fill="#d2d2d2"/>
<text x="1057.3" y="576.8" font-size="19.2"  fill="#1b1b1b" stroke="#1b1b1b" stroke-width="0.25" textLength="68.75" lengthAdjust="spacingAndGlyphs">Latency</text>
<text x="1207" y="576.8" font-size="19.2"  fill="#1b1b1b" stroke="#1b1b1b" stroke-width="0.25" textLength="104.04" lengthAdjust="spacingAndGlyphs">Occurences</text>
<rect x="1736.5" y="555.6" width="21.2" height="582" fill="#e4e4e4"/>
<rect x="1737.2" y="555.6" width="20" height="20.3" fill="url(#gThumb)"/>
<rect x="1736.2" y="575.2" width="21.2" height="1.4" fill="#c6c6c6"/>
<polygon points="1740.5,567.5 1746.4,561.8 1752.3,567.5" fill="#4a4a4a"/>
<rect x="1737.2" y="576.6" width="20" height="137.4" fill="url(#gThumb)"/>
<rect x="1736.2" y="713.4" width="21.2" height="1.4" fill="#c6c6c6"/>
<rect x="1737.2" y="1117.8" width="20" height="19.8" fill="url(#gThumb)"/>
<rect x="1736.2" y="1117.2" width="21.2" height="1.4" fill="#c6c6c6"/>
<polygon points="1740.5,1123.8 1746.4,1129.5 1752.3,1123.8" fill="#4a4a4a"/>
<rect x="1735.8" y="555.6" width="1.2" height="582" fill="#c6c6c6"/>
<rect x="1757" y="555.6" width="1.2" height="582" fill="#c6c6c6"/>
<g clip-path="url(#cTbl)">
<polygon points="1065,590.5 1071.5,596 1065,601.5" fill="#5c5c5c"/>
<text x="1089" y="602" font-size="19.2"  fill="#1b1b1b" stroke="#1b1b1b" stroke-width="0.25" textLength="49.79" lengthAdjust="spacingAndGlyphs">32 ns</text>
<rect x="1204.3" y="585.5" width="1" height="19.8" fill="#dadada"/>
<rect x="1734.9" y="585.5" width="1.7" height="20.5" fill="#a9a9a9"/>
<rect x="1206.5" y="605.4" width="528.5" height="2.7" fill="#a6a6a6"/>
<rect x="1201.7" y="585.7" width="2.7" height="19.6" rx="1.2" fill="#2b6c9c"/>
<text x="1436.61" y="602" font-size="19.2"  fill="#1b1b1b" stroke="#1b1b1b" stroke-width="0.25" textLength="65.75" lengthAdjust="spacingAndGlyphs">0.91 %</text>
<polygon points="1065,613 1071.5,618.5 1065,624" fill="#5c5c5c"/>
<text x="1089" y="624.5" font-size="19.2"  fill="#1b1b1b" stroke="#1b1b1b" stroke-width="0.25" textLength="49.79" lengthAdjust="spacingAndGlyphs">37 ns</text>
<rect x="1204.3" y="608" width="1" height="19.8" fill="#dadada"/>
<rect x="1734.9" y="608" width="1.7" height="20.5" fill="#a9a9a9"/>
<rect x="1206.5" y="627.9" width="528.5" height="2.7" fill="#a6a6a6"/>
<rect x="1201.7" y="608.2" width="2.7" height="19.6" rx="1.2" fill="#2b6c9c"/>
<text x="1436.61" y="624.5" font-size="19.2"  fill="#1b1b1b" stroke="#1b1b1b" stroke-width="0.25" textLength="65.75" lengthAdjust="spacingAndGlyphs">0.91 %</text>
<polygon points="1065,635.5 1071.5,641 1065,646.5" fill="#5c5c5c"/>
<text x="1089" y="647" font-size="19.2"  fill="#1b1b1b" stroke="#1b1b1b" stroke-width="0.25" textLength="49.79" lengthAdjust="spacingAndGlyphs">43 ns</text>
<rect x="1204.3" y="630.5" width="1" height="19.8" fill="#dadada"/>
<rect x="1734.9" y="630.5" width="1.7" height="20.5" fill="#a9a9a9"/>
<rect x="1206.5" y="650.4" width="528.5" height="2.7" fill="#a6a6a6"/>
<rect x="1201.7" y="630.7" width="2.7" height="19.6" rx="1.2" fill="#2b6c9c"/>
<text x="1436.61" y="647" font-size="19.2"  fill="#1b1b1b" stroke="#1b1b1b" stroke-width="0.25" textLength="65.75" lengthAdjust="spacingAndGlyphs">0.91 %</text>
<polygon points="1065,658 1071.5,663.5 1065,669" fill="#5c5c5c"/>
<text x="1089" y="669.5" font-size="19.2"  fill="#1b1b1b" stroke="#1b1b1b" stroke-width="0.25" textLength="49.79" lengthAdjust="spacingAndGlyphs">48 ns</text>
<rect x="1204.3" y="653" width="1" height="19.8" fill="#dadada"/>
<rect x="1734.9" y="653" width="1.7" height="20.5" fill="#a9a9a9"/>
<rect x="1206.5" y="672.9" width="528.5" height="2.7" fill="#a6a6a6"/>
<rect x="1201.7" y="653.2" width="2.7" height="19.6" rx="1.2" fill="#2b6c9c"/>
<text x="1436.61" y="669.5" font-size="19.2"  fill="#1b1b1b" stroke="#1b1b1b" stroke-width="0.25" textLength="65.75" lengthAdjust="spacingAndGlyphs">0.91 %</text>
<polygon points="1065,680.5 1071.5,686 1065,691.5" fill="#5c5c5c"/>
<text x="1089" y="692" font-size="19.2"  fill="#1b1b1b" stroke="#1b1b1b" stroke-width="0.25" textLength="49.79" lengthAdjust="spacingAndGlyphs">56 ns</text>
<rect x="1204.3" y="675.5" width="1" height="19.8" fill="#dadada"/>
<rect x="1734.9" y="675.5" width="1.7" height="20.5" fill="#a9a9a9"/>
<rect x="1206.5" y="695.4" width="528.5" height="2.7" fill="#a6a6a6"/>
<rect x="1201.7" y="675.7" width="5.2" height="19.6" rx="1.2" fill="#2b6c9c"/>
<text x="1436.61" y="692" font-size="19.2"  fill="#1b1b1b" stroke="#1b1b1b" stroke-width="0.25" textLength="65.75" lengthAdjust="spacingAndGlyphs">1.82 %</text>
<polygon points="1065,703 1071.5,708.5 1065,714" fill="#5c5c5c"/>
<text x="1089" y="714.5" font-size="19.2"  fill="#1b1b1b" stroke="#1b1b1b" stroke-width="0.25" textLength="49.79" lengthAdjust="spacingAndGlyphs">61 ns</text>
<rect x="1204.3" y="698" width="1" height="19.8" fill="#dadada"/>
<rect x="1734.9" y="698" width="1.7" height="20.5" fill="#a9a9a9"/>
<rect x="1206.5" y="717.9" width="528.5" height="2.7" fill="#a6a6a6"/>
<rect x="1201.7" y="698.2" width="2.7" height="19.6" rx="1.2" fill="#2b6c9c"/>
<text x="1436.61" y="714.5" font-size="19.2"  fill="#1b1b1b" stroke="#1b1b1b" stroke-width="0.25" textLength="65.75" lengthAdjust="spacingAndGlyphs">0.91 %</text>
<polygon points="1065,725.5 1071.5,731 1065,736.5" fill="#5c5c5c"/>
<text x="1089" y="737" font-size="19.2"  fill="#1b1b1b" stroke="#1b1b1b" stroke-width="0.25" textLength="49.79" lengthAdjust="spacingAndGlyphs">62 ns</text>
<rect x="1204.3" y="720.5" width="1" height="19.8" fill="#dadada"/>
<rect x="1734.9" y="720.5" width="1.7" height="20.5" fill="#a9a9a9"/>
<rect x="1206.5" y="740.4" width="528.5" height="2.7" fill="#a6a6a6"/>
<rect x="1201.7" y="720.7" width="2.7" height="19.6" rx="1.2" fill="#2b6c9c"/>
<text x="1436.61" y="737" font-size="19.2"  fill="#1b1b1b" stroke="#1b1b1b" stroke-width="0.25" textLength="65.75" lengthAdjust="spacingAndGlyphs">0.91 %</text>
<polygon points="1065,748 1071.5,753.5 1065,759" fill="#5c5c5c"/>
<text x="1089" y="759.5" font-size="19.2"  fill="#1b1b1b" stroke="#1b1b1b" stroke-width="0.25" textLength="49.79" lengthAdjust="spacingAndGlyphs">63 ns</text>
<rect x="1204.3" y="743" width="1" height="19.8" fill="#dadada"/>
<rect x="1734.9" y="743" width="1.7" height="20.5" fill="#a9a9a9"/>
<rect x="1206.5" y="762.9" width="528.5" height="2.7" fill="#a6a6a6"/>
<rect x="1201.7" y="743.2" width="2.7" height="19.6" rx="1.2" fill="#2b6c9c"/>
<text x="1436.61" y="759.5" font-size="19.2"  fill="#1b1b1b" stroke="#1b1b1b" stroke-width="0.25" textLength="65.75" lengthAdjust="spacingAndGlyphs">0.91 %</text>
<polygon points="1065,770.5 1071.5,776 1065,781.5" fill="#5c5c5c"/>
<text x="1089" y="782" font-size="19.2"  fill="#1b1b1b" stroke="#1b1b1b" stroke-width="0.25" textLength="49.79" lengthAdjust="spacingAndGlyphs">70 ns</text>
<rect x="1204.3" y="765.5" width="1" height="19.8" fill="#dadada"/>
<rect x="1734.9" y="765.5" width="1.7" height="20.5" fill="#a9a9a9"/>
<rect x="1206.5" y="785.4" width="528.5" height="2.7" fill="#a6a6a6"/>
<rect x="1201.7" y="765.7" width="2.7" height="19.6" rx="1.2" fill="#2b6c9c"/>
<text x="1436.61" y="782" font-size="19.2"  fill="#1b1b1b" stroke="#1b1b1b" stroke-width="0.25" textLength="65.75" lengthAdjust="spacingAndGlyphs">0.91 %</text>
<polygon points="1065,793 1071.5,798.5 1065,804" fill="#5c5c5c"/>
<text x="1089" y="804.5" font-size="19.2"  fill="#1b1b1b" stroke="#1b1b1b" stroke-width="0.25" textLength="49.79" lengthAdjust="spacingAndGlyphs">71 ns</text>
<rect x="1204.3" y="788" width="1" height="19.8" fill="#dadada"/>
<rect x="1734.9" y="788" width="1.7" height="20.5" fill="#a9a9a9"/>
<rect x="1206.5" y="807.9" width="528.5" height="2.7" fill="#a6a6a6"/>
<rect x="1201.7" y="788.2" width="2.7" height="19.6" rx="1.2" fill="#2b6c9c"/>
<text x="1436.61" y="804.5" font-size="19.2"  fill="#1b1b1b" stroke="#1b1b1b" stroke-width="0.25" textLength="65.75" lengthAdjust="spacingAndGlyphs">0.91 %</text>
<polygon points="1065,815.5 1071.5,821 1065,826.5" fill="#5c5c5c"/>
<text x="1089" y="827" font-size="19.2"  fill="#1b1b1b" stroke="#1b1b1b" stroke-width="0.25" textLength="49.79" lengthAdjust="spacingAndGlyphs">75 ns</text>
<rect x="1204.3" y="810.5" width="1" height="19.8" fill="#dadada"/>
<rect x="1734.9" y="810.5" width="1.7" height="20.5" fill="#a9a9a9"/>
<rect x="1206.5" y="830.4" width="528.5" height="2.7" fill="#a6a6a6"/>
<rect x="1201.7" y="810.7" width="2.7" height="19.6" rx="1.2" fill="#2b6c9c"/>
<text x="1436.61" y="827" font-size="19.2"  fill="#1b1b1b" stroke="#1b1b1b" stroke-width="0.25" textLength="65.75" lengthAdjust="spacingAndGlyphs">0.91 %</text>
<polygon points="1065,838 1071.5,843.5 1065,849" fill="#5c5c5c"/>
<text x="1089" y="849.5" font-size="19.2"  fill="#1b1b1b" stroke="#1b1b1b" stroke-width="0.25" textLength="49.79" lengthAdjust="spacingAndGlyphs">76 ns</text>
<rect x="1204.3" y="833" width="1" height="19.8" fill="#dadada"/>
<rect x="1734.9" y="833" width="1.7" height="20.5" fill="#a9a9a9"/>
<rect x="1206.5" y="852.9" width="528.5" height="2.7" fill="#a6a6a6"/>
<rect x="1201.7" y="833.2" width="2.7" height="19.6" rx="1.2" fill="#2b6c9c"/>
<text x="1436.61" y="849.5" font-size="19.2"  fill="#1b1b1b" stroke="#1b1b1b" stroke-width="0.25" textLength="65.75" lengthAdjust="spacingAndGlyphs">0.91 %</text>
<polygon points="1065,860.5 1071.5,866 1065,871.5" fill="#5c5c5c"/>
<text x="1089" y="872" font-size="19.2"  fill="#1b1b1b" stroke="#1b1b1b" stroke-width="0.25" textLength="49.79" lengthAdjust="spacingAndGlyphs">77 ns</text>
<rect x="1204.3" y="855.5" width="1" height="19.8" fill="#dadada"/>
<rect x="1734.9" y="855.5" width="1.7" height="20.5" fill="#a9a9a9"/>
<rect x="1206.5" y="875.4" width="528.5" height="2.7" fill="#a6a6a6"/>
<rect x="1201.7" y="855.7" width="5.2" height="19.6" rx="1.2" fill="#2b6c9c"/>
<text x="1436.61" y="872" font-size="19.2"  fill="#1b1b1b" stroke="#1b1b1b" stroke-width="0.25" textLength="65.75" lengthAdjust="spacingAndGlyphs">1.82 %</text>
<polygon points="1065,883 1071.5,888.5 1065,894" fill="#5c5c5c"/>
<text x="1089" y="894.5" font-size="19.2"  fill="#1b1b1b" stroke="#1b1b1b" stroke-width="0.25" textLength="49.79" lengthAdjust="spacingAndGlyphs">81 ns</text>
<rect x="1204.3" y="878" width="1" height="19.8" fill="#dadada"/>
<rect x="1734.9" y="878" width="1.7" height="20.5" fill="#a9a9a9"/>
<rect x="1206.5" y="897.9" width="528.5" height="2.7" fill="#a6a6a6"/>
<rect x="1201.7" y="878.2" width="5.2" height="19.6" rx="1.2" fill="#2b6c9c"/>
<text x="1436.61" y="894.5" font-size="19.2"  fill="#1b1b1b" stroke="#1b1b1b" stroke-width="0.25" textLength="65.75" lengthAdjust="spacingAndGlyphs">1.82 %</text>
<polygon points="1065,905.5 1071.5,911 1065,916.5" fill="#5c5c5c"/>
<text x="1089" y="917" font-size="19.2"  fill="#1b1b1b" stroke="#1b1b1b" stroke-width="0.25" textLength="49.79" lengthAdjust="spacingAndGlyphs">82 ns</text>
<rect x="1204.3" y="900.5" width="1" height="19.8" fill="#dadada"/>
<rect x="1734.9" y="900.5" width="1.7" height="20.5" fill="#a9a9a9"/>
<rect x="1206.5" y="920.4" width="528.5" height="2.7" fill="#a6a6a6"/>
<rect x="1201.7" y="900.7" width="5.2" height="19.6" rx="1.2" fill="#2b6c9c"/>
<text x="1436.61" y="917" font-size="19.2"  fill="#1b1b1b" stroke="#1b1b1b" stroke-width="0.25" textLength="65.75" lengthAdjust="spacingAndGlyphs">1.82 %</text>
<polygon points="1065,928 1071.5,933.5 1065,939" fill="#5c5c5c"/>
<text x="1089" y="939.5" font-size="19.2"  fill="#1b1b1b" stroke="#1b1b1b" stroke-width="0.25" textLength="49.79" lengthAdjust="spacingAndGlyphs">85 ns</text>
<rect x="1204.3" y="923" width="1" height="19.8" fill="#dadada"/>
<rect x="1734.9" y="923" width="1.7" height="20.5" fill="#a9a9a9"/>
<rect x="1206.5" y="942.9" width="528.5" height="2.7" fill="#a6a6a6"/>
<rect x="1201.7" y="923.2" width="2.7" height="19.6" rx="1.2" fill="#2b6c9c"/>
<text x="1436.61" y="939.5" font-size="19.2"  fill="#1b1b1b" stroke="#1b1b1b" stroke-width="0.25" textLength="65.75" lengthAdjust="spacingAndGlyphs">0.91 %</text>
<polygon points="1065,950.5 1071.5,956 1065,961.5" fill="#5c5c5c"/>
<text x="1089" y="962" font-size="19.2"  fill="#1b1b1b" stroke="#1b1b1b" stroke-width="0.25" textLength="49.79" lengthAdjust="spacingAndGlyphs">88 ns</text>
<rect x="1204.3" y="945.5" width="1" height="19.8" fill="#dadada"/>
<rect x="1734.9" y="945.5" width="1.7" height="20.5" fill="#a9a9a9"/>
<rect x="1206.5" y="965.4" width="528.5" height="2.7" fill="#a6a6a6"/>
<rect x="1201.7" y="945.7" width="2.7" height="19.6" rx="1.2" fill="#2b6c9c"/>
<text x="1436.61" y="962" font-size="19.2"  fill="#1b1b1b" stroke="#1b1b1b" stroke-width="0.25" textLength="65.75" lengthAdjust="spacingAndGlyphs">0.91 %</text>
<polygon points="1065,973 1071.5,978.5 1065,984" fill="#5c5c5c"/>
<text x="1089" y="984.5" font-size="19.2"  fill="#1b1b1b" stroke="#1b1b1b" stroke-width="0.25" textLength="49.79" lengthAdjust="spacingAndGlyphs">93 ns</text>
<rect x="1204.3" y="968" width="1" height="19.8" fill="#dadada"/>
<rect x="1734.9" y="968" width="1.7" height="20.5" fill="#a9a9a9"/>
<rect x="1206.5" y="987.9" width="528.5" height="2.7" fill="#a6a6a6"/>
<rect x="1201.7" y="968.2" width="2.7" height="19.6" rx="1.2" fill="#2b6c9c"/>
<text x="1436.61" y="984.5" font-size="19.2"  fill="#1b1b1b" stroke="#1b1b1b" stroke-width="0.25" textLength="65.75" lengthAdjust="spacingAndGlyphs">0.91 %</text>
<polygon points="1065,995.5 1071.5,1001 1065,1006.5" fill="#5c5c5c"/>
<text x="1089" y="1007" font-size="19.2"  fill="#1b1b1b" stroke="#1b1b1b" stroke-width="0.25" textLength="49.79" lengthAdjust="spacingAndGlyphs">98 ns</text>
<rect x="1204.3" y="990.5" width="1" height="19.8" fill="#dadada"/>
<rect x="1734.9" y="990.5" width="1.7" height="20.5" fill="#a9a9a9"/>
<rect x="1206.5" y="1010.4" width="528.5" height="2.7" fill="#a6a6a6"/>
<rect x="1201.7" y="990.7" width="2.7" height="19.6" rx="1.2" fill="#2b6c9c"/>
<text x="1436.61" y="1007" font-size="19.2"  fill="#1b1b1b" stroke="#1b1b1b" stroke-width="0.25" textLength="65.75" lengthAdjust="spacingAndGlyphs">0.91 %</text>
<polygon points="1065,1018 1071.5,1023.5 1065,1029" fill="#5c5c5c"/>
<text x="1089" y="1029.5" font-size="19.2"  fill="#1b1b1b" stroke="#1b1b1b" stroke-width="0.25" textLength="61.11" lengthAdjust="spacingAndGlyphs">103 ns</text>
<rect x="1204.3" y="1013" width="1" height="19.8" fill="#dadada"/>
<rect x="1734.9" y="1013" width="1.7" height="20.5" fill="#a9a9a9"/>
<rect x="1206.5" y="1032.9" width="528.5" height="2.7" fill="#a6a6a6"/>
<rect x="1201.7" y="1013.2" width="2.7" height="19.6" rx="1.2" fill="#2b6c9c"/>
<text x="1436.61" y="1029.5" font-size="19.2"  fill="#1b1b1b" stroke="#1b1b1b" stroke-width="0.25" textLength="65.75" lengthAdjust="spacingAndGlyphs">0.91 %</text>
<polygon points="1065,1040.5 1071.5,1046 1065,1051.5" fill="#5c5c5c"/>
<text x="1089" y="1052" font-size="19.2"  fill="#1b1b1b" stroke="#1b1b1b" stroke-width="0.25" textLength="61.11" lengthAdjust="spacingAndGlyphs">107 ns</text>
<rect x="1204.3" y="1035.5" width="1" height="19.8" fill="#dadada"/>
<rect x="1734.9" y="1035.5" width="1.7" height="20.5" fill="#a9a9a9"/>
<rect x="1206.5" y="1055.4" width="528.5" height="2.7" fill="#a6a6a6"/>
<rect x="1201.7" y="1035.7" width="2.7" height="19.6" rx="1.2" fill="#2b6c9c"/>
<text x="1436.61" y="1052" font-size="19.2"  fill="#1b1b1b" stroke="#1b1b1b" stroke-width="0.25" textLength="65.75" lengthAdjust="spacingAndGlyphs">0.91 %</text>
<polygon points="1065,1063 1071.5,1068.5 1065,1074" fill="#5c5c5c"/>
<text x="1089" y="1074.5" font-size="19.2"  fill="#1b1b1b" stroke="#1b1b1b" stroke-width="0.25" textLength="59.6" lengthAdjust="spacingAndGlyphs">110 ns</text>
<rect x="1204.3" y="1058" width="1" height="19.8" fill="#dadada"/>
<rect x="1734.9" y="1058" width="1.7" height="20.5" fill="#a9a9a9"/>
<rect x="1206.5" y="1077.9" width="528.5" height="2.7" fill="#a6a6a6"/>
<rect x="1201.7" y="1058.2" width="2.7" height="19.6" rx="1.2" fill="#2b6c9c"/>
<text x="1436.61" y="1074.5" font-size="19.2"  fill="#1b1b1b" stroke="#1b1b1b" stroke-width="0.25" textLength="65.75" lengthAdjust="spacingAndGlyphs">0.91 %</text>
<polygon points="1065,1085.5 1071.5,1091 1065,1096.5" fill="#5c5c5c"/>
<text x="1089" y="1097" font-size="19.2"  fill="#1b1b1b" stroke="#1b1b1b" stroke-width="0.25" textLength="59.6" lengthAdjust="spacingAndGlyphs">115 ns</text>
<rect x="1204.3" y="1080.5" width="1" height="19.8" fill="#dadada"/>
<rect x="1734.9" y="1080.5" width="1.7" height="20.5" fill="#a9a9a9"/>
<rect x="1206.5" y="1100.4" width="528.5" height="2.7" fill="#a6a6a6"/>
<rect x="1201.7" y="1080.7" width="2.7" height="19.6" rx="1.2" fill="#2b6c9c"/>
<text x="1436.61" y="1097" font-size="19.2"  fill="#1b1b1b" stroke="#1b1b1b" stroke-width="0.25" textLength="65.75" lengthAdjust="spacingAndGlyphs">0.91 %</text>
<polygon points="1065,1108 1071.5,1113.5 1065,1119" fill="#5c5c5c"/>
<text x="1089" y="1119.5" font-size="19.2"  fill="#1b1b1b" stroke="#1b1b1b" stroke-width="0.25" textLength="59.6" lengthAdjust="spacingAndGlyphs">116 ns</text>
<rect x="1204.3" y="1103" width="1" height="19.8" fill="#dadada"/>
<rect x="1734.9" y="1103" width="1.7" height="20.5" fill="#a9a9a9"/>
<rect x="1206.5" y="1122.9" width="528.5" height="2.7" fill="#a6a6a6"/>
<rect x="1201.7" y="1103.2" width="2.7" height="19.6" rx="1.2" fill="#2b6c9c"/>
<text x="1436.61" y="1119.5" font-size="19.2"  fill="#1b1b1b" stroke="#1b1b1b" stroke-width="0.25" textLength="65.75" lengthAdjust="spacingAndGlyphs">0.91 %</text>
<polygon points="1065,1130.5 1071.5,1136 1065,1141.5" fill="#5c5c5c"/>
<text x="1089" y="1142" font-size="19.2"  fill="#1b1b1b" stroke="#1b1b1b" stroke-width="0.25" textLength="59.6" lengthAdjust="spacingAndGlyphs">117 ns</text>
<rect x="1204.3" y="1125.5" width="1" height="19.8" fill="#dadada"/>
<rect x="1734.9" y="1125.5" width="1.7" height="20.5" fill="#a9a9a9"/>
<rect x="1206.5" y="1145.4" width="528.5" height="2.7" fill="#a6a6a6"/>
<rect x="1201.7" y="1125.7" width="2.7" height="19.6" rx="1.2" fill="#2b6c9c"/>
<text x="1436.61" y="1142" font-size="19.2"  fill="#1b1b1b" stroke="#1b1b1b" stroke-width="0.25" textLength="65.75" lengthAdjust="spacingAndGlyphs">0.91 %</text>
</g>
<rect x="1787" y="1214.3" width="1.5" height="1.5" fill="#b8b8b8"/>
<rect x="1791.5" y="1214.3" width="1.5" height="1.5" fill="#b8b8b8"/>
<rect x="1791.5" y="1209.8" width="1.5" height="1.5" fill="#b8b8b8"/>
<rect x="1796" y="1214.3" width="1.5" height="1.5" fill="#b8b8b8"/>
<rect x="1796" y="1209.8" width="1.5" height="1.5" fill="#b8b8b8"/>
<rect x="1796" y="1205.5" width="1.5" height="1.5" fill="#b8b8b8"/>
</svg></body></html>
